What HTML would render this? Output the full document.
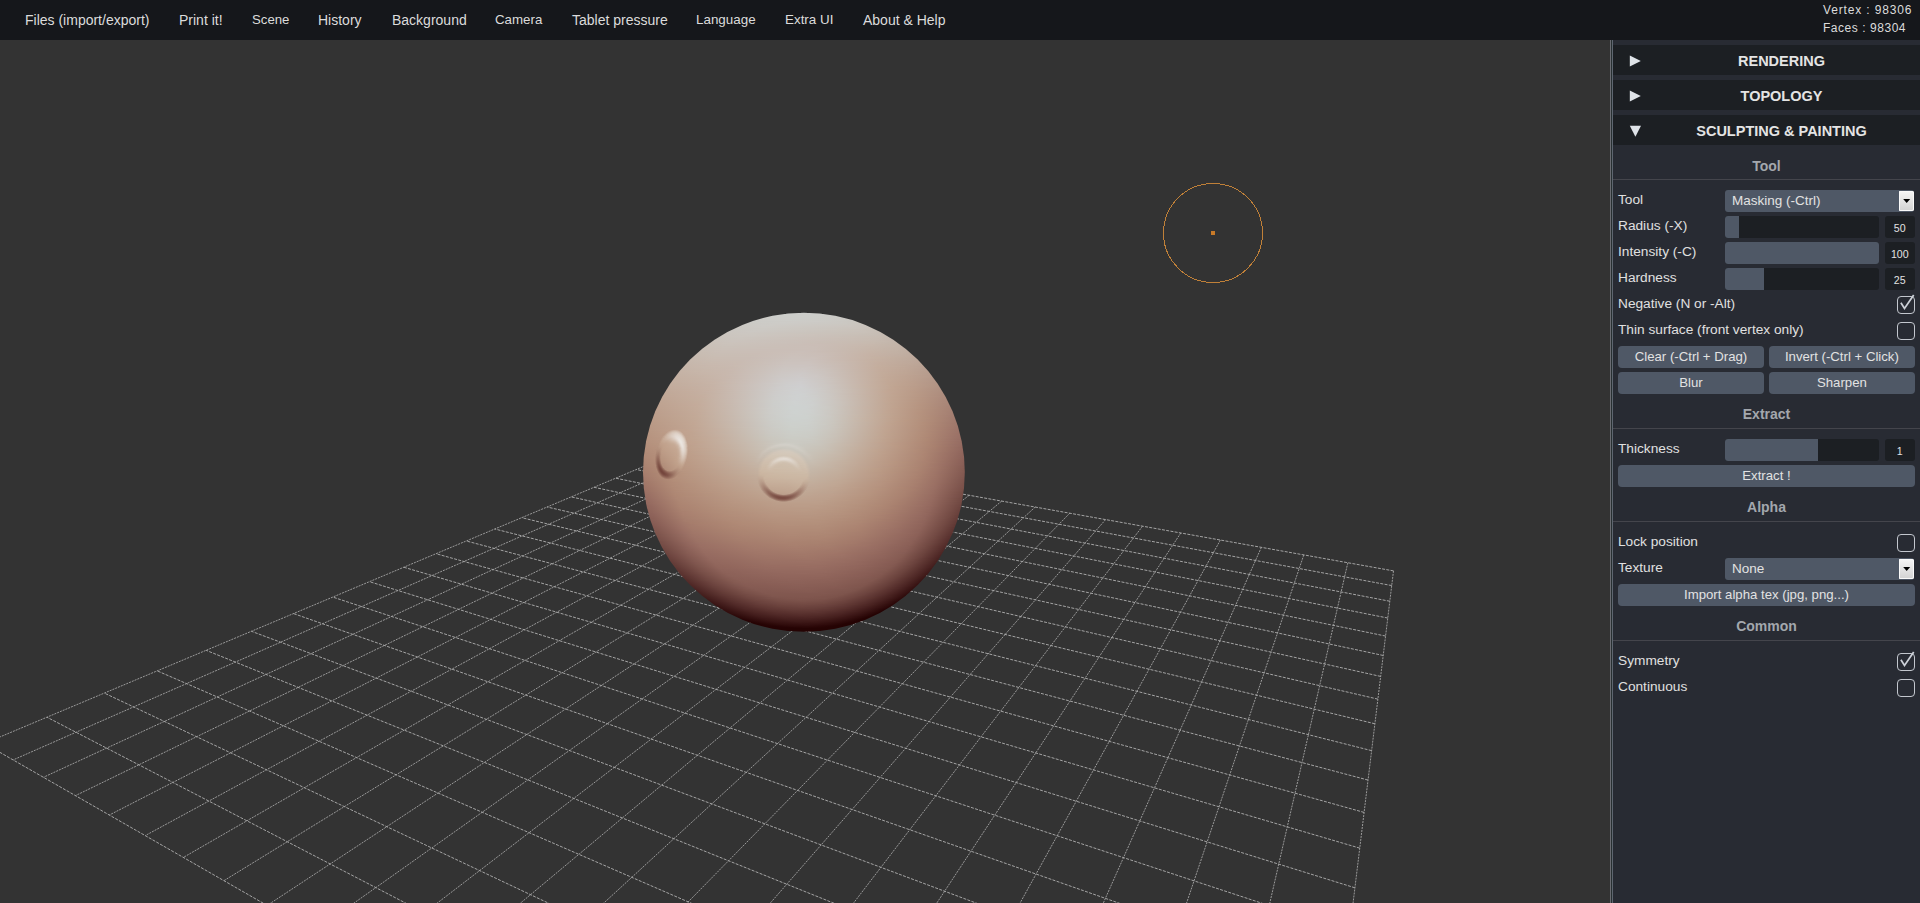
<!DOCTYPE html>
<html><head><meta charset="utf-8">
<style>
html,body{margin:0;padding:0;width:1920px;height:903px;overflow:hidden;background:#333333;font-family:"Liberation Sans",sans-serif;}
#scene{position:absolute;left:0;top:0;}
#topbar{position:absolute;left:0;top:0;width:1920px;height:40px;background:#15171b;color:#dcdcdc;font-size:14px;}
#topbar span{position:absolute;top:12px;white-space:nowrap;line-height:16px;}
#stats{position:absolute;left:1823px;top:1px;font-size:12px;line-height:18px;color:#dcdcdc;}
#stats div{white-space:nowrap;}
.vl{position:absolute;top:40px;width:1px;height:863px;}
#panel{position:absolute;left:1613px;top:40px;width:307px;height:863px;background:#282b33;color:#e0e0e0;}
.hdr{position:absolute;left:0;width:307px;height:30px;background:#1c1f23;}
.arr{position:absolute;}
.tx{position:absolute;white-space:nowrap;line-height:16px;}
.tc{position:absolute;left:0;width:307px;text-align:center;font-weight:bold;line-height:16px;}
.ln{position:absolute;left:0;width:307px;height:1px;background:#44454c;}
.sel{position:absolute;background:#4f5866;border-radius:3px;}
.sel .v{position:absolute;left:7px;top:2.5px;font-size:13.5px;line-height:16px;color:#e2e2e2;white-space:nowrap;}
.sel .ar{position:absolute;right:0;top:1px;width:15.5px;height:20px;background:linear-gradient(#f6f6f6,#d2d2d2);border-radius:1px 2px 2px 1px;box-shadow:inset 0 0 0 1px #fafafa;}
.sel .ar svg{position:absolute;left:0;top:0;}
.sl{position:absolute;background:#1c1f23;border-radius:3px;overflow:hidden;}
.sl .f{position:absolute;left:0;top:0;bottom:0;background:#4f5866;}
.num{position:absolute;background:#1c1f23;border-radius:3px;font-size:10.6px;text-align:center;line-height:24.5px;color:#e2e2e2;}
.cb{position:absolute;box-sizing:border-box;border:1.5px solid #c3c7ce;border-radius:4px;}
.btn{position:absolute;background:#4f5866;border-radius:4px;text-align:center;line-height:22px;font-size:13.2px;color:#e2e2e2;white-space:nowrap;}
</style></head><body>
<svg id="scene" width="1920" height="903" viewBox="0 0 1920 903">
<defs>
<clipPath id="sc"><ellipse cx="803.9" cy="472.3" rx="160.9" ry="159.5"/></clipPath>
<linearGradient id="g312" gradientUnits="userSpaceOnUse" x1="801.5" x2="806.5"><stop offset="0" stop-color="#cdcecb"/><stop offset="1" stop-color="#cdcecb"/></linearGradient>
<linearGradient id="g313" gradientUnits="userSpaceOnUse" x1="786.5" x2="821.5"><stop offset="0" stop-color="#cdcecb"/><stop offset="1" stop-color="#cdcdca"/></linearGradient>
<linearGradient id="g314" gradientUnits="userSpaceOnUse" x1="778.5" x2="830.5"><stop offset="0" stop-color="#cdceca"/><stop offset="0.769" stop-color="#cdcdca"/><stop offset="1" stop-color="#ccccc8"/></linearGradient>
<linearGradient id="g315" gradientUnits="userSpaceOnUse" x1="772.5" x2="836.5"><stop offset="0" stop-color="#cdceca"/><stop offset="0.703" stop-color="#cdcdca"/><stop offset="1" stop-color="#cccbc7"/></linearGradient>
<linearGradient id="g316" gradientUnits="userSpaceOnUse" x1="767.5" x2="841.5"><stop offset="0" stop-color="#cdcdc9"/><stop offset="0.486" stop-color="#cdceca"/><stop offset="0.946" stop-color="#cccac6"/><stop offset="1" stop-color="#cccac5"/></linearGradient>
<linearGradient id="g317" gradientUnits="userSpaceOnUse" x1="763.5" x2="845.5"><stop offset="0" stop-color="#cdcdc9"/><stop offset="0.695" stop-color="#cdcdc9"/><stop offset="1" stop-color="#cbc9c4"/></linearGradient>
<linearGradient id="g318" gradientUnits="userSpaceOnUse" x1="759.5" x2="849.5"><stop offset="0" stop-color="#cdccc8"/><stop offset="0.467" stop-color="#cdcdca"/><stop offset="0.9" stop-color="#cccac5"/><stop offset="1" stop-color="#cbc8c3"/></linearGradient>
<linearGradient id="g319" gradientUnits="userSpaceOnUse" x1="755.5" x2="853.5"><stop offset="0" stop-color="#cdccc8"/><stop offset="0.663" stop-color="#cdccc8"/><stop offset="1" stop-color="#cbc7c2"/></linearGradient>
<linearGradient id="g320" gradientUnits="userSpaceOnUse" x1="752.5" x2="856.5"><stop offset="0" stop-color="#cdcbc7"/><stop offset="0.346" stop-color="#cdcdc9"/><stop offset="0.865" stop-color="#cbc9c4"/><stop offset="1" stop-color="#cac6c1"/></linearGradient>
<linearGradient id="g321" gradientUnits="userSpaceOnUse" x1="749.5" x2="859.5"><stop offset="0" stop-color="#cccbc7"/><stop offset="0.609" stop-color="#cdcbc7"/><stop offset="0.927" stop-color="#cac7c1"/><stop offset="1" stop-color="#cac6bf"/></linearGradient>
<linearGradient id="g322" gradientUnits="userSpaceOnUse" x1="746.5" x2="862.5"><stop offset="0" stop-color="#cccbc6"/><stop offset="0.31" stop-color="#cdccc8"/><stop offset="0.828" stop-color="#cbc8c3"/><stop offset="1" stop-color="#cac5be"/></linearGradient>
<linearGradient id="g323" gradientUnits="userSpaceOnUse" x1="743.5" x2="864.5"><stop offset="0" stop-color="#cccac5"/><stop offset="0.331" stop-color="#cdcbc7"/><stop offset="0.835" stop-color="#cbc8c2"/><stop offset="1" stop-color="#c9c4bd"/></linearGradient>
<linearGradient id="g324" gradientUnits="userSpaceOnUse" x1="741.5" x2="867.5"><stop offset="0" stop-color="#cccac5"/><stop offset="0.246" stop-color="#cdcbc7"/><stop offset="0.841" stop-color="#cbc7c1"/><stop offset="1" stop-color="#c9c3bc"/></linearGradient>
<linearGradient id="g325" gradientUnits="userSpaceOnUse" x1="738.5" x2="869.5"><stop offset="0" stop-color="#ccc9c4"/><stop offset="0.214" stop-color="#cdcbc6"/><stop offset="0.847" stop-color="#cbc6c0"/><stop offset="1" stop-color="#c8c2bb"/></linearGradient>
<linearGradient id="g326" gradientUnits="userSpaceOnUse" x1="736.5" x2="872.5"><stop offset="0" stop-color="#ccc9c3"/><stop offset="0.199" stop-color="#cdcac6"/><stop offset="0.838" stop-color="#cbc5bf"/><stop offset="1" stop-color="#c8c1ba"/></linearGradient>
<linearGradient id="g327" gradientUnits="userSpaceOnUse" x1="734.5" x2="874.5"><stop offset="0" stop-color="#ccc8c3"/><stop offset="0.207" stop-color="#cdcac5"/><stop offset="0.879" stop-color="#cac4bd"/><stop offset="1" stop-color="#c8c0b8"/></linearGradient>
<linearGradient id="g328" gradientUnits="userSpaceOnUse" x1="732.5" x2="876.5"><stop offset="0" stop-color="#ccc8c2"/><stop offset="0.222" stop-color="#ccc9c4"/><stop offset="0.882" stop-color="#cac3bc"/><stop offset="1" stop-color="#c7bfb7"/></linearGradient>
<linearGradient id="g329" gradientUnits="userSpaceOnUse" x1="730.5" x2="878.5"><stop offset="0" stop-color="#cbc7c2"/><stop offset="0.196" stop-color="#ccc9c4"/><stop offset="0.696" stop-color="#cbc5be"/><stop offset="0.932" stop-color="#c8c1b9"/><stop offset="1" stop-color="#c7bfb6"/></linearGradient>
<linearGradient id="g330" gradientUnits="userSpaceOnUse" x1="728.5" x2="880.5"><stop offset="0" stop-color="#cbc7c1"/><stop offset="0.211" stop-color="#ccc8c3"/><stop offset="0.855" stop-color="#cac2ba"/><stop offset="1" stop-color="#c7beb5"/></linearGradient>
<linearGradient id="g331" gradientUnits="userSpaceOnUse" x1="726.5" x2="882.5"><stop offset="0" stop-color="#cbc6c0"/><stop offset="0.167" stop-color="#ccc8c3"/><stop offset="0.885" stop-color="#c9c1b9"/><stop offset="1" stop-color="#c6bdb4"/></linearGradient>
<linearGradient id="g332" gradientUnits="userSpaceOnUse" x1="724.5" x2="884.5"><stop offset="0" stop-color="#cbc6c0"/><stop offset="0.163" stop-color="#ccc7c2"/><stop offset="0.887" stop-color="#c9c0b8"/><stop offset="1" stop-color="#c6bcb3"/></linearGradient>
<linearGradient id="g333" gradientUnits="userSpaceOnUse" x1="722.5" x2="886.5"><stop offset="0" stop-color="#cbc6bf"/><stop offset="0.146" stop-color="#ccc7c1"/><stop offset="0.805" stop-color="#c9c1b8"/><stop offset="0.933" stop-color="#c7beb5"/><stop offset="1" stop-color="#c5bbb2"/></linearGradient>
<linearGradient id="g334" gradientUnits="userSpaceOnUse" x1="720.5" x2="887.5"><stop offset="0" stop-color="#cbc5be"/><stop offset="0.15" stop-color="#ccc7c1"/><stop offset="0.581" stop-color="#cbc2bb"/><stop offset="0.922" stop-color="#c7beb5"/><stop offset="1" stop-color="#c5bab1"/></linearGradient>
<linearGradient id="g335" gradientUnits="userSpaceOnUse" x1="719.5" x2="889.5"><stop offset="0" stop-color="#cbc5be"/><stop offset="0.182" stop-color="#ccc6c0"/><stop offset="0.524" stop-color="#cbc2bb"/><stop offset="0.918" stop-color="#c7bdb4"/><stop offset="1" stop-color="#c5b9b0"/></linearGradient>
<linearGradient id="g336" gradientUnits="userSpaceOnUse" x1="717.5" x2="891.5"><stop offset="0" stop-color="#cbc4bd"/><stop offset="0.138" stop-color="#ccc6c0"/><stop offset="0.563" stop-color="#cac1ba"/><stop offset="0.925" stop-color="#c7bcb2"/><stop offset="1" stop-color="#c4b9af"/></linearGradient>
<linearGradient id="g337" gradientUnits="userSpaceOnUse" x1="715.5" x2="892.5"><stop offset="0" stop-color="#cac4bc"/><stop offset="0.124" stop-color="#cbc5bf"/><stop offset="0.678" stop-color="#cabfb7"/><stop offset="0.915" stop-color="#c7bcb2"/><stop offset="1" stop-color="#c4b8ae"/></linearGradient>
<linearGradient id="g338" gradientUnits="userSpaceOnUse" x1="714.5" x2="894.5"><stop offset="0" stop-color="#cac3bc"/><stop offset="0.144" stop-color="#cbc5be"/><stop offset="0.461" stop-color="#cbc1ba"/><stop offset="0.906" stop-color="#c7bbb1"/><stop offset="1" stop-color="#c4b7ad"/></linearGradient>
<linearGradient id="g339" gradientUnits="userSpaceOnUse" x1="712.5" x2="896.5"><stop offset="0" stop-color="#cac3bb"/><stop offset="0.141" stop-color="#cbc4be"/><stop offset="0.511" stop-color="#cac0b9"/><stop offset="0.897" stop-color="#c7bbb1"/><stop offset="1" stop-color="#c3b6ac"/></linearGradient>
<linearGradient id="g340" gradientUnits="userSpaceOnUse" x1="711.5" x2="897.5"><stop offset="0" stop-color="#cac2ba"/><stop offset="0.108" stop-color="#cbc4bd"/><stop offset="0.591" stop-color="#cabeb7"/><stop offset="0.849" stop-color="#c7bbb1"/><stop offset="0.968" stop-color="#c4b6ac"/><stop offset="1" stop-color="#c3b5ab"/></linearGradient>
<linearGradient id="g341" gradientUnits="userSpaceOnUse" x1="709.5" x2="898.5"><stop offset="0" stop-color="#cac2ba"/><stop offset="0.122" stop-color="#cbc3bd"/><stop offset="0.439" stop-color="#cac0b9"/><stop offset="0.677" stop-color="#c9bdb4"/><stop offset="0.915" stop-color="#c6b9ae"/><stop offset="1" stop-color="#c2b4aa"/></linearGradient>
<linearGradient id="g342" gradientUnits="userSpaceOnUse" x1="708.5" x2="900.5"><stop offset="0" stop-color="#cac1b9"/><stop offset="0.125" stop-color="#cbc3bc"/><stop offset="0.417" stop-color="#cac0b9"/><stop offset="0.625" stop-color="#c9bdb5"/><stop offset="0.839" stop-color="#c7baaf"/><stop offset="0.958" stop-color="#c3b6ab"/><stop offset="1" stop-color="#c2b4a9"/></linearGradient>
<linearGradient id="g343" gradientUnits="userSpaceOnUse" x1="706.5" x2="901.5"><stop offset="0" stop-color="#cac1b8"/><stop offset="0.103" stop-color="#cbc3bb"/><stop offset="0.472" stop-color="#cabfb8"/><stop offset="0.667" stop-color="#c9bcb3"/><stop offset="0.851" stop-color="#c7b9ae"/><stop offset="0.959" stop-color="#c3b5aa"/><stop offset="1" stop-color="#c2b3a8"/></linearGradient>
<linearGradient id="g344" gradientUnits="userSpaceOnUse" x1="705.5" x2="903.5"><stop offset="0" stop-color="#c9c0b8"/><stop offset="0.126" stop-color="#cbc2bb"/><stop offset="0.399" stop-color="#cabfb8"/><stop offset="0.581" stop-color="#cabdb6"/><stop offset="0.828" stop-color="#c7b8ad"/><stop offset="0.949" stop-color="#c3b5a9"/><stop offset="1" stop-color="#c1b2a7"/></linearGradient>
<linearGradient id="g345" gradientUnits="userSpaceOnUse" x1="704.5" x2="904.5"><stop offset="0" stop-color="#c9c0b7"/><stop offset="0.11" stop-color="#cac2ba"/><stop offset="0.39" stop-color="#cabfb8"/><stop offset="0.575" stop-color="#cabdb6"/><stop offset="0.825" stop-color="#c7b8ac"/><stop offset="0.945" stop-color="#c3b4a9"/><stop offset="1" stop-color="#c1b1a6"/></linearGradient>
<linearGradient id="g346" gradientUnits="userSpaceOnUse" x1="702.5" x2="905.5"><stop offset="0" stop-color="#c9bfb6"/><stop offset="0.099" stop-color="#cac1b9"/><stop offset="0.547" stop-color="#cabeb7"/><stop offset="0.803" stop-color="#c7b7ac"/><stop offset="0.946" stop-color="#c3b4a8"/><stop offset="1" stop-color="#c0b0a5"/></linearGradient>
<linearGradient id="g347" gradientUnits="userSpaceOnUse" x1="701.5" x2="907.5"><stop offset="0" stop-color="#c9bfb6"/><stop offset="0.121" stop-color="#cac1b9"/><stop offset="0.33" stop-color="#cabfb7"/><stop offset="0.544" stop-color="#cabeb7"/><stop offset="0.801" stop-color="#c7b7ab"/><stop offset="0.947" stop-color="#c2b3a7"/><stop offset="1" stop-color="#c0afa4"/></linearGradient>
<linearGradient id="g348" gradientUnits="userSpaceOnUse" x1="700.5" x2="908.5"><stop offset="0" stop-color="#c9beb5"/><stop offset="0.106" stop-color="#cac0b8"/><stop offset="0.356" stop-color="#cabfb8"/><stop offset="0.543" stop-color="#cabeb7"/><stop offset="0.808" stop-color="#c6b6aa"/><stop offset="0.947" stop-color="#c2b2a6"/><stop offset="1" stop-color="#c0afa3"/></linearGradient>
<linearGradient id="g349" gradientUnits="userSpaceOnUse" x1="699.5" x2="909.5"><stop offset="0" stop-color="#c9beb4"/><stop offset="0.105" stop-color="#cac0b8"/><stop offset="0.276" stop-color="#cabeb7"/><stop offset="0.548" stop-color="#cabeb7"/><stop offset="0.814" stop-color="#c6b5a9"/><stop offset="0.938" stop-color="#c2b2a6"/><stop offset="1" stop-color="#bfaea2"/></linearGradient>
<linearGradient id="g350" gradientUnits="userSpaceOnUse" x1="698.5" x2="910.5"><stop offset="0" stop-color="#c8bdb4"/><stop offset="0.123" stop-color="#cabfb7"/><stop offset="0.349" stop-color="#cabeb7"/><stop offset="0.524" stop-color="#cabeb8"/><stop offset="0.816" stop-color="#c6b5a8"/><stop offset="0.943" stop-color="#c2b1a4"/><stop offset="1" stop-color="#bfada1"/></linearGradient>
<linearGradient id="g351" gradientUnits="userSpaceOnUse" x1="696.5" x2="911.5"><stop offset="0" stop-color="#c8bdb3"/><stop offset="0.102" stop-color="#cabfb6"/><stop offset="0.302" stop-color="#cabeb6"/><stop offset="0.493" stop-color="#cabfb9"/><stop offset="0.67" stop-color="#c8b9b0"/><stop offset="0.819" stop-color="#c6b4a7"/><stop offset="0.949" stop-color="#c1b0a3"/><stop offset="1" stop-color="#bfaca0"/></linearGradient>
<linearGradient id="g352" gradientUnits="userSpaceOnUse" x1="695.5" x2="913.5"><stop offset="0" stop-color="#c8bcb2"/><stop offset="0.115" stop-color="#cabeb6"/><stop offset="0.307" stop-color="#cabeb6"/><stop offset="0.491" stop-color="#cbbfb9"/><stop offset="0.638" stop-color="#c9bbb2"/><stop offset="0.798" stop-color="#c6b4a7"/><stop offset="0.936" stop-color="#c1b0a3"/><stop offset="1" stop-color="#beab9f"/></linearGradient>
<linearGradient id="g353" gradientUnits="userSpaceOnUse" x1="694.5" x2="914.5"><stop offset="0" stop-color="#c8bcb2"/><stop offset="0.118" stop-color="#c9beb5"/><stop offset="0.273" stop-color="#cabdb5"/><stop offset="0.455" stop-color="#cbc0b9"/><stop offset="0.564" stop-color="#cabeb7"/><stop offset="0.8" stop-color="#c6b3a6"/><stop offset="0.941" stop-color="#c1afa2"/><stop offset="0.995" stop-color="#beab9e"/><stop offset="1" stop-color="#beab9e"/></linearGradient>
<linearGradient id="g354" gradientUnits="userSpaceOnUse" x1="693.5" x2="915.5"><stop offset="0" stop-color="#c8bbb1"/><stop offset="0.095" stop-color="#c9beb4"/><stop offset="0.279" stop-color="#cabdb5"/><stop offset="0.468" stop-color="#cbc0ba"/><stop offset="0.586" stop-color="#cabdb6"/><stop offset="0.788" stop-color="#c6b3a6"/><stop offset="0.946" stop-color="#c0aea1"/><stop offset="0.995" stop-color="#bdaa9d"/><stop offset="1" stop-color="#bdaa9d"/></linearGradient>
<linearGradient id="g355" gradientUnits="userSpaceOnUse" x1="692.5" x2="916.5"><stop offset="0" stop-color="#c8bbb0"/><stop offset="0.107" stop-color="#c9bdb4"/><stop offset="0.25" stop-color="#c9bdb4"/><stop offset="0.446" stop-color="#cbc0ba"/><stop offset="0.558" stop-color="#cabeb8"/><stop offset="0.795" stop-color="#c6b2a5"/><stop offset="0.946" stop-color="#c0ada0"/><stop offset="1" stop-color="#bda99c"/></linearGradient>
<linearGradient id="g356" gradientUnits="userSpaceOnUse" x1="691.5" x2="917.5"><stop offset="0" stop-color="#c7bab0"/><stop offset="0.102" stop-color="#c9bdb3"/><stop offset="0.283" stop-color="#cabdb5"/><stop offset="0.46" stop-color="#cbc1bb"/><stop offset="0.58" stop-color="#cabeb7"/><stop offset="0.796" stop-color="#c5b2a4"/><stop offset="0.938" stop-color="#c0ad9f"/><stop offset="1" stop-color="#bda89b"/></linearGradient>
<linearGradient id="g357" gradientUnits="userSpaceOnUse" x1="690.5" x2="918.5"><stop offset="0" stop-color="#c7baaf"/><stop offset="0.096" stop-color="#c9bcb2"/><stop offset="0.259" stop-color="#c9bcb4"/><stop offset="0.443" stop-color="#cbc1bb"/><stop offset="0.535" stop-color="#cbc0ba"/><stop offset="0.689" stop-color="#c8b7ad"/><stop offset="0.82" stop-color="#c5b1a2"/><stop offset="0.956" stop-color="#bfab9d"/><stop offset="1" stop-color="#bca79a"/></linearGradient>
<linearGradient id="g358" gradientUnits="userSpaceOnUse" x1="689.5" x2="919.5"><stop offset="0" stop-color="#c7b9ae"/><stop offset="0.104" stop-color="#c9bcb2"/><stop offset="0.261" stop-color="#c9bcb4"/><stop offset="0.448" stop-color="#cbc1bc"/><stop offset="0.543" stop-color="#cbc0ba"/><stop offset="0.726" stop-color="#c7b5a9"/><stop offset="0.83" stop-color="#c4b0a1"/><stop offset="0.957" stop-color="#beaa9c"/><stop offset="1" stop-color="#bca799"/></linearGradient>
<linearGradient id="g359" gradientUnits="userSpaceOnUse" x1="688.5" x2="920.5"><stop offset="0" stop-color="#c7b9ae"/><stop offset="0.103" stop-color="#c9bbb1"/><stop offset="0.241" stop-color="#c9bcb3"/><stop offset="0.435" stop-color="#cbc2bc"/><stop offset="0.517" stop-color="#cbc1bc"/><stop offset="0.659" stop-color="#c8b9b0"/><stop offset="0.797" stop-color="#c5b0a2"/><stop offset="0.953" stop-color="#beaa9c"/><stop offset="1" stop-color="#bba698"/></linearGradient>
<linearGradient id="g360" gradientUnits="userSpaceOnUse" x1="687.5" x2="921.5"><stop offset="0" stop-color="#c7b8ad"/><stop offset="0.111" stop-color="#c8bbb1"/><stop offset="0.239" stop-color="#c9bbb3"/><stop offset="0.44" stop-color="#cbc2bd"/><stop offset="0.547" stop-color="#cbc0bb"/><stop offset="0.748" stop-color="#c6b3a6"/><stop offset="0.846" stop-color="#c3ae9f"/><stop offset="0.953" stop-color="#bea99b"/><stop offset="1" stop-color="#bba597"/></linearGradient>
<linearGradient id="g361" gradientUnits="userSpaceOnUse" x1="686.5" x2="922.5"><stop offset="0" stop-color="#c7b8ac"/><stop offset="0.102" stop-color="#c8bab0"/><stop offset="0.229" stop-color="#c9bbb2"/><stop offset="0.424" stop-color="#cbc2bd"/><stop offset="0.521" stop-color="#cbc2bd"/><stop offset="0.653" stop-color="#c9bab1"/><stop offset="0.797" stop-color="#c5b0a1"/><stop offset="0.949" stop-color="#bea89a"/><stop offset="1" stop-color="#bba497"/></linearGradient>
<linearGradient id="g362" gradientUnits="userSpaceOnUse" x1="685.5" x2="923.5"><stop offset="0" stop-color="#c6b7ac"/><stop offset="0.101" stop-color="#c8baaf"/><stop offset="0.235" stop-color="#c9bbb2"/><stop offset="0.429" stop-color="#ccc3be"/><stop offset="0.517" stop-color="#ccc2be"/><stop offset="0.66" stop-color="#c8bab0"/><stop offset="0.811" stop-color="#c4ae9f"/><stop offset="0.945" stop-color="#bea89a"/><stop offset="1" stop-color="#baa396"/></linearGradient>
<linearGradient id="g363" gradientUnits="userSpaceOnUse" x1="684.5" x2="924.5"><stop offset="0" stop-color="#c6b7ab"/><stop offset="0.121" stop-color="#c8b9af"/><stop offset="0.237" stop-color="#c9bbb2"/><stop offset="0.417" stop-color="#ccc3be"/><stop offset="0.521" stop-color="#ccc3be"/><stop offset="0.629" stop-color="#c9bcb4"/><stop offset="0.804" stop-color="#c4ae9f"/><stop offset="0.942" stop-color="#bea899"/><stop offset="0.992" stop-color="#baa395"/><stop offset="1" stop-color="#baa395"/></linearGradient>
<linearGradient id="g364" gradientUnits="userSpaceOnUse" x1="683.5" x2="925.5"><stop offset="0" stop-color="#c6b6aa"/><stop offset="0.099" stop-color="#c8b9ae"/><stop offset="0.223" stop-color="#c9bab1"/><stop offset="0.426" stop-color="#ccc3bf"/><stop offset="0.521" stop-color="#ccc3bf"/><stop offset="0.649" stop-color="#c9bbb2"/><stop offset="0.798" stop-color="#c4ae9f"/><stop offset="0.938" stop-color="#bea798"/><stop offset="1" stop-color="#b9a294"/></linearGradient>
<linearGradient id="g365" gradientUnits="userSpaceOnUse" x1="682.5" x2="926.5"><stop offset="0" stop-color="#c6b6aa"/><stop offset="0.139" stop-color="#c8b8ae"/><stop offset="0.254" stop-color="#c9bcb3"/><stop offset="0.414" stop-color="#ccc4bf"/><stop offset="0.492" stop-color="#ccc4c1"/><stop offset="0.594" stop-color="#cabfb9"/><stop offset="0.803" stop-color="#c4ae9e"/><stop offset="0.955" stop-color="#bca596"/><stop offset="1" stop-color="#b9a193"/></linearGradient>
<linearGradient id="g366" gradientUnits="userSpaceOnUse" x1="681.5" x2="927.5"><stop offset="0" stop-color="#c6b5a9"/><stop offset="0.106" stop-color="#c8b8ad"/><stop offset="0.215" stop-color="#c9bab0"/><stop offset="0.419" stop-color="#ccc4c0"/><stop offset="0.524" stop-color="#ccc4c0"/><stop offset="0.642" stop-color="#c9bbb3"/><stop offset="0.797" stop-color="#c4ae9e"/><stop offset="0.894" stop-color="#c0a999"/><stop offset="0.98" stop-color="#b9a193"/><stop offset="1" stop-color="#b8a092"/></linearGradient>
<linearGradient id="g367" gradientUnits="userSpaceOnUse" x1="680.5" x2="928.5"><stop offset="0" stop-color="#c6b5a8"/><stop offset="0.097" stop-color="#c7b8ac"/><stop offset="0.202" stop-color="#c8b9af"/><stop offset="0.423" stop-color="#ccc5c1"/><stop offset="0.52" stop-color="#ccc5c1"/><stop offset="0.637" stop-color="#c9bcb4"/><stop offset="0.798" stop-color="#c4ad9d"/><stop offset="0.948" stop-color="#bca495"/><stop offset="1" stop-color="#b89f91"/></linearGradient>
<linearGradient id="g368" gradientUnits="userSpaceOnUse" x1="679.5" x2="929.5"><stop offset="0" stop-color="#c5b4a8"/><stop offset="0.104" stop-color="#c7b7ac"/><stop offset="0.208" stop-color="#c8b9af"/><stop offset="0.412" stop-color="#ccc5c1"/><stop offset="0.496" stop-color="#cdc6c3"/><stop offset="0.596" stop-color="#cbc0ba"/><stop offset="0.796" stop-color="#c4ad9d"/><stop offset="0.9" stop-color="#bfa797"/><stop offset="0.976" stop-color="#b9a092"/><stop offset="1" stop-color="#b89f90"/></linearGradient>
<linearGradient id="g369" gradientUnits="userSpaceOnUse" x1="678.5" x2="929.5"><stop offset="0" stop-color="#c5b4a7"/><stop offset="0.112" stop-color="#c7b7ab"/><stop offset="0.219" stop-color="#c9b9b0"/><stop offset="0.418" stop-color="#ccc6c2"/><stop offset="0.498" stop-color="#cdc6c3"/><stop offset="0.57" stop-color="#cbc3be"/><stop offset="0.805" stop-color="#c3ac9c"/><stop offset="0.908" stop-color="#bea696"/><stop offset="0.98" stop-color="#b89f91"/><stop offset="1" stop-color="#b79e90"/></linearGradient>
<linearGradient id="g370" gradientUnits="userSpaceOnUse" x1="678.5" x2="930.5"><stop offset="0" stop-color="#c5b3a6"/><stop offset="0.095" stop-color="#c7b6aa"/><stop offset="0.198" stop-color="#c8b8ae"/><stop offset="0.409" stop-color="#ccc6c2"/><stop offset="0.504" stop-color="#cdc7c4"/><stop offset="0.607" stop-color="#cac0b9"/><stop offset="0.798" stop-color="#c4ac9c"/><stop offset="0.893" stop-color="#bfa696"/><stop offset="0.968" stop-color="#b9a091"/><stop offset="1" stop-color="#b79d8f"/></linearGradient>
<linearGradient id="g371" gradientUnits="userSpaceOnUse" x1="677.5" x2="931.5"><stop offset="0" stop-color="#c5b3a5"/><stop offset="0.079" stop-color="#c7b6a9"/><stop offset="0.205" stop-color="#c8b8ae"/><stop offset="0.413" stop-color="#cdc6c3"/><stop offset="0.492" stop-color="#cdc7c5"/><stop offset="0.575" stop-color="#cbc3be"/><stop offset="0.803" stop-color="#c3ab9b"/><stop offset="0.898" stop-color="#bea595"/><stop offset="0.976" stop-color="#b89e8f"/><stop offset="1" stop-color="#b69c8e"/></linearGradient>
<linearGradient id="g372" gradientUnits="userSpaceOnUse" x1="676.5" x2="932.5"><stop offset="0" stop-color="#c5b2a5"/><stop offset="0.094" stop-color="#c7b5a9"/><stop offset="0.195" stop-color="#c8b8ad"/><stop offset="0.418" stop-color="#cdc7c4"/><stop offset="0.496" stop-color="#cdc8c6"/><stop offset="0.602" stop-color="#cbc1bb"/><stop offset="0.797" stop-color="#c3ac9b"/><stop offset="0.898" stop-color="#bea594"/><stop offset="0.977" stop-color="#b79d8e"/><stop offset="1" stop-color="#b69c8d"/></linearGradient>
<linearGradient id="g373" gradientUnits="userSpaceOnUse" x1="675.5" x2="933.5"><stop offset="0" stop-color="#c4b2a4"/><stop offset="0.093" stop-color="#c7b5a8"/><stop offset="0.209" stop-color="#c8b8ae"/><stop offset="0.411" stop-color="#cdc7c4"/><stop offset="0.492" stop-color="#cdc9c7"/><stop offset="0.581" stop-color="#cbc3be"/><stop offset="0.802" stop-color="#c3ab9a"/><stop offset="0.903" stop-color="#bda493"/><stop offset="0.981" stop-color="#b69c8d"/><stop offset="1" stop-color="#b69b8c"/></linearGradient>
<linearGradient id="g374" gradientUnits="userSpaceOnUse" x1="674.5" x2="934.5"><stop offset="0" stop-color="#c4b1a3"/><stop offset="0.092" stop-color="#c6b4a8"/><stop offset="0.188" stop-color="#c8b7ac"/><stop offset="0.415" stop-color="#cdc8c5"/><stop offset="0.485" stop-color="#cec9c8"/><stop offset="0.562" stop-color="#ccc5c1"/><stop offset="0.708" stop-color="#c7b5a9"/><stop offset="0.815" stop-color="#c2a998"/><stop offset="0.931" stop-color="#bba191"/><stop offset="0.996" stop-color="#b59a8b"/><stop offset="1" stop-color="#b59a8b"/></linearGradient>
<linearGradient id="g375" gradientUnits="userSpaceOnUse" x1="674.5" x2="934.5"><stop offset="0" stop-color="#c4b1a3"/><stop offset="0.131" stop-color="#c7b5a8"/><stop offset="0.227" stop-color="#c8b9b0"/><stop offset="0.408" stop-color="#cdc8c5"/><stop offset="0.477" stop-color="#cecac8"/><stop offset="0.542" stop-color="#cdc7c4"/><stop offset="0.677" stop-color="#c8b9af"/><stop offset="0.796" stop-color="#c3ab9a"/><stop offset="0.892" stop-color="#bea392"/><stop offset="0.977" stop-color="#b69b8c"/><stop offset="1" stop-color="#b5998b"/></linearGradient>
<linearGradient id="g376" gradientUnits="userSpaceOnUse" x1="673.5" x2="935.5"><stop offset="0" stop-color="#c4b0a2"/><stop offset="0.115" stop-color="#c6b4a7"/><stop offset="0.214" stop-color="#c8b8ae"/><stop offset="0.401" stop-color="#cdc8c5"/><stop offset="0.477" stop-color="#cecac9"/><stop offset="0.55" stop-color="#cdc7c4"/><stop offset="0.702" stop-color="#c7b6aa"/><stop offset="0.813" stop-color="#c2a997"/><stop offset="0.958" stop-color="#b89d8d"/><stop offset="1" stop-color="#b4988a"/></linearGradient>
<linearGradient id="g377" gradientUnits="userSpaceOnUse" x1="672.5" x2="936.5"><stop offset="0" stop-color="#c4b0a1"/><stop offset="0.098" stop-color="#c6b3a6"/><stop offset="0.197" stop-color="#c8b7ac"/><stop offset="0.417" stop-color="#cdc9c7"/><stop offset="0.492" stop-color="#cecbca"/><stop offset="0.587" stop-color="#ccc4bf"/><stop offset="0.803" stop-color="#c2a998"/><stop offset="0.905" stop-color="#bca190"/><stop offset="1" stop-color="#b49889"/></linearGradient>
<linearGradient id="g378" gradientUnits="userSpaceOnUse" x1="671.5" x2="937.5"><stop offset="0" stop-color="#c3afa1"/><stop offset="0.12" stop-color="#c6b3a6"/><stop offset="0.218" stop-color="#c8b8ae"/><stop offset="0.41" stop-color="#cdc9c7"/><stop offset="0.485" stop-color="#cecbcb"/><stop offset="0.568" stop-color="#ccc6c2"/><stop offset="0.711" stop-color="#c7b5a8"/><stop offset="0.808" stop-color="#c2a997"/><stop offset="0.91" stop-color="#bba08f"/><stop offset="0.981" stop-color="#b49889"/><stop offset="1" stop-color="#b39788"/></linearGradient>
<linearGradient id="g379" gradientUnits="userSpaceOnUse" x1="671.5" x2="937.5"><stop offset="0" stop-color="#c3afa0"/><stop offset="0.173" stop-color="#c7b5a9"/><stop offset="0.421" stop-color="#cecac9"/><stop offset="0.496" stop-color="#cecccb"/><stop offset="0.602" stop-color="#cbc3bd"/><stop offset="0.805" stop-color="#c2a997"/><stop offset="0.902" stop-color="#bca08f"/><stop offset="0.977" stop-color="#b49889"/><stop offset="1" stop-color="#b39687"/></linearGradient>
<linearGradient id="g380" gradientUnits="userSpaceOnUse" x1="670.5" x2="938.5"><stop offset="0" stop-color="#c3ae9f"/><stop offset="0.097" stop-color="#c6b2a4"/><stop offset="0.194" stop-color="#c7b6ab"/><stop offset="0.422" stop-color="#cecbc9"/><stop offset="0.489" stop-color="#cecccc"/><stop offset="0.567" stop-color="#ccc7c3"/><stop offset="0.705" stop-color="#c7b5a9"/><stop offset="0.81" stop-color="#c2a896"/><stop offset="0.907" stop-color="#bb9f8e"/><stop offset="0.978" stop-color="#b49788"/><stop offset="1" stop-color="#b39587"/></linearGradient>
<linearGradient id="g381" gradientUnits="userSpaceOnUse" x1="669.5" x2="939.5"><stop offset="0" stop-color="#c3ae9f"/><stop offset="0.17" stop-color="#c7b4a8"/><stop offset="0.426" stop-color="#cecbca"/><stop offset="0.489" stop-color="#cfcdcd"/><stop offset="0.593" stop-color="#ccc4bf"/><stop offset="0.793" stop-color="#c2a998"/><stop offset="0.878" stop-color="#bda18f"/><stop offset="0.967" stop-color="#b59888"/><stop offset="1" stop-color="#b29586"/></linearGradient>
<linearGradient id="g382" gradientUnits="userSpaceOnUse" x1="668.5" x2="939.5"><stop offset="0" stop-color="#c3ad9e"/><stop offset="0.166" stop-color="#c7b4a7"/><stop offset="0.303" stop-color="#cbc0ba"/><stop offset="0.432" stop-color="#cecccb"/><stop offset="0.487" stop-color="#cfcdce"/><stop offset="0.572" stop-color="#ccc7c3"/><stop offset="0.712" stop-color="#c7b4a8"/><stop offset="0.812" stop-color="#c1a795"/><stop offset="0.9" stop-color="#bb9f8d"/><stop offset="0.982" stop-color="#b39586"/><stop offset="1" stop-color="#b29485"/></linearGradient>
<linearGradient id="g383" gradientUnits="userSpaceOnUse" x1="668.5" x2="940.5"><stop offset="0" stop-color="#c2ad9d"/><stop offset="0.114" stop-color="#c6b1a3"/><stop offset="0.21" stop-color="#c8b7ac"/><stop offset="0.404" stop-color="#cecbc9"/><stop offset="0.482" stop-color="#cfcece"/><stop offset="0.548" stop-color="#cdc9c7"/><stop offset="0.676" stop-color="#c8b9af"/><stop offset="0.801" stop-color="#c2a896"/><stop offset="0.89" stop-color="#bc9f8d"/><stop offset="0.978" stop-color="#b39586"/><stop offset="1" stop-color="#b19384"/></linearGradient>
<linearGradient id="g384" gradientUnits="userSpaceOnUse" x1="667.5" x2="941.5"><stop offset="0" stop-color="#c2ac9d"/><stop offset="0.164" stop-color="#c6b3a6"/><stop offset="0.325" stop-color="#cbc3be"/><stop offset="0.434" stop-color="#cecdcc"/><stop offset="0.489" stop-color="#cfcecf"/><stop offset="0.584" stop-color="#ccc6c1"/><stop offset="0.708" stop-color="#c7b5a8"/><stop offset="0.81" stop-color="#c1a794"/><stop offset="0.909" stop-color="#ba9d8b"/><stop offset="1" stop-color="#b19283"/></linearGradient>
<linearGradient id="g385" gradientUnits="userSpaceOnUse" x1="666.5" x2="941.5"><stop offset="0" stop-color="#c2ac9c"/><stop offset="0.167" stop-color="#c6b3a6"/><stop offset="0.335" stop-color="#ccc4bf"/><stop offset="0.44" stop-color="#cecdcd"/><stop offset="0.491" stop-color="#cfcecf"/><stop offset="0.589" stop-color="#ccc6c1"/><stop offset="0.727" stop-color="#c6b2a4"/><stop offset="0.818" stop-color="#c1a693"/><stop offset="0.916" stop-color="#b99c8a"/><stop offset="0.996" stop-color="#b09283"/><stop offset="1" stop-color="#b09283"/></linearGradient>
<linearGradient id="g386" gradientUnits="userSpaceOnUse" x1="666.5" x2="942.5"><stop offset="0" stop-color="#c2ab9b"/><stop offset="0.159" stop-color="#c6b2a5"/><stop offset="0.312" stop-color="#cbc2bc"/><stop offset="0.435" stop-color="#cececd"/><stop offset="0.486" stop-color="#cfcfd0"/><stop offset="0.583" stop-color="#ccc6c2"/><stop offset="0.739" stop-color="#c5b0a1"/><stop offset="0.833" stop-color="#bfa390"/><stop offset="0.942" stop-color="#b69887"/><stop offset="0.996" stop-color="#b09182"/><stop offset="1" stop-color="#b09182"/></linearGradient>
<linearGradient id="g387" gradientUnits="userSpaceOnUse" x1="665.5" x2="943.5"><stop offset="0" stop-color="#c2aa9b"/><stop offset="0.108" stop-color="#c5afa1"/><stop offset="0.187" stop-color="#c7b4a8"/><stop offset="0.41" stop-color="#cecccb"/><stop offset="0.489" stop-color="#cfcfd0"/><stop offset="0.579" stop-color="#ccc7c3"/><stop offset="0.719" stop-color="#c6b3a5"/><stop offset="0.824" stop-color="#c0a491"/><stop offset="0.91" stop-color="#b99b89"/><stop offset="0.996" stop-color="#af9081"/><stop offset="1" stop-color="#af9081"/></linearGradient>
<linearGradient id="g388" gradientUnits="userSpaceOnUse" x1="664.5" x2="943.5"><stop offset="0" stop-color="#c1aa9a"/><stop offset="0.161" stop-color="#c6b2a4"/><stop offset="0.29" stop-color="#cabfb8"/><stop offset="0.412" stop-color="#cecccb"/><stop offset="0.484" stop-color="#cfd0d0"/><stop offset="0.559" stop-color="#cdcac7"/><stop offset="0.692" stop-color="#c7b7ac"/><stop offset="0.81" stop-color="#c1a693"/><stop offset="0.889" stop-color="#bb9d8a"/><stop offset="0.978" stop-color="#b19182"/><stop offset="1" stop-color="#af8f80"/></linearGradient>
<linearGradient id="g389" gradientUnits="userSpaceOnUse" x1="664.5" x2="944.5"><stop offset="0" stop-color="#c1a999"/><stop offset="0.1" stop-color="#c4ae9f"/><stop offset="0.193" stop-color="#c7b4a8"/><stop offset="0.393" stop-color="#cdcbc9"/><stop offset="0.471" stop-color="#cfd0d0"/><stop offset="0.521" stop-color="#cececd"/><stop offset="0.636" stop-color="#cac0b8"/><stop offset="0.8" stop-color="#c1a694"/><stop offset="0.893" stop-color="#ba9c89"/><stop offset="0.986" stop-color="#af8f80"/><stop offset="1" stop-color="#ae8e80"/></linearGradient>
<linearGradient id="g390" gradientUnits="userSpaceOnUse" x1="663.5" x2="945.5"><stop offset="0" stop-color="#c1a999"/><stop offset="0.16" stop-color="#c6b1a3"/><stop offset="0.344" stop-color="#ccc6c2"/><stop offset="0.436" stop-color="#cfcfce"/><stop offset="0.496" stop-color="#cfcfd0"/><stop offset="0.571" stop-color="#cdc9c5"/><stop offset="0.688" stop-color="#c7b8ac"/><stop offset="0.801" stop-color="#c1a693"/><stop offset="0.897" stop-color="#b99a88"/><stop offset="0.972" stop-color="#b09181"/><stop offset="1" stop-color="#ae8e7f"/></linearGradient>
<linearGradient id="g391" gradientUnits="userSpaceOnUse" x1="663.5" x2="945.5"><stop offset="0" stop-color="#c1a898"/><stop offset="0.117" stop-color="#c5ae9f"/><stop offset="0.213" stop-color="#c7b6ab"/><stop offset="0.397" stop-color="#ceccca"/><stop offset="0.468" stop-color="#cfd0d0"/><stop offset="0.518" stop-color="#cecece"/><stop offset="0.617" stop-color="#cbc3bc"/><stop offset="0.791" stop-color="#c2a795"/><stop offset="0.879" stop-color="#bb9c89"/><stop offset="0.979" stop-color="#af8f80"/><stop offset="1" stop-color="#ae8d7e"/></linearGradient>
<linearGradient id="g392" gradientUnits="userSpaceOnUse" x1="662.5" x2="946.5"><stop offset="0" stop-color="#c0a897"/><stop offset="0.155" stop-color="#c5b0a2"/><stop offset="0.299" stop-color="#cac1ba"/><stop offset="0.412" stop-color="#cecdcc"/><stop offset="0.475" stop-color="#cfd0d1"/><stop offset="0.532" stop-color="#cecdcc"/><stop offset="0.637" stop-color="#cac0b8"/><stop offset="0.789" stop-color="#c2a795"/><stop offset="0.891" stop-color="#b99a87"/><stop offset="0.975" stop-color="#af8f7f"/><stop offset="0.996" stop-color="#ad8c7e"/><stop offset="1" stop-color="#ad8c7e"/></linearGradient>
<linearGradient id="g393" gradientUnits="userSpaceOnUse" x1="662.5" x2="946.5"><stop offset="0" stop-color="#c0a797"/><stop offset="0.109" stop-color="#c4ad9e"/><stop offset="0.187" stop-color="#c6b3a6"/><stop offset="0.394" stop-color="#ceccca"/><stop offset="0.465" stop-color="#cfd0d0"/><stop offset="0.5" stop-color="#cfd0d0"/><stop offset="0.574" stop-color="#ccc9c5"/><stop offset="0.701" stop-color="#c7b5a9"/><stop offset="0.81" stop-color="#c0a491"/><stop offset="0.901" stop-color="#b89986"/><stop offset="0.982" stop-color="#ae8d7e"/><stop offset="1" stop-color="#ad8b7d"/></linearGradient>
<linearGradient id="g394" gradientUnits="userSpaceOnUse" x1="661.5" x2="947.5"><stop offset="0" stop-color="#c0a796"/><stop offset="0.154" stop-color="#c5b0a1"/><stop offset="0.28" stop-color="#cabeb6"/><stop offset="0.406" stop-color="#cecdcc"/><stop offset="0.49" stop-color="#cfd1d1"/><stop offset="0.58" stop-color="#ccc8c4"/><stop offset="0.706" stop-color="#c6b4a7"/><stop offset="0.808" stop-color="#c0a491"/><stop offset="0.902" stop-color="#b89885"/><stop offset="0.983" stop-color="#ad8c7d"/><stop offset="1" stop-color="#ac8b7c"/></linearGradient>
<linearGradient id="g395" gradientUnits="userSpaceOnUse" x1="660.5" x2="947.5"><stop offset="0" stop-color="#c0a695"/><stop offset="0.15" stop-color="#c5afa0"/><stop offset="0.275" stop-color="#c9bdb5"/><stop offset="0.401" stop-color="#cecdcb"/><stop offset="0.477" stop-color="#cfd1d1"/><stop offset="0.537" stop-color="#cececc"/><stop offset="0.638" stop-color="#cac0b8"/><stop offset="0.791" stop-color="#c1a794"/><stop offset="0.889" stop-color="#b99986"/><stop offset="0.979" stop-color="#ad8c7d"/><stop offset="1" stop-color="#ac8a7c"/></linearGradient>
<linearGradient id="g396" gradientUnits="userSpaceOnUse" x1="660.5" x2="948.5"><stop offset="0" stop-color="#c0a695"/><stop offset="0.142" stop-color="#c5ae9f"/><stop offset="0.247" stop-color="#c8bab0"/><stop offset="0.392" stop-color="#cdccca"/><stop offset="0.455" stop-color="#cfd1d0"/><stop offset="0.507" stop-color="#cfd0d0"/><stop offset="0.59" stop-color="#ccc7c2"/><stop offset="0.726" stop-color="#c5b1a2"/><stop offset="0.826" stop-color="#bea18d"/><stop offset="0.927" stop-color="#b49482"/><stop offset="0.997" stop-color="#ab897b"/><stop offset="1" stop-color="#ab897b"/></linearGradient>
<linearGradient id="g397" gradientUnits="userSpaceOnUse" x1="659.5" x2="949.5"><stop offset="0" stop-color="#bfa594"/><stop offset="0.148" stop-color="#c5ae9f"/><stop offset="0.259" stop-color="#c9bbb2"/><stop offset="0.407" stop-color="#cececc"/><stop offset="0.476" stop-color="#cfd1d1"/><stop offset="0.531" stop-color="#cececd"/><stop offset="0.617" stop-color="#cbc3bc"/><stop offset="0.8" stop-color="#c0a491"/><stop offset="0.886" stop-color="#b89885"/><stop offset="0.976" stop-color="#ad8b7c"/><stop offset="0.997" stop-color="#ab887a"/><stop offset="1" stop-color="#ab887a"/></linearGradient>
<linearGradient id="g398" gradientUnits="userSpaceOnUse" x1="659.5" x2="949.5"><stop offset="0" stop-color="#bfa594"/><stop offset="0.141" stop-color="#c4ae9e"/><stop offset="0.252" stop-color="#c8bab1"/><stop offset="0.397" stop-color="#cecdcb"/><stop offset="0.472" stop-color="#cfd1d1"/><stop offset="0.531" stop-color="#cecfcd"/><stop offset="0.614" stop-color="#cbc4bd"/><stop offset="0.79" stop-color="#c1a693"/><stop offset="0.9" stop-color="#b79683"/><stop offset="0.972" stop-color="#ad8b7c"/><stop offset="1" stop-color="#aa887a"/></linearGradient>
<linearGradient id="g399" gradientUnits="userSpaceOnUse" x1="658.5" x2="950.5"><stop offset="0" stop-color="#bfa493"/><stop offset="0.147" stop-color="#c4ae9e"/><stop offset="0.271" stop-color="#c9bdb4"/><stop offset="0.404" stop-color="#cececc"/><stop offset="0.476" stop-color="#cfd1d1"/><stop offset="0.531" stop-color="#cecfcd"/><stop offset="0.623" stop-color="#cac2bb"/><stop offset="0.788" stop-color="#c1a693"/><stop offset="0.877" stop-color="#b99985"/><stop offset="0.973" stop-color="#ac8a7b"/><stop offset="1" stop-color="#aa8779"/></linearGradient>
<linearGradient id="g400" gradientUnits="userSpaceOnUse" x1="658.5" x2="950.5"><stop offset="0" stop-color="#bfa492"/><stop offset="0.147" stop-color="#c4ae9e"/><stop offset="0.26" stop-color="#c9bbb2"/><stop offset="0.39" stop-color="#cdcdca"/><stop offset="0.466" stop-color="#cfd1d1"/><stop offset="0.521" stop-color="#ced0ce"/><stop offset="0.592" stop-color="#ccc7c2"/><stop offset="0.791" stop-color="#c1a592"/><stop offset="0.901" stop-color="#b69582"/><stop offset="0.976" stop-color="#ac897a"/><stop offset="1" stop-color="#a98678"/></linearGradient>
<linearGradient id="g401" gradientUnits="userSpaceOnUse" x1="657.5" x2="951.5"><stop offset="0" stop-color="#bea392"/><stop offset="0.146" stop-color="#c4ad9d"/><stop offset="0.272" stop-color="#c9bdb4"/><stop offset="0.391" stop-color="#cdcdca"/><stop offset="0.463" stop-color="#cfd2d1"/><stop offset="0.517" stop-color="#ced0cf"/><stop offset="0.602" stop-color="#cbc6c0"/><stop offset="0.789" stop-color="#c1a592"/><stop offset="0.905" stop-color="#b59481"/><stop offset="0.98" stop-color="#aa8779"/><stop offset="1" stop-color="#a98578"/></linearGradient>
<linearGradient id="g402" gradientUnits="userSpaceOnUse" x1="657.5" x2="951.5"><stop offset="0" stop-color="#bea391"/><stop offset="0.146" stop-color="#c4ad9d"/><stop offset="0.262" stop-color="#c9bbb2"/><stop offset="0.398" stop-color="#cdcecb"/><stop offset="0.466" stop-color="#cfd2d1"/><stop offset="0.527" stop-color="#cecfce"/><stop offset="0.612" stop-color="#cbc4be"/><stop offset="0.779" stop-color="#c1a794"/><stop offset="0.874" stop-color="#b99884"/><stop offset="0.969" stop-color="#ac897a"/><stop offset="0.997" stop-color="#a88577"/><stop offset="1" stop-color="#a88577"/></linearGradient>
<linearGradient id="g403" gradientUnits="userSpaceOnUse" x1="656.5" x2="952.5"><stop offset="0" stop-color="#bea290"/><stop offset="0.142" stop-color="#c4ac9c"/><stop offset="0.25" stop-color="#c8b9af"/><stop offset="0.395" stop-color="#cdcdcb"/><stop offset="0.47" stop-color="#cfd2d1"/><stop offset="0.527" stop-color="#cecfce"/><stop offset="0.608" stop-color="#cbc5be"/><stop offset="0.791" stop-color="#c0a491"/><stop offset="0.912" stop-color="#b4927f"/><stop offset="0.973" stop-color="#aa8778"/><stop offset="1" stop-color="#a88476"/></linearGradient>
<linearGradient id="g404" gradientUnits="userSpaceOnUse" x1="656.5" x2="952.5"><stop offset="0" stop-color="#bea290"/><stop offset="0.145" stop-color="#c4ac9c"/><stop offset="0.274" stop-color="#c9bdb4"/><stop offset="0.399" stop-color="#cdcecb"/><stop offset="0.47" stop-color="#cfd2d1"/><stop offset="0.527" stop-color="#ced0ce"/><stop offset="0.618" stop-color="#cac3bc"/><stop offset="0.791" stop-color="#c0a491"/><stop offset="0.889" stop-color="#b79581"/><stop offset="0.973" stop-color="#aa8778"/><stop offset="1" stop-color="#a78376"/></linearGradient>
<linearGradient id="g405" gradientUnits="userSpaceOnUse" x1="655.5" x2="953.5"><stop offset="0" stop-color="#bda18f"/><stop offset="0.141" stop-color="#c4ab9b"/><stop offset="0.242" stop-color="#c7b8ad"/><stop offset="0.396" stop-color="#cdcdcb"/><stop offset="0.47" stop-color="#ced2d1"/><stop offset="0.527" stop-color="#ced0ce"/><stop offset="0.617" stop-color="#cac3bc"/><stop offset="0.779" stop-color="#c1a693"/><stop offset="0.883" stop-color="#b79581"/><stop offset="0.963" stop-color="#ab8879"/><stop offset="0.993" stop-color="#a78275"/><stop offset="1" stop-color="#a78275"/></linearGradient>
<linearGradient id="g406" gradientUnits="userSpaceOnUse" x1="655.5" x2="953.5"><stop offset="0" stop-color="#bda18f"/><stop offset="0.144" stop-color="#c4ac9b"/><stop offset="0.252" stop-color="#c8b9af"/><stop offset="0.393" stop-color="#cdcdca"/><stop offset="0.453" stop-color="#ced2d0"/><stop offset="0.507" stop-color="#ced1d0"/><stop offset="0.577" stop-color="#cccac5"/><stop offset="0.698" stop-color="#c6b4a7"/><stop offset="0.802" stop-color="#bfa28e"/><stop offset="0.909" stop-color="#b3917e"/><stop offset="0.98" stop-color="#a88476"/><stop offset="1" stop-color="#a68274"/></linearGradient>
<linearGradient id="g407" gradientUnits="userSpaceOnUse" x1="654.5" x2="953.5"><stop offset="0" stop-color="#bda08e"/><stop offset="0.14" stop-color="#c3ab9a"/><stop offset="0.261" stop-color="#c8bab0"/><stop offset="0.388" stop-color="#cdccc9"/><stop offset="0.458" stop-color="#ced2d0"/><stop offset="0.508" stop-color="#ced1d0"/><stop offset="0.579" stop-color="#cccac5"/><stop offset="0.699" stop-color="#c6b4a7"/><stop offset="0.793" stop-color="#c0a490"/><stop offset="0.89" stop-color="#b69480"/><stop offset="0.973" stop-color="#a98576"/><stop offset="1" stop-color="#a68174"/></linearGradient>
<linearGradient id="g408" gradientUnits="userSpaceOnUse" x1="654.5" x2="954.5"><stop offset="0" stop-color="#bda08e"/><stop offset="0.133" stop-color="#c3aa99"/><stop offset="0.237" stop-color="#c7b7ab"/><stop offset="0.38" stop-color="#cdccc8"/><stop offset="0.453" stop-color="#ced2d0"/><stop offset="0.503" stop-color="#ced1d0"/><stop offset="0.577" stop-color="#cccac5"/><stop offset="0.703" stop-color="#c6b3a5"/><stop offset="0.813" stop-color="#be9f8b"/><stop offset="0.917" stop-color="#b28f7c"/><stop offset="0.993" stop-color="#a58073"/><stop offset="1" stop-color="#a58073"/></linearGradient>
<linearGradient id="g409" gradientUnits="userSpaceOnUse" x1="653.5" x2="954.5"><stop offset="0" stop-color="#bc9f8d"/><stop offset="0.146" stop-color="#c3ab9a"/><stop offset="0.262" stop-color="#c8bab0"/><stop offset="0.395" stop-color="#cdcdca"/><stop offset="0.462" stop-color="#ced2d0"/><stop offset="0.515" stop-color="#ced1cf"/><stop offset="0.591" stop-color="#cbc8c2"/><stop offset="0.777" stop-color="#c1a693"/><stop offset="0.874" stop-color="#b79581"/><stop offset="0.963" stop-color="#aa8676"/><stop offset="0.993" stop-color="#a58073"/><stop offset="1" stop-color="#a58073"/></linearGradient>
<linearGradient id="g410" gradientUnits="userSpaceOnUse" x1="653.5" x2="955.5"><stop offset="0" stop-color="#bc9f8c"/><stop offset="0.156" stop-color="#c4ac9b"/><stop offset="0.275" stop-color="#c9bcb3"/><stop offset="0.401" stop-color="#cdcecb"/><stop offset="0.47" stop-color="#ced2d0"/><stop offset="0.523" stop-color="#ced0ce"/><stop offset="0.606" stop-color="#cbc5be"/><stop offset="0.781" stop-color="#c0a491"/><stop offset="0.884" stop-color="#b5937f"/><stop offset="0.967" stop-color="#a98475"/><stop offset="0.993" stop-color="#a47f72"/><stop offset="1" stop-color="#a47f72"/></linearGradient>
<linearGradient id="g411" gradientUnits="userSpaceOnUse" x1="653.5" x2="955.5"><stop offset="0" stop-color="#bc9e8c"/><stop offset="0.142" stop-color="#c3aa99"/><stop offset="0.258" stop-color="#c8baaf"/><stop offset="0.394" stop-color="#cdcdca"/><stop offset="0.467" stop-color="#ced2d0"/><stop offset="0.52" stop-color="#ced0ce"/><stop offset="0.593" stop-color="#cbc7c1"/><stop offset="0.781" stop-color="#c0a491"/><stop offset="0.881" stop-color="#b6937f"/><stop offset="0.97" stop-color="#a88374"/><stop offset="0.997" stop-color="#a47e71"/><stop offset="1" stop-color="#a47e71"/></linearGradient>
<linearGradient id="g412" gradientUnits="userSpaceOnUse" x1="652.5" x2="956.5"><stop offset="0" stop-color="#bc9e8b"/><stop offset="0.155" stop-color="#c3ab9a"/><stop offset="0.289" stop-color="#c9beb5"/><stop offset="0.391" stop-color="#cdcdc9"/><stop offset="0.464" stop-color="#ced2d0"/><stop offset="0.52" stop-color="#ced0ce"/><stop offset="0.592" stop-color="#cbc7c1"/><stop offset="0.77" stop-color="#c1a693"/><stop offset="0.882" stop-color="#b5927e"/><stop offset="0.961" stop-color="#a98475"/><stop offset="0.99" stop-color="#a37e71"/><stop offset="1" stop-color="#a37e71"/></linearGradient>
<linearGradient id="g413" gradientUnits="userSpaceOnUse" x1="652.5" x2="956.5"><stop offset="0" stop-color="#bb9d8b"/><stop offset="0.141" stop-color="#c3a998"/><stop offset="0.257" stop-color="#c8b9ae"/><stop offset="0.391" stop-color="#cdcdc9"/><stop offset="0.467" stop-color="#ced2d0"/><stop offset="0.526" stop-color="#cdd0cd"/><stop offset="0.609" stop-color="#cac4bd"/><stop offset="0.773" stop-color="#c0a592"/><stop offset="0.875" stop-color="#b6937f"/><stop offset="0.964" stop-color="#a88374"/><stop offset="0.993" stop-color="#a37d70"/><stop offset="1" stop-color="#a37d70"/></linearGradient>
<linearGradient id="g414" gradientUnits="userSpaceOnUse" x1="651.5" x2="956.5"><stop offset="0" stop-color="#bb9d8a"/><stop offset="0.154" stop-color="#c3aa99"/><stop offset="0.292" stop-color="#c9beb5"/><stop offset="0.407" stop-color="#cdcecb"/><stop offset="0.485" stop-color="#ced2d0"/><stop offset="0.548" stop-color="#cdcdca"/><stop offset="0.649" stop-color="#c8bdb3"/><stop offset="0.761" stop-color="#c1a895"/><stop offset="0.875" stop-color="#b6937f"/><stop offset="0.964" stop-color="#a88374"/><stop offset="0.997" stop-color="#a27c70"/><stop offset="1" stop-color="#a27c70"/></linearGradient>
<linearGradient id="g415" gradientUnits="userSpaceOnUse" x1="651.5" x2="957.5"><stop offset="0" stop-color="#bb9d8a"/><stop offset="0.141" stop-color="#c2a997"/><stop offset="0.252" stop-color="#c7b8ac"/><stop offset="0.382" stop-color="#cccbc7"/><stop offset="0.451" stop-color="#ced1cf"/><stop offset="0.51" stop-color="#ced1ce"/><stop offset="0.575" stop-color="#ccc9c4"/><stop offset="0.673" stop-color="#c7b8ab"/><stop offset="0.784" stop-color="#bfa38f"/><stop offset="0.895" stop-color="#b38f7b"/><stop offset="0.974" stop-color="#a57f71"/><stop offset="1" stop-color="#a27c6f"/></linearGradient>
<linearGradient id="g416" gradientUnits="userSpaceOnUse" x1="651.5" x2="957.5"><stop offset="0" stop-color="#bb9c89"/><stop offset="0.15" stop-color="#c3aa98"/><stop offset="0.268" stop-color="#c8baaf"/><stop offset="0.382" stop-color="#cccbc7"/><stop offset="0.451" stop-color="#ced1cf"/><stop offset="0.51" stop-color="#cdd1ce"/><stop offset="0.585" stop-color="#cbc8c2"/><stop offset="0.775" stop-color="#c0a491"/><stop offset="0.889" stop-color="#b3907c"/><stop offset="0.964" stop-color="#a78173"/><stop offset="0.993" stop-color="#a17b6f"/><stop offset="1" stop-color="#a17b6f"/></linearGradient>
<linearGradient id="g417" gradientUnits="userSpaceOnUse" x1="650.5" x2="958.5"><stop offset="0" stop-color="#ba9c88"/><stop offset="0.146" stop-color="#c2a997"/><stop offset="0.269" stop-color="#c8baaf"/><stop offset="0.38" stop-color="#cccbc6"/><stop offset="0.448" stop-color="#cdd1ce"/><stop offset="0.506" stop-color="#cdd1ce"/><stop offset="0.578" stop-color="#cbc9c3"/><stop offset="0.682" stop-color="#c6b6a8"/><stop offset="0.786" stop-color="#bfa28e"/><stop offset="0.896" stop-color="#b28e7a"/><stop offset="0.974" stop-color="#a47e70"/><stop offset="0.994" stop-color="#a17a6e"/><stop offset="1" stop-color="#a17a6e"/></linearGradient>
<linearGradient id="g418" gradientUnits="userSpaceOnUse" x1="650.5" x2="958.5"><stop offset="0" stop-color="#ba9b88"/><stop offset="0.149" stop-color="#c2a997"/><stop offset="0.279" stop-color="#c8bbb1"/><stop offset="0.393" stop-color="#ccccc8"/><stop offset="0.458" stop-color="#cdd1ce"/><stop offset="0.506" stop-color="#cdd1ce"/><stop offset="0.581" stop-color="#cbc8c2"/><stop offset="0.688" stop-color="#c6b4a6"/><stop offset="0.799" stop-color="#bd9f8b"/><stop offset="0.903" stop-color="#b18d79"/><stop offset="0.981" stop-color="#a27c6f"/><stop offset="1" stop-color="#a07a6e"/></linearGradient>
<linearGradient id="g419" gradientUnits="userSpaceOnUse" x1="650.5" x2="958.5"><stop offset="0" stop-color="#ba9b87"/><stop offset="0.149" stop-color="#c2a997"/><stop offset="0.279" stop-color="#c8bbb1"/><stop offset="0.399" stop-color="#cccdc9"/><stop offset="0.468" stop-color="#cdd1ce"/><stop offset="0.523" stop-color="#cdcfcc"/><stop offset="0.594" stop-color="#cac6bf"/><stop offset="0.763" stop-color="#c1a693"/><stop offset="0.867" stop-color="#b6937e"/><stop offset="0.958" stop-color="#a78172"/><stop offset="0.994" stop-color="#a0796d"/><stop offset="1" stop-color="#a0796d"/></linearGradient>
<linearGradient id="g420" gradientUnits="userSpaceOnUse" x1="649.5" x2="959.5"><stop offset="0" stop-color="#ba9a87"/><stop offset="0.148" stop-color="#c2a896"/><stop offset="0.277" stop-color="#c8bbb0"/><stop offset="0.39" stop-color="#ccccc7"/><stop offset="0.465" stop-color="#cdd1ce"/><stop offset="0.519" stop-color="#cdcfcc"/><stop offset="0.587" stop-color="#cbc7c0"/><stop offset="0.703" stop-color="#c5b1a1"/><stop offset="0.829" stop-color="#ba9984"/><stop offset="0.935" stop-color="#ab8574"/><stop offset="0.994" stop-color="#9f786c"/><stop offset="1" stop-color="#9f786c"/></linearGradient>
<linearGradient id="g421" gradientUnits="userSpaceOnUse" x1="649.5" x2="959.5"><stop offset="0" stop-color="#ba9a86"/><stop offset="0.148" stop-color="#c2a896"/><stop offset="0.271" stop-color="#c7b9ae"/><stop offset="0.381" stop-color="#cccac5"/><stop offset="0.448" stop-color="#cdd0cd"/><stop offset="0.506" stop-color="#cdd0cd"/><stop offset="0.577" stop-color="#cbc8c2"/><stop offset="0.681" stop-color="#c6b5a7"/><stop offset="0.803" stop-color="#bd9e89"/><stop offset="0.91" stop-color="#af8a77"/><stop offset="0.994" stop-color="#9f786c"/><stop offset="1" stop-color="#9f786c"/></linearGradient>
<linearGradient id="g422" gradientUnits="userSpaceOnUse" x1="649.5" x2="959.5"><stop offset="0" stop-color="#b99986"/><stop offset="0.145" stop-color="#c2a795"/><stop offset="0.271" stop-color="#c7b9ae"/><stop offset="0.394" stop-color="#ccccc7"/><stop offset="0.465" stop-color="#cdd1cd"/><stop offset="0.523" stop-color="#cdcfcb"/><stop offset="0.594" stop-color="#cac6be"/><stop offset="0.768" stop-color="#c0a491"/><stop offset="0.884" stop-color="#b38e7a"/><stop offset="0.971" stop-color="#a37c6e"/><stop offset="0.997" stop-color="#9e776b"/><stop offset="1" stop-color="#9e776b"/></linearGradient>
<linearGradient id="g423" gradientUnits="userSpaceOnUse" x1="648.5" x2="960.5"><stop offset="0" stop-color="#b99985"/><stop offset="0.147" stop-color="#c2a795"/><stop offset="0.266" stop-color="#c7b8ac"/><stop offset="0.385" stop-color="#cccac5"/><stop offset="0.452" stop-color="#cdd0cc"/><stop offset="0.51" stop-color="#cdd0cc"/><stop offset="0.583" stop-color="#cbc7c0"/><stop offset="0.772" stop-color="#bfa38f"/><stop offset="0.888" stop-color="#b28d79"/><stop offset="0.974" stop-color="#a17a6d"/><stop offset="0.994" stop-color="#9e766b"/><stop offset="1" stop-color="#9e766b"/></linearGradient>
<linearGradient id="g424" gradientUnits="userSpaceOnUse" x1="648.5" x2="960.5"><stop offset="0" stop-color="#b99885"/><stop offset="0.144" stop-color="#c2a794"/><stop offset="0.266" stop-color="#c7b8ac"/><stop offset="0.381" stop-color="#cbcac4"/><stop offset="0.452" stop-color="#cdd0cc"/><stop offset="0.506" stop-color="#cdcfcc"/><stop offset="0.564" stop-color="#cbcac4"/><stop offset="0.667" stop-color="#c6b7aa"/><stop offset="0.776" stop-color="#bfa28e"/><stop offset="0.894" stop-color="#b18c78"/><stop offset="0.994" stop-color="#9e766a"/><stop offset="1" stop-color="#9e766a"/></linearGradient>
<linearGradient id="g425" gradientUnits="userSpaceOnUse" x1="648.5" x2="960.5"><stop offset="0" stop-color="#b89884"/><stop offset="0.144" stop-color="#c1a694"/><stop offset="0.26" stop-color="#c7b7aa"/><stop offset="0.388" stop-color="#cbcac5"/><stop offset="0.462" stop-color="#cdd0cc"/><stop offset="0.522" stop-color="#ccceca"/><stop offset="0.593" stop-color="#cac5bd"/><stop offset="0.763" stop-color="#c0a491"/><stop offset="0.878" stop-color="#b38e7a"/><stop offset="0.955" stop-color="#a57e6f"/><stop offset="0.997" stop-color="#9d756a"/><stop offset="1" stop-color="#9d756a"/></linearGradient>
<linearGradient id="g426" gradientUnits="userSpaceOnUse" x1="647.5" x2="961.5"><stop offset="0" stop-color="#b89784"/><stop offset="0.143" stop-color="#c1a693"/><stop offset="0.271" stop-color="#c7b8ac"/><stop offset="0.392" stop-color="#cbcac5"/><stop offset="0.455" stop-color="#cdd0cb"/><stop offset="0.51" stop-color="#cccfcb"/><stop offset="0.583" stop-color="#cac6bf"/><stop offset="0.748" stop-color="#c1a694"/><stop offset="0.857" stop-color="#b5927d"/><stop offset="0.943" stop-color="#a78070"/><stop offset="0.99" stop-color="#9d7569"/><stop offset="1" stop-color="#9d7569"/></linearGradient>
<linearGradient id="g427" gradientUnits="userSpaceOnUse" x1="647.5" x2="961.5"><stop offset="0" stop-color="#b89783"/><stop offset="0.159" stop-color="#c2a795"/><stop offset="0.312" stop-color="#c9bfb5"/><stop offset="0.408" stop-color="#ccccc7"/><stop offset="0.471" stop-color="#cdd0cb"/><stop offset="0.525" stop-color="#cccdc9"/><stop offset="0.596" stop-color="#cac4bc"/><stop offset="0.758" stop-color="#c0a491"/><stop offset="0.885" stop-color="#b18c78"/><stop offset="0.968" stop-color="#a1796c"/><stop offset="0.994" stop-color="#9c7469"/><stop offset="1" stop-color="#9c7469"/></linearGradient>
<linearGradient id="g428" gradientUnits="userSpaceOnUse" x1="647.5" x2="961.5"><stop offset="0" stop-color="#b89683"/><stop offset="0.15" stop-color="#c1a694"/><stop offset="0.252" stop-color="#c6b4a7"/><stop offset="0.379" stop-color="#cbc8c2"/><stop offset="0.449" stop-color="#cccfca"/><stop offset="0.51" stop-color="#ccceca"/><stop offset="0.576" stop-color="#cac7c0"/><stop offset="0.748" stop-color="#c1a693"/><stop offset="0.873" stop-color="#b38e7a"/><stop offset="0.955" stop-color="#a47c6e"/><stop offset="0.994" stop-color="#9c7368"/><stop offset="1" stop-color="#9c7368"/></linearGradient>
<linearGradient id="g429" gradientUnits="userSpaceOnUse" x1="646.5" x2="961.5"><stop offset="0" stop-color="#b79682"/><stop offset="0.083" stop-color="#be9f8c"/><stop offset="0.092" stop-color="#c0a28f"/><stop offset="0.124" stop-color="#c0a38f"/><stop offset="0.232" stop-color="#c5b1a2"/><stop offset="0.378" stop-color="#cbc8c1"/><stop offset="0.454" stop-color="#cccfca"/><stop offset="0.517" stop-color="#cccec9"/><stop offset="0.587" stop-color="#cac5bd"/><stop offset="0.765" stop-color="#bfa38f"/><stop offset="0.892" stop-color="#b08a77"/><stop offset="0.981" stop-color="#9e7569"/><stop offset="1" stop-color="#9b7368"/></linearGradient>
<linearGradient id="g430" gradientUnits="userSpaceOnUse" x1="646.5" x2="962.5"><stop offset="0" stop-color="#b79682"/><stop offset="0.073" stop-color="#bd9e8a"/><stop offset="0.085" stop-color="#c8af9e"/><stop offset="0.092" stop-color="#c9b1a0"/><stop offset="0.098" stop-color="#c6ac9b"/><stop offset="0.104" stop-color="#bfa28f"/><stop offset="0.123" stop-color="#c0a28f"/><stop offset="0.228" stop-color="#c5b0a1"/><stop offset="0.389" stop-color="#cbc9c3"/><stop offset="0.465" stop-color="#cccfca"/><stop offset="0.522" stop-color="#cccdc8"/><stop offset="0.592" stop-color="#cac4bb"/><stop offset="0.766" stop-color="#bfa28e"/><stop offset="0.905" stop-color="#ad8774"/><stop offset="0.994" stop-color="#9b7267"/><stop offset="1" stop-color="#9b7267"/></linearGradient>
<linearGradient id="g431" gradientUnits="userSpaceOnUse" x1="646.5" x2="962.5"><stop offset="0" stop-color="#b79581"/><stop offset="0.066" stop-color="#bc9c89"/><stop offset="0.073" stop-color="#c4a896"/><stop offset="0.082" stop-color="#ceb9a9"/><stop offset="0.089" stop-color="#d2beaf"/><stop offset="0.095" stop-color="#d1bdaf"/><stop offset="0.101" stop-color="#cdb6a6"/><stop offset="0.108" stop-color="#c3a795"/><stop offset="0.111" stop-color="#c0a28f"/><stop offset="0.142" stop-color="#c1a491"/><stop offset="0.263" stop-color="#c6b5a8"/><stop offset="0.392" stop-color="#cbc9c3"/><stop offset="0.462" stop-color="#cccec9"/><stop offset="0.525" stop-color="#ccccc7"/><stop offset="0.595" stop-color="#c9c3ba"/><stop offset="0.753" stop-color="#c0a491"/><stop offset="0.883" stop-color="#b08b77"/><stop offset="0.953" stop-color="#a37b6d"/><stop offset="0.994" stop-color="#9a7267"/><stop offset="1" stop-color="#9a7267"/></linearGradient>
<linearGradient id="g432" gradientUnits="userSpaceOnUse" x1="646.5" x2="962.5"><stop offset="0" stop-color="#b79581"/><stop offset="0.063" stop-color="#bc9c88"/><stop offset="0.076" stop-color="#cfb9aa"/><stop offset="0.082" stop-color="#d5c3b5"/><stop offset="0.089" stop-color="#d8c8bb"/><stop offset="0.095" stop-color="#d9c9bc"/><stop offset="0.101" stop-color="#d5c3b6"/><stop offset="0.108" stop-color="#ccb5a5"/><stop offset="0.111" stop-color="#c5aa98"/><stop offset="0.114" stop-color="#c0a28f"/><stop offset="0.142" stop-color="#c0a491"/><stop offset="0.25" stop-color="#c5b3a5"/><stop offset="0.389" stop-color="#cbc8c2"/><stop offset="0.465" stop-color="#cccec9"/><stop offset="0.528" stop-color="#cbccc6"/><stop offset="0.601" stop-color="#c9c2b8"/><stop offset="0.747" stop-color="#c0a592"/><stop offset="0.873" stop-color="#b28d79"/><stop offset="0.956" stop-color="#a27a6c"/><stop offset="0.997" stop-color="#9a7166"/><stop offset="1" stop-color="#9a7166"/></linearGradient>
<linearGradient id="g433" gradientUnits="userSpaceOnUse" x1="645.5" x2="962.5"><stop offset="0" stop-color="#b69480"/><stop offset="0.06" stop-color="#bb9b86"/><stop offset="0.063" stop-color="#bc9d89"/><stop offset="0.076" stop-color="#d1bcac"/><stop offset="0.085" stop-color="#d9c9bd"/><stop offset="0.095" stop-color="#ddd0c5"/><stop offset="0.101" stop-color="#ddcfc5"/><stop offset="0.107" stop-color="#d8c8bc"/><stop offset="0.114" stop-color="#cdb7a8"/><stop offset="0.117" stop-color="#c5ab99"/><stop offset="0.12" stop-color="#c0a28f"/><stop offset="0.148" stop-color="#c0a491"/><stop offset="0.268" stop-color="#c6b5a8"/><stop offset="0.394" stop-color="#cbc9c2"/><stop offset="0.464" stop-color="#cccec8"/><stop offset="0.527" stop-color="#cbccc6"/><stop offset="0.596" stop-color="#c9c2b9"/><stop offset="0.763" stop-color="#bfa28e"/><stop offset="0.893" stop-color="#af8975"/><stop offset="0.994" stop-color="#9a7066"/><stop offset="1" stop-color="#9a7066"/></linearGradient>
<linearGradient id="g434" gradientUnits="userSpaceOnUse" x1="645.5" x2="963.5"><stop offset="0" stop-color="#b69480"/><stop offset="0.057" stop-color="#ba9a86"/><stop offset="0.06" stop-color="#bc9c88"/><stop offset="0.069" stop-color="#ccb5a4"/><stop offset="0.079" stop-color="#d7c5b8"/><stop offset="0.091" stop-color="#dfd2c8"/><stop offset="0.097" stop-color="#e1d5cc"/><stop offset="0.104" stop-color="#e0d4ca"/><stop offset="0.11" stop-color="#dacbbf"/><stop offset="0.113" stop-color="#d5c3b5"/><stop offset="0.119" stop-color="#c4a896"/><stop offset="0.123" stop-color="#c0a28f"/><stop offset="0.142" stop-color="#c0a390"/><stop offset="0.261" stop-color="#c6b4a6"/><stop offset="0.39" stop-color="#cac8c1"/><stop offset="0.465" stop-color="#cccdc8"/><stop offset="0.528" stop-color="#cbcbc5"/><stop offset="0.61" stop-color="#c8bfb5"/><stop offset="0.752" stop-color="#bfa490"/><stop offset="0.868" stop-color="#b28d79"/><stop offset="0.947" stop-color="#a37b6c"/><stop offset="0.994" stop-color="#997065"/><stop offset="1" stop-color="#997065"/></linearGradient>
<linearGradient id="g435" gradientUnits="userSpaceOnUse" x1="645.5" x2="963.5"><stop offset="0" stop-color="#b6937f"/><stop offset="0.053" stop-color="#ba9985"/><stop offset="0.057" stop-color="#bb9b87"/><stop offset="0.069" stop-color="#cfb9a9"/><stop offset="0.082" stop-color="#dacbbf"/><stop offset="0.094" stop-color="#e2d7ce"/><stop offset="0.101" stop-color="#e3d9d1"/><stop offset="0.107" stop-color="#e1d7cd"/><stop offset="0.11" stop-color="#dfd3c9"/><stop offset="0.113" stop-color="#dbccc0"/><stop offset="0.116" stop-color="#d4c1b4"/><stop offset="0.123" stop-color="#c0a390"/><stop offset="0.129" stop-color="#bfa28e"/><stop offset="0.239" stop-color="#c5b0a1"/><stop offset="0.393" stop-color="#cac8c1"/><stop offset="0.469" stop-color="#cccdc7"/><stop offset="0.525" stop-color="#cbcbc5"/><stop offset="0.594" stop-color="#c9c2b8"/><stop offset="0.755" stop-color="#bfa38f"/><stop offset="0.887" stop-color="#af8975"/><stop offset="0.994" stop-color="#996f65"/><stop offset="1" stop-color="#996f65"/></linearGradient>
<linearGradient id="g436" gradientUnits="userSpaceOnUse" x1="645.5" x2="963.5"><stop offset="0" stop-color="#b6937f"/><stop offset="0.053" stop-color="#ba9985"/><stop offset="0.063" stop-color="#cab09e"/><stop offset="0.079" stop-color="#d8c7ba"/><stop offset="0.094" stop-color="#e3d9d1"/><stop offset="0.101" stop-color="#e5dcd5"/><stop offset="0.107" stop-color="#e4dbd3"/><stop offset="0.113" stop-color="#dfd3c9"/><stop offset="0.116" stop-color="#dacabe"/><stop offset="0.119" stop-color="#d1bdaf"/><stop offset="0.123" stop-color="#c7ad9c"/><stop offset="0.126" stop-color="#c0a28f"/><stop offset="0.154" stop-color="#c0a491"/><stop offset="0.274" stop-color="#c6b5a8"/><stop offset="0.387" stop-color="#cac7bf"/><stop offset="0.453" stop-color="#cbccc6"/><stop offset="0.506" stop-color="#cbccc6"/><stop offset="0.585" stop-color="#c9c3ba"/><stop offset="0.755" stop-color="#bfa28f"/><stop offset="0.881" stop-color="#b08a76"/><stop offset="0.978" stop-color="#9b7267"/><stop offset="0.997" stop-color="#986f64"/><stop offset="1" stop-color="#986f64"/></linearGradient>
<linearGradient id="g437" gradientUnits="userSpaceOnUse" x1="644.5" x2="963.5"><stop offset="0" stop-color="#b5927e"/><stop offset="0.053" stop-color="#b99884"/><stop offset="0.06" stop-color="#c2a591"/><stop offset="0.066" stop-color="#cbb2a0"/><stop offset="0.091" stop-color="#ddcfc5"/><stop offset="0.1" stop-color="#e5dcd5"/><stop offset="0.107" stop-color="#e7dfd8"/><stop offset="0.113" stop-color="#e5dcd4"/><stop offset="0.116" stop-color="#e2d7cf"/><stop offset="0.119" stop-color="#ded1c6"/><stop offset="0.122" stop-color="#d7c6b9"/><stop offset="0.129" stop-color="#c1a492"/><stop offset="0.132" stop-color="#bfa28e"/><stop offset="0.226" stop-color="#c4ad9d"/><stop offset="0.386" stop-color="#cac6be"/><stop offset="0.451" stop-color="#cbccc5"/><stop offset="0.514" stop-color="#cbcbc5"/><stop offset="0.583" stop-color="#c9c3ba"/><stop offset="0.743" stop-color="#c0a592"/><stop offset="0.862" stop-color="#b28d79"/><stop offset="0.944" stop-color="#a37b6c"/><stop offset="0.994" stop-color="#986e64"/><stop offset="1" stop-color="#986e64"/></linearGradient>
<linearGradient id="g438" gradientUnits="userSpaceOnUse" x1="644.5" x2="964.5"><stop offset="0" stop-color="#b5927e"/><stop offset="0.05" stop-color="#b99783"/><stop offset="0.053" stop-color="#bb9a86"/><stop offset="0.059" stop-color="#c5a995"/><stop offset="0.072" stop-color="#ceb7a7"/><stop offset="0.084" stop-color="#d4c1b3"/><stop offset="0.103" stop-color="#e7dfd8"/><stop offset="0.109" stop-color="#e8e1db"/><stop offset="0.116" stop-color="#e4dbd3"/><stop offset="0.119" stop-color="#e1d6cc"/><stop offset="0.122" stop-color="#dbcdc1"/><stop offset="0.125" stop-color="#d2bfb0"/><stop offset="0.128" stop-color="#c6ad9b"/><stop offset="0.131" stop-color="#bfa28e"/><stop offset="0.206" stop-color="#c3aa99"/><stop offset="0.388" stop-color="#cac6be"/><stop offset="0.459" stop-color="#cbccc5"/><stop offset="0.525" stop-color="#cbcac3"/><stop offset="0.6" stop-color="#c8bfb5"/><stop offset="0.75" stop-color="#bfa38f"/><stop offset="0.881" stop-color="#af8975"/><stop offset="0.981" stop-color="#997065"/><stop offset="1" stop-color="#976e64"/></linearGradient>
<linearGradient id="g439" gradientUnits="userSpaceOnUse" x1="644.5" x2="964.5"><stop offset="0" stop-color="#b5927e"/><stop offset="0.05" stop-color="#b99783"/><stop offset="0.059" stop-color="#c6aa96"/><stop offset="0.072" stop-color="#ccb3a2"/><stop offset="0.078" stop-color="#cdb6a5"/><stop offset="0.094" stop-color="#dacabe"/><stop offset="0.106" stop-color="#e9e1db"/><stop offset="0.109" stop-color="#eae3dd"/><stop offset="0.116" stop-color="#e6ded7"/><stop offset="0.119" stop-color="#e3d9d1"/><stop offset="0.122" stop-color="#ded2c7"/><stop offset="0.125" stop-color="#d7c5b8"/><stop offset="0.131" stop-color="#c0a28f"/><stop offset="0.156" stop-color="#c0a490"/><stop offset="0.272" stop-color="#c6b4a6"/><stop offset="0.397" stop-color="#cac7bf"/><stop offset="0.475" stop-color="#cbcbc5"/><stop offset="0.541" stop-color="#cac8c0"/><stop offset="0.609" stop-color="#c8bdb2"/><stop offset="0.766" stop-color="#bd9f8b"/><stop offset="0.884" stop-color="#ae8874"/><stop offset="0.984" stop-color="#986e64"/><stop offset="1" stop-color="#976d63"/></linearGradient>
<linearGradient id="g440" gradientUnits="userSpaceOnUse" x1="644.5" x2="964.5"><stop offset="0" stop-color="#b5917d"/><stop offset="0.047" stop-color="#b89682"/><stop offset="0.05" stop-color="#ba9984"/><stop offset="0.056" stop-color="#c3a691"/><stop offset="0.066" stop-color="#c7ac99"/><stop offset="0.072" stop-color="#c8ae9a"/><stop offset="0.091" stop-color="#d3bfb0"/><stop offset="0.097" stop-color="#d9c9bd"/><stop offset="0.106" stop-color="#e7dfd8"/><stop offset="0.109" stop-color="#eae4de"/><stop offset="0.113" stop-color="#eae4de"/><stop offset="0.119" stop-color="#e5dcd4"/><stop offset="0.122" stop-color="#e1d5cc"/><stop offset="0.125" stop-color="#dacbbf"/><stop offset="0.128" stop-color="#d0bbac"/><stop offset="0.131" stop-color="#c3a794"/><stop offset="0.134" stop-color="#bfa18e"/><stop offset="0.241" stop-color="#c4af9f"/><stop offset="0.384" stop-color="#c9c5bc"/><stop offset="0.45" stop-color="#cbcac3"/><stop offset="0.512" stop-color="#cbcac3"/><stop offset="0.591" stop-color="#c8c0b6"/><stop offset="0.747" stop-color="#bfa38f"/><stop offset="0.878" stop-color="#af8975"/><stop offset="0.963" stop-color="#9d7468"/><stop offset="0.994" stop-color="#976d63"/><stop offset="1" stop-color="#976d63"/></linearGradient>
<linearGradient id="g441" gradientUnits="userSpaceOnUse" x1="644.5" x2="964.5"><stop offset="0" stop-color="#b4917c"/><stop offset="0.047" stop-color="#b89682"/><stop offset="0.053" stop-color="#c1a28c"/><stop offset="0.059" stop-color="#c4a793"/><stop offset="0.072" stop-color="#c6aa96"/><stop offset="0.091" stop-color="#cfb8a7"/><stop offset="0.097" stop-color="#d4c1b2"/><stop offset="0.109" stop-color="#e8e1db"/><stop offset="0.113" stop-color="#ebe5df"/><stop offset="0.116" stop-color="#e9e3dd"/><stop offset="0.122" stop-color="#e2d8cf"/><stop offset="0.125" stop-color="#ddcfc4"/><stop offset="0.128" stop-color="#d3c0b2"/><stop offset="0.131" stop-color="#c6ad9b"/><stop offset="0.134" stop-color="#bfa18e"/><stop offset="0.172" stop-color="#c1a592"/><stop offset="0.316" stop-color="#c7baae"/><stop offset="0.409" stop-color="#cac7bf"/><stop offset="0.463" stop-color="#cbcac3"/><stop offset="0.525" stop-color="#cac8c1"/><stop offset="0.597" stop-color="#c8bfb4"/><stop offset="0.756" stop-color="#bea18d"/><stop offset="0.887" stop-color="#ad8673"/><stop offset="0.981" stop-color="#986e64"/><stop offset="1" stop-color="#966c62"/></linearGradient>
<linearGradient id="g442" gradientUnits="userSpaceOnUse" x1="643.5" x2="964.5"><stop offset="0" stop-color="#b4907c"/><stop offset="0.047" stop-color="#b89581"/><stop offset="0.05" stop-color="#b99783"/><stop offset="0.056" stop-color="#c1a28c"/><stop offset="0.065" stop-color="#c3a691"/><stop offset="0.072" stop-color="#c3a691"/><stop offset="0.093" stop-color="#cbb29f"/><stop offset="0.1" stop-color="#d0b9a9"/><stop offset="0.103" stop-color="#d4c0b1"/><stop offset="0.112" stop-color="#e6ddd6"/><stop offset="0.115" stop-color="#eae4de"/><stop offset="0.118" stop-color="#eae4df"/><stop offset="0.125" stop-color="#e4dad2"/><stop offset="0.128" stop-color="#ded2c7"/><stop offset="0.131" stop-color="#d6c4b7"/><stop offset="0.137" stop-color="#bfa18e"/><stop offset="0.165" stop-color="#c0a490"/><stop offset="0.296" stop-color="#c6b6a9"/><stop offset="0.405" stop-color="#cac6be"/><stop offset="0.445" stop-color="#cccbc3"/><stop offset="0.52" stop-color="#cac8c1"/><stop offset="0.583" stop-color="#c8c1b7"/><stop offset="0.735" stop-color="#c0a491"/><stop offset="0.863" stop-color="#b18b77"/><stop offset="0.944" stop-color="#a1786a"/><stop offset="0.994" stop-color="#956b61"/><stop offset="1" stop-color="#956b61"/></linearGradient>
<linearGradient id="g443" gradientUnits="userSpaceOnUse" x1="643.5" x2="965.5"><stop offset="0" stop-color="#b38f7b"/><stop offset="0.047" stop-color="#b79580"/><stop offset="0.053" stop-color="#bf9e89"/><stop offset="0.065" stop-color="#c2a38e"/><stop offset="0.071" stop-color="#c2a48f"/><stop offset="0.093" stop-color="#c8ad99"/><stop offset="0.099" stop-color="#ccb3a1"/><stop offset="0.102" stop-color="#cfb9a8"/><stop offset="0.109" stop-color="#dbccc0"/><stop offset="0.112" stop-color="#e3d8cf"/><stop offset="0.115" stop-color="#e8e1da"/><stop offset="0.118" stop-color="#eae4df"/><stop offset="0.124" stop-color="#e5dbd4"/><stop offset="0.127" stop-color="#e0d4ca"/><stop offset="0.13" stop-color="#d8c8bb"/><stop offset="0.137" stop-color="#bfa28e"/><stop offset="0.158" stop-color="#c0a28f"/><stop offset="0.273" stop-color="#c5b3a4"/><stop offset="0.41" stop-color="#cbc8bf"/><stop offset="0.438" stop-color="#cfcdc6"/><stop offset="0.488" stop-color="#cac9c2"/><stop offset="0.55" stop-color="#c9c5bc"/><stop offset="0.643" stop-color="#c5b5a7"/><stop offset="0.773" stop-color="#bc9c88"/><stop offset="0.888" stop-color="#ac8572"/><stop offset="0.991" stop-color="#956b61"/><stop offset="1" stop-color="#956b61"/></linearGradient>
<linearGradient id="g444" gradientUnits="userSpaceOnUse" x1="643.5" x2="965.5"><stop offset="0" stop-color="#b38f7b"/><stop offset="0.043" stop-color="#b7947f"/><stop offset="0.047" stop-color="#b79580"/><stop offset="0.053" stop-color="#be9e89"/><stop offset="0.065" stop-color="#c1a28c"/><stop offset="0.093" stop-color="#c6aa95"/><stop offset="0.099" stop-color="#c9ae9b"/><stop offset="0.106" stop-color="#d0baaa"/><stop offset="0.115" stop-color="#e6ddd5"/><stop offset="0.118" stop-color="#eae3dd"/><stop offset="0.121" stop-color="#e9e2dc"/><stop offset="0.127" stop-color="#e0d5cb"/><stop offset="0.13" stop-color="#dacabe"/><stop offset="0.134" stop-color="#ceb9a9"/><stop offset="0.137" stop-color="#c1a491"/><stop offset="0.14" stop-color="#bfa08d"/><stop offset="0.252" stop-color="#c4af9f"/><stop offset="0.398" stop-color="#cac5bc"/><stop offset="0.425" stop-color="#d1cec7"/><stop offset="0.45" stop-color="#d1cfc8"/><stop offset="0.481" stop-color="#cac9c1"/><stop offset="0.547" stop-color="#c9c5bc"/><stop offset="0.637" stop-color="#c6b6a8"/><stop offset="0.767" stop-color="#bc9d89"/><stop offset="0.882" stop-color="#ad8673"/><stop offset="0.972" stop-color="#986e64"/><stop offset="0.997" stop-color="#946a60"/><stop offset="1" stop-color="#946a60"/></linearGradient>
<linearGradient id="g445" gradientUnits="userSpaceOnUse" x1="643.5" x2="965.5"><stop offset="0" stop-color="#b38e7a"/><stop offset="0.043" stop-color="#b6937f"/><stop offset="0.047" stop-color="#b79580"/><stop offset="0.053" stop-color="#bd9c87"/><stop offset="0.065" stop-color="#c1a18b"/><stop offset="0.096" stop-color="#c6a995"/><stop offset="0.102" stop-color="#c9af9c"/><stop offset="0.106" stop-color="#cdb5a3"/><stop offset="0.109" stop-color="#d3beaf"/><stop offset="0.115" stop-color="#e3d8cf"/><stop offset="0.118" stop-color="#e8e0da"/><stop offset="0.121" stop-color="#e9e2dc"/><stop offset="0.124" stop-color="#e6ddd6"/><stop offset="0.127" stop-color="#e1d6cc"/><stop offset="0.13" stop-color="#dacbbf"/><stop offset="0.134" stop-color="#d0bbac"/><stop offset="0.137" stop-color="#c3a794"/><stop offset="0.14" stop-color="#bea08c"/><stop offset="0.255" stop-color="#c4af9f"/><stop offset="0.391" stop-color="#cac4bb"/><stop offset="0.413" stop-color="#d1cdc5"/><stop offset="0.463" stop-color="#d1cec7"/><stop offset="0.488" stop-color="#cac8c0"/><stop offset="0.547" stop-color="#c9c4bb"/><stop offset="0.63" stop-color="#c6b7a9"/><stop offset="0.78" stop-color="#bb9b86"/><stop offset="0.891" stop-color="#ab8471"/><stop offset="0.994" stop-color="#936960"/><stop offset="1" stop-color="#936960"/></linearGradient>
<linearGradient id="g446" gradientUnits="userSpaceOnUse" x1="643.5" x2="965.5"><stop offset="0" stop-color="#b28e7a"/><stop offset="0.037" stop-color="#b6927e"/><stop offset="0.043" stop-color="#b5927e"/><stop offset="0.05" stop-color="#ba9984"/><stop offset="0.062" stop-color="#c0a08a"/><stop offset="0.099" stop-color="#c6a995"/><stop offset="0.106" stop-color="#cab19e"/><stop offset="0.109" stop-color="#cfb9a8"/><stop offset="0.115" stop-color="#e0d3c9"/><stop offset="0.118" stop-color="#e6ddd6"/><stop offset="0.121" stop-color="#e8e1db"/><stop offset="0.124" stop-color="#e6ddd6"/><stop offset="0.127" stop-color="#e1d6cd"/><stop offset="0.13" stop-color="#dbccc0"/><stop offset="0.134" stop-color="#d1bdae"/><stop offset="0.137" stop-color="#c4a896"/><stop offset="0.14" stop-color="#bea08c"/><stop offset="0.252" stop-color="#c4ae9e"/><stop offset="0.382" stop-color="#c9c2b8"/><stop offset="0.404" stop-color="#d0cbc3"/><stop offset="0.441" stop-color="#cdcac2"/><stop offset="0.469" stop-color="#d1cec7"/><stop offset="0.491" stop-color="#cac8c0"/><stop offset="0.565" stop-color="#c8c1b7"/><stop offset="0.671" stop-color="#c3af9f"/><stop offset="0.786" stop-color="#ba9985"/><stop offset="0.901" stop-color="#a9816f"/><stop offset="0.994" stop-color="#93685f"/><stop offset="1" stop-color="#93685f"/></linearGradient>
<linearGradient id="g447" gradientUnits="userSpaceOnUse" x1="642.5" x2="965.5"><stop offset="0" stop-color="#b28d79"/><stop offset="0.037" stop-color="#b5917d"/><stop offset="0.043" stop-color="#b6927e"/><stop offset="0.046" stop-color="#b4917d"/><stop offset="0.065" stop-color="#bfa08a"/><stop offset="0.102" stop-color="#c5a893"/><stop offset="0.108" stop-color="#c8ae9a"/><stop offset="0.111" stop-color="#cdb5a3"/><stop offset="0.115" stop-color="#d4c0b1"/><stop offset="0.121" stop-color="#e4dad2"/><stop offset="0.124" stop-color="#e7dfd9"/><stop offset="0.127" stop-color="#e6ddd5"/><stop offset="0.133" stop-color="#dbccc0"/><stop offset="0.136" stop-color="#d2bdaf"/><stop offset="0.139" stop-color="#c4a997"/><stop offset="0.142" stop-color="#bea08c"/><stop offset="0.266" stop-color="#c4b0a0"/><stop offset="0.381" stop-color="#c9c1b7"/><stop offset="0.399" stop-color="#d0cac1"/><stop offset="0.43" stop-color="#cac7be"/><stop offset="0.461" stop-color="#cdcac2"/><stop offset="0.477" stop-color="#d0cdc6"/><stop offset="0.502" stop-color="#cac7be"/><stop offset="0.563" stop-color="#c8c1b7"/><stop offset="0.675" stop-color="#c3ae9d"/><stop offset="0.793" stop-color="#b99883"/><stop offset="0.895" stop-color="#aa8270"/><stop offset="0.991" stop-color="#92685e"/><stop offset="1" stop-color="#92685e"/></linearGradient>
<linearGradient id="g448" gradientUnits="userSpaceOnUse" x1="642.5" x2="965.5"><stop offset="0" stop-color="#b18c78"/><stop offset="0.043" stop-color="#b5927d"/><stop offset="0.046" stop-color="#b3907c"/><stop offset="0.056" stop-color="#b89681"/><stop offset="0.062" stop-color="#bf9e88"/><stop offset="0.102" stop-color="#c4a792"/><stop offset="0.108" stop-color="#c7ab97"/><stop offset="0.111" stop-color="#cbb19f"/><stop offset="0.115" stop-color="#d1bcac"/><stop offset="0.121" stop-color="#e2d6cd"/><stop offset="0.124" stop-color="#e6ddd6"/><stop offset="0.127" stop-color="#e5dcd4"/><stop offset="0.133" stop-color="#dbccc0"/><stop offset="0.136" stop-color="#d2bdaf"/><stop offset="0.139" stop-color="#c5aa98"/><stop offset="0.142" stop-color="#bea08c"/><stop offset="0.18" stop-color="#c0a390"/><stop offset="0.334" stop-color="#c7baad"/><stop offset="0.378" stop-color="#c9c1b6"/><stop offset="0.39" stop-color="#cec8be"/><stop offset="0.402" stop-color="#ccc7bd"/><stop offset="0.421" stop-color="#c9c5bb"/><stop offset="0.446" stop-color="#cbc7be"/><stop offset="0.464" stop-color="#cbc8bf"/><stop offset="0.48" stop-color="#d0cdc5"/><stop offset="0.505" stop-color="#cac6bd"/><stop offset="0.563" stop-color="#c8c1b6"/><stop offset="0.678" stop-color="#c3ad9c"/><stop offset="0.808" stop-color="#b79480"/><stop offset="0.901" stop-color="#a8806f"/><stop offset="0.994" stop-color="#92675e"/><stop offset="1" stop-color="#92675e"/></linearGradient>
<linearGradient id="g449" gradientUnits="userSpaceOnUse" x1="642.5" x2="966.5"><stop offset="0" stop-color="#b18c78"/><stop offset="0.037" stop-color="#b4907c"/><stop offset="0.043" stop-color="#b38f7b"/><stop offset="0.052" stop-color="#b3907c"/><stop offset="0.062" stop-color="#be9e88"/><stop offset="0.105" stop-color="#c4a792"/><stop offset="0.108" stop-color="#c6aa95"/><stop offset="0.111" stop-color="#c9af9c"/><stop offset="0.114" stop-color="#cfb8a8"/><stop offset="0.12" stop-color="#e0d3c9"/><stop offset="0.123" stop-color="#e4dad2"/><stop offset="0.127" stop-color="#e4dad2"/><stop offset="0.133" stop-color="#dacbbf"/><stop offset="0.136" stop-color="#d1bdae"/><stop offset="0.139" stop-color="#c5aa98"/><stop offset="0.142" stop-color="#be9f8b"/><stop offset="0.272" stop-color="#c4b0a0"/><stop offset="0.373" stop-color="#c9c0b5"/><stop offset="0.386" stop-color="#cec7bd"/><stop offset="0.407" stop-color="#c9c3b9"/><stop offset="0.438" stop-color="#cfc8be"/><stop offset="0.466" stop-color="#cac7be"/><stop offset="0.485" stop-color="#cfccc3"/><stop offset="0.506" stop-color="#c9c5bc"/><stop offset="0.571" stop-color="#c8bfb4"/><stop offset="0.728" stop-color="#bfa38f"/><stop offset="0.855" stop-color="#b08a76"/><stop offset="0.923" stop-color="#a2796a"/><stop offset="0.994" stop-color="#91665d"/><stop offset="1" stop-color="#91665d"/></linearGradient>
<linearGradient id="g450" gradientUnits="userSpaceOnUse" x1="642.5" x2="966.5"><stop offset="0" stop-color="#b18b77"/><stop offset="0.04" stop-color="#b4907c"/><stop offset="0.046" stop-color="#b08c79"/><stop offset="0.052" stop-color="#b18d7a"/><stop offset="0.059" stop-color="#bb9a84"/><stop offset="0.065" stop-color="#be9d88"/><stop offset="0.105" stop-color="#c4a691"/><stop offset="0.111" stop-color="#c8ad9a"/><stop offset="0.114" stop-color="#cdb6a4"/><stop offset="0.12" stop-color="#ded0c5"/><stop offset="0.123" stop-color="#e3d8cf"/><stop offset="0.127" stop-color="#e3d8cf"/><stop offset="0.13" stop-color="#dfd2c8"/><stop offset="0.133" stop-color="#d9c9bd"/><stop offset="0.136" stop-color="#d1bcac"/><stop offset="0.139" stop-color="#c4a997"/><stop offset="0.142" stop-color="#be9f8b"/><stop offset="0.225" stop-color="#c2a997"/><stop offset="0.367" stop-color="#c8beb2"/><stop offset="0.38" stop-color="#cdc5bb"/><stop offset="0.392" stop-color="#cac3b8"/><stop offset="0.404" stop-color="#cac3b9"/><stop offset="0.429" stop-color="#d2c8bc"/><stop offset="0.454" stop-color="#d0c9bd"/><stop offset="0.472" stop-color="#cac6bd"/><stop offset="0.491" stop-color="#cfcbc2"/><stop offset="0.509" stop-color="#c9c5bb"/><stop offset="0.577" stop-color="#c7beb2"/><stop offset="0.716" stop-color="#c0a592"/><stop offset="0.84" stop-color="#b28d79"/><stop offset="0.91" stop-color="#a57c6c"/><stop offset="0.991" stop-color="#90665d"/><stop offset="1" stop-color="#90665d"/></linearGradient>
<linearGradient id="g451" gradientUnits="userSpaceOnUse" x1="642.5" x2="966.5"><stop offset="0" stop-color="#b08b77"/><stop offset="0.037" stop-color="#b48f7b"/><stop offset="0.04" stop-color="#b4907b"/><stop offset="0.046" stop-color="#ad8976"/><stop offset="0.052" stop-color="#ae8a77"/><stop offset="0.059" stop-color="#bc9b85"/><stop offset="0.105" stop-color="#c4a691"/><stop offset="0.111" stop-color="#c7ac98"/><stop offset="0.114" stop-color="#ccb4a2"/><stop offset="0.12" stop-color="#dccdc1"/><stop offset="0.123" stop-color="#e1d5cb"/><stop offset="0.127" stop-color="#e1d6cd"/><stop offset="0.13" stop-color="#ded0c6"/><stop offset="0.133" stop-color="#d8c8bb"/><stop offset="0.136" stop-color="#cfbaaa"/><stop offset="0.139" stop-color="#c3a895"/><stop offset="0.142" stop-color="#bd9e8a"/><stop offset="0.272" stop-color="#c4af9f"/><stop offset="0.364" stop-color="#c8bdb1"/><stop offset="0.377" stop-color="#cdc4b9"/><stop offset="0.383" stop-color="#ccc3b9"/><stop offset="0.395" stop-color="#c8c1b6"/><stop offset="0.42" stop-color="#d3c8bb"/><stop offset="0.454" stop-color="#d3c9bc"/><stop offset="0.478" stop-color="#cac5bc"/><stop offset="0.494" stop-color="#cecac1"/><stop offset="0.512" stop-color="#c9c4ba"/><stop offset="0.577" stop-color="#c7bdb1"/><stop offset="0.725" stop-color="#bfa38f"/><stop offset="0.852" stop-color="#b08a76"/><stop offset="0.917" stop-color="#a37a6b"/><stop offset="0.991" stop-color="#90655c"/><stop offset="1" stop-color="#90655c"/></linearGradient>
<linearGradient id="g452" gradientUnits="userSpaceOnUse" x1="642.5" x2="966.5"><stop offset="0" stop-color="#b08a76"/><stop offset="0.04" stop-color="#b48f7b"/><stop offset="0.043" stop-color="#ad8975"/><stop offset="0.049" stop-color="#a98472"/><stop offset="0.052" stop-color="#ac8875"/><stop offset="0.059" stop-color="#bb9a85"/><stop offset="0.105" stop-color="#c3a590"/><stop offset="0.111" stop-color="#c7ab97"/><stop offset="0.114" stop-color="#cbb2a0"/><stop offset="0.12" stop-color="#dacabe"/><stop offset="0.123" stop-color="#dfd2c8"/><stop offset="0.127" stop-color="#e0d3c9"/><stop offset="0.13" stop-color="#dccec3"/><stop offset="0.133" stop-color="#d7c5b8"/><stop offset="0.136" stop-color="#ceb8a8"/><stop offset="0.139" stop-color="#c2a693"/><stop offset="0.142" stop-color="#bd9e8a"/><stop offset="0.29" stop-color="#c4b1a2"/><stop offset="0.364" stop-color="#c8bdb1"/><stop offset="0.373" stop-color="#ccc3b8"/><stop offset="0.389" stop-color="#c8bfb4"/><stop offset="0.407" stop-color="#d2c6b9"/><stop offset="0.444" stop-color="#d4c9bb"/><stop offset="0.463" stop-color="#d3c9bc"/><stop offset="0.481" stop-color="#c9c5bb"/><stop offset="0.5" stop-color="#cdc8bf"/><stop offset="0.512" stop-color="#c9c3b9"/><stop offset="0.583" stop-color="#c7bcaf"/><stop offset="0.744" stop-color="#bd9f8b"/><stop offset="0.87" stop-color="#ad8673"/><stop offset="0.96" stop-color="#976d62"/><stop offset="0.994" stop-color="#8f645b"/><stop offset="1" stop-color="#8f645b"/></linearGradient>
<linearGradient id="g453" gradientUnits="userSpaceOnUse" x1="642.5" x2="966.5"><stop offset="0" stop-color="#af8976"/><stop offset="0.04" stop-color="#b38e7a"/><stop offset="0.043" stop-color="#ab8673"/><stop offset="0.049" stop-color="#a6806e"/><stop offset="0.052" stop-color="#aa8573"/><stop offset="0.059" stop-color="#bb9984"/><stop offset="0.105" stop-color="#c3a58f"/><stop offset="0.111" stop-color="#c6aa96"/><stop offset="0.114" stop-color="#cbb19f"/><stop offset="0.12" stop-color="#d9c8bb"/><stop offset="0.123" stop-color="#ddcfc4"/><stop offset="0.127" stop-color="#ded0c6"/><stop offset="0.133" stop-color="#d5c3b5"/><stop offset="0.136" stop-color="#ccb5a4"/><stop offset="0.139" stop-color="#c1a390"/><stop offset="0.142" stop-color="#bd9e89"/><stop offset="0.284" stop-color="#c4b0a0"/><stop offset="0.358" stop-color="#c7bbae"/><stop offset="0.37" stop-color="#cbc1b6"/><stop offset="0.386" stop-color="#c8bfb3"/><stop offset="0.404" stop-color="#d2c6b8"/><stop offset="0.429" stop-color="#d4c8b9"/><stop offset="0.469" stop-color="#d3c8bb"/><stop offset="0.488" stop-color="#c9c4ba"/><stop offset="0.5" stop-color="#cdc7be"/><stop offset="0.522" stop-color="#c8c2b7"/><stop offset="0.586" stop-color="#c7bbae"/><stop offset="0.744" stop-color="#bd9f8b"/><stop offset="0.867" stop-color="#ad8673"/><stop offset="0.932" stop-color="#9e7467"/><stop offset="0.991" stop-color="#8e645b"/><stop offset="1" stop-color="#8e645b"/></linearGradient>
<linearGradient id="g454" gradientUnits="userSpaceOnUse" x1="642.5" x2="966.5"><stop offset="0" stop-color="#af8975"/><stop offset="0.037" stop-color="#b38e7a"/><stop offset="0.04" stop-color="#b08b78"/><stop offset="0.043" stop-color="#a88370"/><stop offset="0.049" stop-color="#a27c6b"/><stop offset="0.052" stop-color="#a88370"/><stop offset="0.056" stop-color="#b3907c"/><stop offset="0.059" stop-color="#ba9883"/><stop offset="0.105" stop-color="#c3a48f"/><stop offset="0.111" stop-color="#c6a995"/><stop offset="0.114" stop-color="#cab09e"/><stop offset="0.12" stop-color="#d7c5b8"/><stop offset="0.123" stop-color="#dccdc1"/><stop offset="0.127" stop-color="#dccdc2"/><stop offset="0.133" stop-color="#d3c0b1"/><stop offset="0.136" stop-color="#cab2a1"/><stop offset="0.139" stop-color="#bfa18d"/><stop offset="0.142" stop-color="#bd9d89"/><stop offset="0.302" stop-color="#c5b2a3"/><stop offset="0.358" stop-color="#c7bbae"/><stop offset="0.367" stop-color="#cbc0b4"/><stop offset="0.383" stop-color="#c8beb2"/><stop offset="0.401" stop-color="#d3c6b7"/><stop offset="0.457" stop-color="#d4c8b9"/><stop offset="0.475" stop-color="#d2c8ba"/><stop offset="0.491" stop-color="#c9c3b9"/><stop offset="0.503" stop-color="#ccc6bd"/><stop offset="0.525" stop-color="#c8c1b6"/><stop offset="0.605" stop-color="#c6b7a9"/><stop offset="0.75" stop-color="#bc9d89"/><stop offset="0.873" stop-color="#ac8472"/><stop offset="0.96" stop-color="#966c61"/><stop offset="0.994" stop-color="#8e635a"/><stop offset="1" stop-color="#8e635a"/></linearGradient>
<linearGradient id="g455" gradientUnits="userSpaceOnUse" x1="641.5" x2="966.5"><stop offset="0" stop-color="#af8875"/><stop offset="0.04" stop-color="#b28d79"/><stop offset="0.043" stop-color="#af8976"/><stop offset="0.049" stop-color="#a07969"/><stop offset="0.052" stop-color="#9f7868"/><stop offset="0.055" stop-color="#a6806e"/><stop offset="0.058" stop-color="#b28f7b"/><stop offset="0.062" stop-color="#b99782"/><stop offset="0.111" stop-color="#c3a590"/><stop offset="0.114" stop-color="#c5a994"/><stop offset="0.12" stop-color="#d0baa9"/><stop offset="0.126" stop-color="#dacabe"/><stop offset="0.129" stop-color="#dacabe"/><stop offset="0.132" stop-color="#d7c5b7"/><stop offset="0.135" stop-color="#d1bcad"/><stop offset="0.142" stop-color="#bd9e8a"/><stop offset="0.16" stop-color="#bd9e8a"/><stop offset="0.308" stop-color="#c5b2a3"/><stop offset="0.357" stop-color="#c7baad"/><stop offset="0.369" stop-color="#cabfb3"/><stop offset="0.378" stop-color="#c7bcb0"/><stop offset="0.397" stop-color="#d2c5b5"/><stop offset="0.465" stop-color="#d3c7b8"/><stop offset="0.48" stop-color="#d3c7b9"/><stop offset="0.495" stop-color="#c9c2b8"/><stop offset="0.511" stop-color="#cbc5ba"/><stop offset="0.529" stop-color="#c8c0b5"/><stop offset="0.612" stop-color="#c5b6a7"/><stop offset="0.738" stop-color="#bd9f8b"/><stop offset="0.871" stop-color="#ac8572"/><stop offset="0.945" stop-color="#9a7064"/><stop offset="0.991" stop-color="#8d635a"/><stop offset="1" stop-color="#8d635a"/></linearGradient>
<linearGradient id="g456" gradientUnits="userSpaceOnUse" x1="641.5" x2="967.5"><stop offset="0" stop-color="#ae8774"/><stop offset="0.04" stop-color="#b28d79"/><stop offset="0.043" stop-color="#ad8774"/><stop offset="0.046" stop-color="#a37c6b"/><stop offset="0.049" stop-color="#9c7565"/><stop offset="0.052" stop-color="#9c7464"/><stop offset="0.055" stop-color="#a37d6c"/><stop offset="0.058" stop-color="#b28f7b"/><stop offset="0.061" stop-color="#b89681"/><stop offset="0.107" stop-color="#c2a38d"/><stop offset="0.113" stop-color="#c5a994"/><stop offset="0.117" stop-color="#c9af9c"/><stop offset="0.123" stop-color="#d4c1b2"/><stop offset="0.126" stop-color="#d8c7ba"/><stop offset="0.129" stop-color="#d8c6b9"/><stop offset="0.132" stop-color="#d4c1b2"/><stop offset="0.135" stop-color="#cfb8a8"/><stop offset="0.141" stop-color="#bc9d89"/><stop offset="0.169" stop-color="#be9f8b"/><stop offset="0.344" stop-color="#c6b7a9"/><stop offset="0.356" stop-color="#c7baad"/><stop offset="0.365" stop-color="#c9beb1"/><stop offset="0.377" stop-color="#c8bcb0"/><stop offset="0.393" stop-color="#d2c4b4"/><stop offset="0.417" stop-color="#d2c5b5"/><stop offset="0.436" stop-color="#d7ccbf"/><stop offset="0.448" stop-color="#d5c9bb"/><stop offset="0.46" stop-color="#d2c6b6"/><stop offset="0.482" stop-color="#d3c7b9"/><stop offset="0.497" stop-color="#c8c2b7"/><stop offset="0.512" stop-color="#cbc3b9"/><stop offset="0.525" stop-color="#c8c0b4"/><stop offset="0.589" stop-color="#c6b8ab"/><stop offset="0.736" stop-color="#bd9f8b"/><stop offset="0.862" stop-color="#ad8673"/><stop offset="0.926" stop-color="#9e7467"/><stop offset="0.991" stop-color="#8c6259"/><stop offset="1" stop-color="#8c6259"/></linearGradient>
<linearGradient id="g457" gradientUnits="userSpaceOnUse" x1="641.5" x2="967.5"><stop offset="0" stop-color="#ae8774"/><stop offset="0.04" stop-color="#b28d78"/><stop offset="0.043" stop-color="#ab8572"/><stop offset="0.046" stop-color="#a07968"/><stop offset="0.049" stop-color="#997161"/><stop offset="0.052" stop-color="#997061"/><stop offset="0.055" stop-color="#a17a69"/><stop offset="0.058" stop-color="#b18e7a"/><stop offset="0.061" stop-color="#b79580"/><stop offset="0.107" stop-color="#c2a38d"/><stop offset="0.113" stop-color="#c5a894"/><stop offset="0.123" stop-color="#d3beaf"/><stop offset="0.126" stop-color="#d6c4b6"/><stop offset="0.129" stop-color="#d5c2b4"/><stop offset="0.132" stop-color="#d2bdae"/><stop offset="0.135" stop-color="#ccb4a3"/><stop offset="0.138" stop-color="#c3a693"/><stop offset="0.141" stop-color="#bc9c88"/><stop offset="0.242" stop-color="#c1a896"/><stop offset="0.35" stop-color="#c6b8aa"/><stop offset="0.362" stop-color="#c9bcb0"/><stop offset="0.374" stop-color="#c7bbae"/><stop offset="0.39" stop-color="#d2c3b3"/><stop offset="0.411" stop-color="#d2c4b4"/><stop offset="0.426" stop-color="#dcd2c6"/><stop offset="0.436" stop-color="#ded5ca"/><stop offset="0.448" stop-color="#dbd1c5"/><stop offset="0.463" stop-color="#d2c5b5"/><stop offset="0.485" stop-color="#d3c6b8"/><stop offset="0.5" stop-color="#c8c1b6"/><stop offset="0.515" stop-color="#cac2b7"/><stop offset="0.531" stop-color="#c7bfb3"/><stop offset="0.613" stop-color="#c5b4a5"/><stop offset="0.742" stop-color="#bc9d89"/><stop offset="0.865" stop-color="#ac8572"/><stop offset="0.92" stop-color="#9f7568"/><stop offset="0.991" stop-color="#8c6159"/><stop offset="1" stop-color="#8c6159"/></linearGradient>
<linearGradient id="g458" gradientUnits="userSpaceOnUse" x1="641.5" x2="967.5"><stop offset="0" stop-color="#ad8673"/><stop offset="0.04" stop-color="#b28c78"/><stop offset="0.043" stop-color="#aa8370"/><stop offset="0.046" stop-color="#9e7666"/><stop offset="0.049" stop-color="#966d5e"/><stop offset="0.052" stop-color="#956c5d"/><stop offset="0.055" stop-color="#9e7766"/><stop offset="0.058" stop-color="#af8c78"/><stop offset="0.061" stop-color="#b6947f"/><stop offset="0.107" stop-color="#c1a28c"/><stop offset="0.113" stop-color="#c5a893"/><stop offset="0.123" stop-color="#d2bcad"/><stop offset="0.126" stop-color="#d4c0b1"/><stop offset="0.129" stop-color="#d3beaf"/><stop offset="0.132" stop-color="#cfb9a9"/><stop offset="0.135" stop-color="#c9af9e"/><stop offset="0.138" stop-color="#c0a28f"/><stop offset="0.141" stop-color="#bc9c87"/><stop offset="0.273" stop-color="#c3ac9b"/><stop offset="0.35" stop-color="#c6b7a9"/><stop offset="0.362" stop-color="#c8bbae"/><stop offset="0.371" stop-color="#c7baac"/><stop offset="0.383" stop-color="#d0c2b1"/><stop offset="0.405" stop-color="#d1c3b2"/><stop offset="0.423" stop-color="#e0d7cd"/><stop offset="0.436" stop-color="#e3dbd2"/><stop offset="0.445" stop-color="#e2dad0"/><stop offset="0.454" stop-color="#ddd3c8"/><stop offset="0.466" stop-color="#d2c5b6"/><stop offset="0.472" stop-color="#d2c4b5"/><stop offset="0.488" stop-color="#d2c6b7"/><stop offset="0.503" stop-color="#c8c0b5"/><stop offset="0.515" stop-color="#cac2b6"/><stop offset="0.531" stop-color="#c7beb2"/><stop offset="0.613" stop-color="#c4b4a4"/><stop offset="0.73" stop-color="#bd9f8b"/><stop offset="0.859" stop-color="#ad8673"/><stop offset="0.923" stop-color="#9e7467"/><stop offset="0.991" stop-color="#8b6158"/><stop offset="1" stop-color="#8b6158"/></linearGradient>
<linearGradient id="g459" gradientUnits="userSpaceOnUse" x1="641.5" x2="967.5"><stop offset="0" stop-color="#ad8672"/><stop offset="0.028" stop-color="#b08976"/><stop offset="0.04" stop-color="#b18c77"/><stop offset="0.043" stop-color="#a9826f"/><stop offset="0.046" stop-color="#9c7463"/><stop offset="0.049" stop-color="#92695b"/><stop offset="0.052" stop-color="#92685a"/><stop offset="0.055" stop-color="#9b7363"/><stop offset="0.058" stop-color="#ad8875"/><stop offset="0.061" stop-color="#b6937e"/><stop offset="0.098" stop-color="#bf9f89"/><stop offset="0.11" stop-color="#c2a48e"/><stop offset="0.117" stop-color="#c8ae9a"/><stop offset="0.123" stop-color="#d0baaa"/><stop offset="0.126" stop-color="#d1bcac"/><stop offset="0.129" stop-color="#d0baaa"/><stop offset="0.132" stop-color="#cdb5a3"/><stop offset="0.138" stop-color="#bd9e8a"/><stop offset="0.144" stop-color="#bc9b87"/><stop offset="0.282" stop-color="#c3ad9c"/><stop offset="0.35" stop-color="#c6b7a9"/><stop offset="0.359" stop-color="#c8baac"/><stop offset="0.368" stop-color="#c6b9ab"/><stop offset="0.38" stop-color="#d0c1b0"/><stop offset="0.399" stop-color="#d0c1b0"/><stop offset="0.405" stop-color="#d4c6b7"/><stop offset="0.417" stop-color="#dfd6cc"/><stop offset="0.423" stop-color="#e2d9d0"/><stop offset="0.451" stop-color="#e1d9d0"/><stop offset="0.457" stop-color="#ded5cb"/><stop offset="0.469" stop-color="#d3c6b7"/><stop offset="0.472" stop-color="#d1c4b3"/><stop offset="0.491" stop-color="#d2c5b6"/><stop offset="0.503" stop-color="#c8c0b4"/><stop offset="0.518" stop-color="#c9c0b5"/><stop offset="0.531" stop-color="#c7bdb1"/><stop offset="0.607" stop-color="#c5b4a5"/><stop offset="0.748" stop-color="#bb9b87"/><stop offset="0.862" stop-color="#ac8572"/><stop offset="0.926" stop-color="#9d7366"/><stop offset="0.991" stop-color="#8b6057"/><stop offset="1" stop-color="#8b6057"/></linearGradient>
<linearGradient id="g460" gradientUnits="userSpaceOnUse" x1="641.5" x2="967.5"><stop offset="0" stop-color="#ac8572"/><stop offset="0.04" stop-color="#b18b77"/><stop offset="0.043" stop-color="#a8816f"/><stop offset="0.046" stop-color="#9a7162"/><stop offset="0.049" stop-color="#906658"/><stop offset="0.052" stop-color="#8e6456"/><stop offset="0.055" stop-color="#976e5f"/><stop offset="0.058" stop-color="#a98471"/><stop offset="0.061" stop-color="#b5927d"/><stop offset="0.092" stop-color="#bd9c86"/><stop offset="0.107" stop-color="#c1a18b"/><stop offset="0.113" stop-color="#c4a792"/><stop offset="0.123" stop-color="#ceb7a6"/><stop offset="0.126" stop-color="#cfb8a7"/><stop offset="0.129" stop-color="#cdb6a4"/><stop offset="0.132" stop-color="#cab09e"/><stop offset="0.138" stop-color="#bb9b86"/><stop offset="0.282" stop-color="#c3ad9b"/><stop offset="0.347" stop-color="#c5b6a7"/><stop offset="0.359" stop-color="#c7b9ab"/><stop offset="0.368" stop-color="#c7b9ab"/><stop offset="0.38" stop-color="#d0c0b0"/><stop offset="0.396" stop-color="#d0c0af"/><stop offset="0.402" stop-color="#d4c6b7"/><stop offset="0.411" stop-color="#ddd3c8"/><stop offset="0.417" stop-color="#dfd6cb"/><stop offset="0.436" stop-color="#dbd0c4"/><stop offset="0.457" stop-color="#dfd6cc"/><stop offset="0.463" stop-color="#dcd2c7"/><stop offset="0.475" stop-color="#d1c3b3"/><stop offset="0.494" stop-color="#d1c4b5"/><stop offset="0.506" stop-color="#c7beb2"/><stop offset="0.521" stop-color="#c8bfb3"/><stop offset="0.574" stop-color="#c6b8aa"/><stop offset="0.727" stop-color="#bd9f8b"/><stop offset="0.862" stop-color="#ac8472"/><stop offset="0.917" stop-color="#9f7567"/><stop offset="0.991" stop-color="#8a5f57"/><stop offset="1" stop-color="#8a5f57"/></linearGradient>
<linearGradient id="g461" gradientUnits="userSpaceOnUse" x1="641.5" x2="967.5"><stop offset="0" stop-color="#ac8471"/><stop offset="0.04" stop-color="#b18b77"/><stop offset="0.043" stop-color="#a8816f"/><stop offset="0.046" stop-color="#997060"/><stop offset="0.049" stop-color="#8d6355"/><stop offset="0.052" stop-color="#8a6053"/><stop offset="0.055" stop-color="#92695b"/><stop offset="0.061" stop-color="#b4917c"/><stop offset="0.095" stop-color="#bd9c87"/><stop offset="0.11" stop-color="#c2a38d"/><stop offset="0.123" stop-color="#ccb3a2"/><stop offset="0.126" stop-color="#ccb4a2"/><stop offset="0.129" stop-color="#cbb19f"/><stop offset="0.132" stop-color="#c6ab98"/><stop offset="0.135" stop-color="#bfa18d"/><stop offset="0.138" stop-color="#bb9a86"/><stop offset="0.255" stop-color="#c1a896"/><stop offset="0.347" stop-color="#c5b5a7"/><stop offset="0.356" stop-color="#c7b8aa"/><stop offset="0.365" stop-color="#c6b7a9"/><stop offset="0.377" stop-color="#d0bfae"/><stop offset="0.393" stop-color="#d0bfae"/><stop offset="0.399" stop-color="#d4c6b6"/><stop offset="0.405" stop-color="#dacfc2"/><stop offset="0.411" stop-color="#ddd2c7"/><stop offset="0.417" stop-color="#dbd0c3"/><stop offset="0.429" stop-color="#d5c8b9"/><stop offset="0.442" stop-color="#d5c8b9"/><stop offset="0.46" stop-color="#ddd3c8"/><stop offset="0.466" stop-color="#dbd1c5"/><stop offset="0.479" stop-color="#d1c2b2"/><stop offset="0.494" stop-color="#d2c4b4"/><stop offset="0.509" stop-color="#c7beb1"/><stop offset="0.521" stop-color="#c8beb2"/><stop offset="0.632" stop-color="#c3af9e"/><stop offset="0.773" stop-color="#b89681"/><stop offset="0.877" stop-color="#a9806f"/><stop offset="0.979" stop-color="#8d6259"/><stop offset="0.997" stop-color="#895f56"/><stop offset="1" stop-color="#895f56"/></linearGradient>
<linearGradient id="g462" gradientUnits="userSpaceOnUse" x1="641.5" x2="967.5"><stop offset="0" stop-color="#ab8471"/><stop offset="0.04" stop-color="#b08a76"/><stop offset="0.043" stop-color="#a9826f"/><stop offset="0.046" stop-color="#986f60"/><stop offset="0.049" stop-color="#8b6153"/><stop offset="0.052" stop-color="#875b4f"/><stop offset="0.055" stop-color="#8e6356"/><stop offset="0.058" stop-color="#9e7767"/><stop offset="0.061" stop-color="#b3907b"/><stop offset="0.092" stop-color="#bb9a85"/><stop offset="0.11" stop-color="#c1a28c"/><stop offset="0.123" stop-color="#cab09d"/><stop offset="0.129" stop-color="#c8ad9a"/><stop offset="0.135" stop-color="#bc9c88"/><stop offset="0.141" stop-color="#bb9a85"/><stop offset="0.34" stop-color="#c5b3a4"/><stop offset="0.356" stop-color="#c6b7a8"/><stop offset="0.362" stop-color="#c5b6a7"/><stop offset="0.374" stop-color="#cfbead"/><stop offset="0.39" stop-color="#cfbead"/><stop offset="0.396" stop-color="#d3c4b4"/><stop offset="0.402" stop-color="#d9ccbf"/><stop offset="0.408" stop-color="#dacfc2"/><stop offset="0.423" stop-color="#d2c4b3"/><stop offset="0.436" stop-color="#d0c1b0"/><stop offset="0.448" stop-color="#d2c4b4"/><stop offset="0.463" stop-color="#dacfc3"/><stop offset="0.469" stop-color="#dacfc2"/><stop offset="0.482" stop-color="#d0c1b1"/><stop offset="0.497" stop-color="#d1c3b3"/><stop offset="0.509" stop-color="#c7bdb0"/><stop offset="0.525" stop-color="#c8bdb0"/><stop offset="0.561" stop-color="#c6b8aa"/><stop offset="0.669" stop-color="#c1a896"/><stop offset="0.804" stop-color="#b4907b"/><stop offset="0.893" stop-color="#a57c6c"/><stop offset="0.991" stop-color="#895e56"/><stop offset="1" stop-color="#895e56"/></linearGradient>
<linearGradient id="g463" gradientUnits="userSpaceOnUse" x1="641.5" x2="967.5"><stop offset="0" stop-color="#ab8371"/><stop offset="0.031" stop-color="#af8874"/><stop offset="0.04" stop-color="#b08a76"/><stop offset="0.043" stop-color="#aa8370"/><stop offset="0.046" stop-color="#986f60"/><stop offset="0.049" stop-color="#8a5f52"/><stop offset="0.052" stop-color="#84584c"/><stop offset="0.055" stop-color="#895e51"/><stop offset="0.058" stop-color="#986f60"/><stop offset="0.061" stop-color="#b08c79"/><stop offset="0.067" stop-color="#b3907c"/><stop offset="0.11" stop-color="#c0a18b"/><stop offset="0.123" stop-color="#c7ac98"/><stop offset="0.129" stop-color="#c5a995"/><stop offset="0.135" stop-color="#ba9985"/><stop offset="0.236" stop-color="#c0a592"/><stop offset="0.344" stop-color="#c5b4a4"/><stop offset="0.356" stop-color="#c5b5a7"/><stop offset="0.362" stop-color="#c5b6a7"/><stop offset="0.374" stop-color="#cfbeac"/><stop offset="0.39" stop-color="#cfbfad"/><stop offset="0.402" stop-color="#d8ccbe"/><stop offset="0.408" stop-color="#d7c9bb"/><stop offset="0.42" stop-color="#d0c0af"/><stop offset="0.442" stop-color="#cfbfad"/><stop offset="0.454" stop-color="#d1c2b1"/><stop offset="0.466" stop-color="#d8ccbf"/><stop offset="0.472" stop-color="#d8ccbf"/><stop offset="0.482" stop-color="#d1c2b2"/><stop offset="0.485" stop-color="#d0c1af"/><stop offset="0.5" stop-color="#d0c2b2"/><stop offset="0.512" stop-color="#c7bcaf"/><stop offset="0.525" stop-color="#c7bcaf"/><stop offset="0.626" stop-color="#c3af9e"/><stop offset="0.761" stop-color="#b99883"/><stop offset="0.871" stop-color="#a9816f"/><stop offset="0.926" stop-color="#9b7165"/><stop offset="0.991" stop-color="#885e55"/><stop offset="1" stop-color="#885e55"/></linearGradient>
<linearGradient id="g464" gradientUnits="userSpaceOnUse" x1="641.5" x2="967.5"><stop offset="0" stop-color="#aa8270"/><stop offset="0.04" stop-color="#b08975"/><stop offset="0.043" stop-color="#ad8673"/><stop offset="0.046" stop-color="#997061"/><stop offset="0.049" stop-color="#8a5f52"/><stop offset="0.052" stop-color="#815549"/><stop offset="0.055" stop-color="#84584c"/><stop offset="0.058" stop-color="#906759"/><stop offset="0.061" stop-color="#a6816f"/><stop offset="0.064" stop-color="#b28e7a"/><stop offset="0.11" stop-color="#c0a08a"/><stop offset="0.123" stop-color="#c5a893"/><stop offset="0.126" stop-color="#c5a893"/><stop offset="0.132" stop-color="#bc9c88"/><stop offset="0.135" stop-color="#ba9984"/><stop offset="0.31" stop-color="#c3ae9d"/><stop offset="0.347" stop-color="#c5b4a5"/><stop offset="0.359" stop-color="#c5b4a5"/><stop offset="0.371" stop-color="#cebdab"/><stop offset="0.387" stop-color="#cebdab"/><stop offset="0.399" stop-color="#d6c9ba"/><stop offset="0.405" stop-color="#d5c6b7"/><stop offset="0.414" stop-color="#d0bfae"/><stop offset="0.429" stop-color="#cebeab"/><stop offset="0.454" stop-color="#cfbfae"/><stop offset="0.463" stop-color="#d2c4b4"/><stop offset="0.469" stop-color="#d6c9bb"/><stop offset="0.475" stop-color="#d6cabb"/><stop offset="0.485" stop-color="#d0c1b0"/><stop offset="0.5" stop-color="#d1c2b1"/><stop offset="0.512" stop-color="#c7bbae"/><stop offset="0.528" stop-color="#c7bbae"/><stop offset="0.638" stop-color="#c2ac9b"/><stop offset="0.767" stop-color="#b89682"/><stop offset="0.865" stop-color="#aa8270"/><stop offset="0.926" stop-color="#9b7064"/><stop offset="0.994" stop-color="#875d55"/><stop offset="1" stop-color="#875d55"/></linearGradient>
<linearGradient id="g465" gradientUnits="userSpaceOnUse" x1="641.5" x2="967.5"><stop offset="0" stop-color="#aa8270"/><stop offset="0.037" stop-color="#af8874"/><stop offset="0.043" stop-color="#b08975"/><stop offset="0.049" stop-color="#8b6052"/><stop offset="0.052" stop-color="#805348"/><stop offset="0.055" stop-color="#7f5347"/><stop offset="0.058" stop-color="#895e51"/><stop offset="0.064" stop-color="#b18d79"/><stop offset="0.11" stop-color="#bf9f89"/><stop offset="0.123" stop-color="#c3a48f"/><stop offset="0.126" stop-color="#c2a48f"/><stop offset="0.132" stop-color="#ba9984"/><stop offset="0.163" stop-color="#bb9b87"/><stop offset="0.322" stop-color="#c3af9f"/><stop offset="0.359" stop-color="#c5b4a5"/><stop offset="0.371" stop-color="#cebcaa"/><stop offset="0.383" stop-color="#cebca9"/><stop offset="0.396" stop-color="#d4c6b6"/><stop offset="0.399" stop-color="#d5c6b7"/><stop offset="0.411" stop-color="#cfbeac"/><stop offset="0.423" stop-color="#cebdaa"/><stop offset="0.46" stop-color="#cfbfad"/><stop offset="0.475" stop-color="#d5c8b9"/><stop offset="0.488" stop-color="#cfbfae"/><stop offset="0.503" stop-color="#cfc1b0"/><stop offset="0.515" stop-color="#c6baad"/><stop offset="0.54" stop-color="#c6b9ab"/><stop offset="0.65" stop-color="#c1aa98"/><stop offset="0.764" stop-color="#b89682"/><stop offset="0.868" stop-color="#a9816f"/><stop offset="0.923" stop-color="#9b7165"/><stop offset="0.991" stop-color="#875c54"/><stop offset="1" stop-color="#875c54"/></linearGradient>
<linearGradient id="g466" gradientUnits="userSpaceOnUse" x1="641.5" x2="967.5"><stop offset="0" stop-color="#a9816f"/><stop offset="0.043" stop-color="#af8975"/><stop offset="0.049" stop-color="#8d6254"/><stop offset="0.052" stop-color="#7f5247"/><stop offset="0.055" stop-color="#7c4e44"/><stop offset="0.058" stop-color="#82564a"/><stop offset="0.061" stop-color="#91685a"/><stop offset="0.064" stop-color="#a88270"/><stop offset="0.067" stop-color="#b18d79"/><stop offset="0.107" stop-color="#be9d87"/><stop offset="0.113" stop-color="#bd9d87"/><stop offset="0.12" stop-color="#c0a18c"/><stop offset="0.123" stop-color="#c1a28c"/><stop offset="0.132" stop-color="#b99783"/><stop offset="0.285" stop-color="#c2aa98"/><stop offset="0.359" stop-color="#c5b4a4"/><stop offset="0.371" stop-color="#cebca9"/><stop offset="0.383" stop-color="#cebca9"/><stop offset="0.396" stop-color="#d3c4b3"/><stop offset="0.408" stop-color="#cebdab"/><stop offset="0.42" stop-color="#cdbcaa"/><stop offset="0.463" stop-color="#cebeac"/><stop offset="0.475" stop-color="#d3c5b6"/><stop offset="0.482" stop-color="#d2c4b3"/><stop offset="0.488" stop-color="#cfbfae"/><stop offset="0.503" stop-color="#d0c0af"/><stop offset="0.515" stop-color="#c6baac"/><stop offset="0.577" stop-color="#c4b4a5"/><stop offset="0.699" stop-color="#bea18e"/><stop offset="0.84" stop-color="#ae8774"/><stop offset="0.902" stop-color="#a17769"/><stop offset="0.991" stop-color="#865c53"/><stop offset="1" stop-color="#865c53"/></linearGradient>
<linearGradient id="g467" gradientUnits="userSpaceOnUse" x1="641.5" x2="967.5"><stop offset="0" stop-color="#a9806f"/><stop offset="0.043" stop-color="#af8874"/><stop offset="0.046" stop-color="#a37b6a"/><stop offset="0.049" stop-color="#906658"/><stop offset="0.052" stop-color="#815449"/><stop offset="0.055" stop-color="#794b41"/><stop offset="0.058" stop-color="#7d4f45"/><stop offset="0.061" stop-color="#885c50"/><stop offset="0.064" stop-color="#9a7262"/><stop offset="0.067" stop-color="#b08c79"/><stop offset="0.104" stop-color="#bc9b86"/><stop offset="0.113" stop-color="#bb9a85"/><stop offset="0.12" stop-color="#bf9f89"/><stop offset="0.123" stop-color="#bf9f89"/><stop offset="0.129" stop-color="#b99782"/><stop offset="0.322" stop-color="#c3ae9d"/><stop offset="0.359" stop-color="#c5b4a4"/><stop offset="0.371" stop-color="#cebba8"/><stop offset="0.38" stop-color="#cdbaa7"/><stop offset="0.393" stop-color="#d2c1b0"/><stop offset="0.399" stop-color="#d0bfae"/><stop offset="0.408" stop-color="#cdbca9"/><stop offset="0.466" stop-color="#cebeab"/><stop offset="0.479" stop-color="#d2c3b3"/><stop offset="0.491" stop-color="#cebeac"/><stop offset="0.503" stop-color="#d0c0ae"/><stop offset="0.515" stop-color="#c6b9ab"/><stop offset="0.577" stop-color="#c4b3a4"/><stop offset="0.687" stop-color="#bea390"/><stop offset="0.801" stop-color="#b38f7a"/><stop offset="0.89" stop-color="#a47b6b"/><stop offset="0.979" stop-color="#895f56"/><stop offset="0.997" stop-color="#865b53"/><stop offset="1" stop-color="#865b53"/></linearGradient>
<linearGradient id="g468" gradientUnits="userSpaceOnUse" x1="641.5" x2="967.5"><stop offset="0" stop-color="#a8806e"/><stop offset="0.031" stop-color="#ad8572"/><stop offset="0.043" stop-color="#ae8874"/><stop offset="0.046" stop-color="#a9826f"/><stop offset="0.049" stop-color="#956b5c"/><stop offset="0.052" stop-color="#84584c"/><stop offset="0.055" stop-color="#794b41"/><stop offset="0.058" stop-color="#784a40"/><stop offset="0.061" stop-color="#7f5247"/><stop offset="0.064" stop-color="#8d6355"/><stop offset="0.071" stop-color="#b08d79"/><stop offset="0.101" stop-color="#bb9a84"/><stop offset="0.11" stop-color="#b79581"/><stop offset="0.12" stop-color="#bd9d87"/><stop offset="0.129" stop-color="#b89681"/><stop offset="0.285" stop-color="#c1a997"/><stop offset="0.356" stop-color="#c4b2a1"/><stop offset="0.368" stop-color="#cdbaa7"/><stop offset="0.383" stop-color="#cebba8"/><stop offset="0.39" stop-color="#d0bead"/><stop offset="0.402" stop-color="#cebca9"/><stop offset="0.466" stop-color="#cebdaa"/><stop offset="0.482" stop-color="#d1c1b0"/><stop offset="0.494" stop-color="#cebdab"/><stop offset="0.506" stop-color="#cebead"/><stop offset="0.518" stop-color="#c5b8aa"/><stop offset="0.601" stop-color="#c3b09f"/><stop offset="0.727" stop-color="#bb9c87"/><stop offset="0.847" stop-color="#ac8572"/><stop offset="0.911" stop-color="#9e7466"/><stop offset="0.991" stop-color="#855b52"/><stop offset="1" stop-color="#855b52"/></linearGradient>
<linearGradient id="g469" gradientUnits="userSpaceOnUse" x1="641.5" x2="967.5"><stop offset="0" stop-color="#a77f6e"/><stop offset="0.046" stop-color="#af8874"/><stop offset="0.052" stop-color="#895d50"/><stop offset="0.055" stop-color="#7b4e43"/><stop offset="0.058" stop-color="#75473d"/><stop offset="0.061" stop-color="#794b41"/><stop offset="0.064" stop-color="#82564a"/><stop offset="0.067" stop-color="#906658"/><stop offset="0.074" stop-color="#b18d79"/><stop offset="0.098" stop-color="#b99782"/><stop offset="0.104" stop-color="#b3917d"/><stop offset="0.11" stop-color="#b4927e"/><stop offset="0.12" stop-color="#bb9984"/><stop offset="0.126" stop-color="#b89581"/><stop offset="0.298" stop-color="#c2aa98"/><stop offset="0.356" stop-color="#c4b1a1"/><stop offset="0.368" stop-color="#cdb9a6"/><stop offset="0.38" stop-color="#cdb9a6"/><stop offset="0.393" stop-color="#cfbdab"/><stop offset="0.405" stop-color="#cdbaa7"/><stop offset="0.472" stop-color="#cebdaa"/><stop offset="0.482" stop-color="#d0bfae"/><stop offset="0.494" stop-color="#cebcaa"/><stop offset="0.506" stop-color="#cfbeac"/><stop offset="0.518" stop-color="#c5b7a9"/><stop offset="0.61" stop-color="#c2ae9d"/><stop offset="0.724" stop-color="#bb9c87"/><stop offset="0.847" stop-color="#ac8472"/><stop offset="0.905" stop-color="#9f7567"/><stop offset="0.982" stop-color="#875d54"/><stop offset="1" stop-color="#845a52"/></linearGradient>
<linearGradient id="g470" gradientUnits="userSpaceOnUse" x1="641.5" x2="967.5"><stop offset="0" stop-color="#a77e6d"/><stop offset="0.046" stop-color="#ae8774"/><stop offset="0.049" stop-color="#a27a69"/><stop offset="0.052" stop-color="#8f6557"/><stop offset="0.055" stop-color="#805348"/><stop offset="0.058" stop-color="#76483e"/><stop offset="0.061" stop-color="#75463d"/><stop offset="0.064" stop-color="#7a4c42"/><stop offset="0.071" stop-color="#906658"/><stop offset="0.077" stop-color="#aa8572"/><stop offset="0.08" stop-color="#b28e7a"/><stop offset="0.092" stop-color="#b6947f"/><stop offset="0.101" stop-color="#ae8a77"/><stop offset="0.107" stop-color="#af8c78"/><stop offset="0.117" stop-color="#b89681"/><stop offset="0.144" stop-color="#b99782"/><stop offset="0.322" stop-color="#c2ac9b"/><stop offset="0.356" stop-color="#c4b1a0"/><stop offset="0.365" stop-color="#ccb8a4"/><stop offset="0.383" stop-color="#cdbaa6"/><stop offset="0.393" stop-color="#cebba8"/><stop offset="0.411" stop-color="#cdbaa6"/><stop offset="0.475" stop-color="#cebcaa"/><stop offset="0.485" stop-color="#cfbeab"/><stop offset="0.497" stop-color="#cebcaa"/><stop offset="0.509" stop-color="#cdbcab"/><stop offset="0.518" stop-color="#c5b7a8"/><stop offset="0.598" stop-color="#c3af9e"/><stop offset="0.733" stop-color="#ba9a85"/><stop offset="0.844" stop-color="#ac8572"/><stop offset="0.908" stop-color="#9e7467"/><stop offset="0.991" stop-color="#845a51"/><stop offset="1" stop-color="#845a51"/></linearGradient>
<linearGradient id="g471" gradientUnits="userSpaceOnUse" x1="641.5" x2="967.5"><stop offset="0" stop-color="#a67e6d"/><stop offset="0.025" stop-color="#aa8270"/><stop offset="0.046" stop-color="#ae8773"/><stop offset="0.049" stop-color="#ac8571"/><stop offset="0.052" stop-color="#986e5f"/><stop offset="0.055" stop-color="#875b4f"/><stop offset="0.058" stop-color="#7a4c42"/><stop offset="0.061" stop-color="#74453c"/><stop offset="0.064" stop-color="#75463d"/><stop offset="0.071" stop-color="#83574c"/><stop offset="0.08" stop-color="#9f7867"/><stop offset="0.086" stop-color="#a88270"/><stop offset="0.101" stop-color="#a78270"/><stop offset="0.107" stop-color="#ac8875"/><stop offset="0.113" stop-color="#b4927e"/><stop offset="0.138" stop-color="#b89681"/><stop offset="0.322" stop-color="#c2ac9a"/><stop offset="0.356" stop-color="#c4b09f"/><stop offset="0.365" stop-color="#ccb7a3"/><stop offset="0.393" stop-color="#cdbaa6"/><stop offset="0.479" stop-color="#cebca9"/><stop offset="0.5" stop-color="#cebca9"/><stop offset="0.509" stop-color="#cdbbaa"/><stop offset="0.518" stop-color="#c5b6a7"/><stop offset="0.607" stop-color="#c2ad9c"/><stop offset="0.73" stop-color="#ba9a85"/><stop offset="0.853" stop-color="#aa8270"/><stop offset="0.905" stop-color="#9e7467"/><stop offset="0.994" stop-color="#835951"/><stop offset="1" stop-color="#835951"/></linearGradient>
<linearGradient id="g472" gradientUnits="userSpaceOnUse" x1="641.5" x2="967.5"><stop offset="0" stop-color="#a67d6c"/><stop offset="0.031" stop-color="#ab8370"/><stop offset="0.049" stop-color="#ae8773"/><stop offset="0.052" stop-color="#a17968"/><stop offset="0.055" stop-color="#906557"/><stop offset="0.058" stop-color="#815549"/><stop offset="0.061" stop-color="#784940"/><stop offset="0.064" stop-color="#74453c"/><stop offset="0.067" stop-color="#75473d"/><stop offset="0.074" stop-color="#82554a"/><stop offset="0.083" stop-color="#956c5d"/><stop offset="0.095" stop-color="#9e7767"/><stop offset="0.104" stop-color="#a7816f"/><stop offset="0.11" stop-color="#b08d79"/><stop offset="0.123" stop-color="#b7947f"/><stop offset="0.307" stop-color="#c1aa98"/><stop offset="0.356" stop-color="#c4b09e"/><stop offset="0.368" stop-color="#ccb7a2"/><stop offset="0.405" stop-color="#ccb9a5"/><stop offset="0.5" stop-color="#cdbba8"/><stop offset="0.506" stop-color="#cebca9"/><stop offset="0.521" stop-color="#c4b5a6"/><stop offset="0.613" stop-color="#c2ac9a"/><stop offset="0.767" stop-color="#b6937e"/><stop offset="0.868" stop-color="#a77e6d"/><stop offset="0.917" stop-color="#9a7064"/><stop offset="0.994" stop-color="#825850"/><stop offset="1" stop-color="#825850"/></linearGradient>
<linearGradient id="g473" gradientUnits="userSpaceOnUse" x1="641.5" x2="967.5"><stop offset="0" stop-color="#a57c6c"/><stop offset="0.052" stop-color="#ad8673"/><stop offset="0.055" stop-color="#9b7161"/><stop offset="0.058" stop-color="#8b6053"/><stop offset="0.061" stop-color="#7f5247"/><stop offset="0.064" stop-color="#784940"/><stop offset="0.067" stop-color="#75463d"/><stop offset="0.071" stop-color="#76483e"/><stop offset="0.086" stop-color="#8e6456"/><stop offset="0.101" stop-color="#a17a69"/><stop offset="0.107" stop-color="#ac8775"/><stop offset="0.117" stop-color="#b5927d"/><stop offset="0.19" stop-color="#bb9b87"/><stop offset="0.356" stop-color="#c3af9e"/><stop offset="0.365" stop-color="#cbb5a1"/><stop offset="0.429" stop-color="#ccb9a5"/><stop offset="0.5" stop-color="#cdbba7"/><stop offset="0.512" stop-color="#cab8a7"/><stop offset="0.518" stop-color="#c4b4a5"/><stop offset="0.601" stop-color="#c2ad9b"/><stop offset="0.736" stop-color="#b99883"/><stop offset="0.85" stop-color="#aa8270"/><stop offset="0.899" stop-color="#9f7568"/><stop offset="0.991" stop-color="#825850"/><stop offset="1" stop-color="#825850"/></linearGradient>
<linearGradient id="g474" gradientUnits="userSpaceOnUse" x1="641.5" x2="967.5"><stop offset="0" stop-color="#a57b6b"/><stop offset="0.043" stop-color="#ac8472"/><stop offset="0.052" stop-color="#ae8773"/><stop offset="0.055" stop-color="#a77f6d"/><stop offset="0.061" stop-color="#8a5e51"/><stop offset="0.064" stop-color="#805348"/><stop offset="0.067" stop-color="#7a4c42"/><stop offset="0.071" stop-color="#784940"/><stop offset="0.077" stop-color="#7c4e44"/><stop offset="0.095" stop-color="#966d5e"/><stop offset="0.104" stop-color="#a88370"/><stop offset="0.113" stop-color="#b4907c"/><stop offset="0.129" stop-color="#b7947f"/><stop offset="0.316" stop-color="#c1aa97"/><stop offset="0.356" stop-color="#c3ae9c"/><stop offset="0.365" stop-color="#cab49f"/><stop offset="0.396" stop-color="#ccb7a3"/><stop offset="0.509" stop-color="#ccb9a6"/><stop offset="0.518" stop-color="#c4b4a4"/><stop offset="0.598" stop-color="#c2ac9b"/><stop offset="0.721" stop-color="#ba9a86"/><stop offset="0.844" stop-color="#ab8371"/><stop offset="0.908" stop-color="#9c7265"/><stop offset="0.994" stop-color="#81574f"/><stop offset="1" stop-color="#81574f"/></linearGradient>
<linearGradient id="g475" gradientUnits="userSpaceOnUse" x1="641.5" x2="967.5"><stop offset="0" stop-color="#a47b6b"/><stop offset="0.031" stop-color="#a9816f"/><stop offset="0.055" stop-color="#ae8773"/><stop offset="0.058" stop-color="#a47c6a"/><stop offset="0.061" stop-color="#966c5d"/><stop offset="0.064" stop-color="#8b6053"/><stop offset="0.067" stop-color="#84574b"/><stop offset="0.074" stop-color="#7d5045"/><stop offset="0.08" stop-color="#805348"/><stop offset="0.092" stop-color="#92695b"/><stop offset="0.104" stop-color="#aa8572"/><stop offset="0.11" stop-color="#b4907b"/><stop offset="0.141" stop-color="#b79580"/><stop offset="0.298" stop-color="#c0a794"/><stop offset="0.356" stop-color="#c2ad9b"/><stop offset="0.365" stop-color="#c8b29d"/><stop offset="0.383" stop-color="#cbb6a1"/><stop offset="0.485" stop-color="#ccb9a5"/><stop offset="0.509" stop-color="#ccb9a5"/><stop offset="0.518" stop-color="#c4b3a3"/><stop offset="0.607" stop-color="#c1ab99"/><stop offset="0.718" stop-color="#ba9a86"/><stop offset="0.834" stop-color="#ac8572"/><stop offset="0.902" stop-color="#9e7466"/><stop offset="0.982" stop-color="#845a51"/><stop offset="0.994" stop-color="#80574f"/><stop offset="1" stop-color="#80574f"/></linearGradient>
<linearGradient id="g476" gradientUnits="userSpaceOnUse" x1="641.5" x2="967.5"><stop offset="0" stop-color="#a37a6b"/><stop offset="0.058" stop-color="#ae8773"/><stop offset="0.064" stop-color="#996f60"/><stop offset="0.067" stop-color="#906657"/><stop offset="0.074" stop-color="#875b4f"/><stop offset="0.08" stop-color="#875b4f"/><stop offset="0.089" stop-color="#92695a"/><stop offset="0.107" stop-color="#b4907b"/><stop offset="0.255" stop-color="#bea18e"/><stop offset="0.356" stop-color="#c2ac9a"/><stop offset="0.371" stop-color="#c7b09c"/><stop offset="0.38" stop-color="#cab5a0"/><stop offset="0.488" stop-color="#ccb8a4"/><stop offset="0.509" stop-color="#cbb8a4"/><stop offset="0.518" stop-color="#c4b2a2"/><stop offset="0.601" stop-color="#c1ab99"/><stop offset="0.727" stop-color="#b99884"/><stop offset="0.837" stop-color="#ab8371"/><stop offset="0.902" stop-color="#9d7366"/><stop offset="0.994" stop-color="#80564e"/><stop offset="1" stop-color="#80564e"/></linearGradient>
<linearGradient id="g477" gradientUnits="userSpaceOnUse" x1="641.5" x2="967.5"><stop offset="0" stop-color="#a3796a"/><stop offset="0.025" stop-color="#a77e6d"/><stop offset="0.061" stop-color="#ae8773"/><stop offset="0.064" stop-color="#a8816e"/><stop offset="0.071" stop-color="#986e5f"/><stop offset="0.077" stop-color="#926759"/><stop offset="0.083" stop-color="#936a5b"/><stop offset="0.089" stop-color="#9b7262"/><stop offset="0.104" stop-color="#b4907b"/><stop offset="0.285" stop-color="#bfa491"/><stop offset="0.353" stop-color="#c2ac9a"/><stop offset="0.359" stop-color="#c2aa98"/><stop offset="0.371" stop-color="#c5ad99"/><stop offset="0.377" stop-color="#cab49f"/><stop offset="0.469" stop-color="#cbb7a3"/><stop offset="0.506" stop-color="#ccb7a3"/><stop offset="0.518" stop-color="#c3b1a1"/><stop offset="0.604" stop-color="#c1aa98"/><stop offset="0.733" stop-color="#b89782"/><stop offset="0.844" stop-color="#aa8270"/><stop offset="0.905" stop-color="#9c7265"/><stop offset="0.991" stop-color="#7f564e"/><stop offset="1" stop-color="#7f564e"/></linearGradient>
<linearGradient id="g478" gradientUnits="userSpaceOnUse" x1="641.5" x2="967.5"><stop offset="0" stop-color="#a2796a"/><stop offset="0.018" stop-color="#a57c6c"/><stop offset="0.067" stop-color="#ae8874"/><stop offset="0.074" stop-color="#a27a69"/><stop offset="0.08" stop-color="#9f7665"/><stop offset="0.086" stop-color="#a27a69"/><stop offset="0.098" stop-color="#b38e7a"/><stop offset="0.267" stop-color="#bea28e"/><stop offset="0.353" stop-color="#c1ab99"/><stop offset="0.359" stop-color="#c0a896"/><stop offset="0.371" stop-color="#c3aa96"/><stop offset="0.377" stop-color="#c9b29e"/><stop offset="0.454" stop-color="#cab6a2"/><stop offset="0.506" stop-color="#cbb6a2"/><stop offset="0.518" stop-color="#c3b1a0"/><stop offset="0.604" stop-color="#c1a997"/><stop offset="0.745" stop-color="#b69480"/><stop offset="0.84" stop-color="#aa8270"/><stop offset="0.902" stop-color="#9c7265"/><stop offset="0.982" stop-color="#825850"/><stop offset="0.994" stop-color="#7f554d"/><stop offset="1" stop-color="#7f554d"/></linearGradient>
<linearGradient id="g479" gradientUnits="userSpaceOnUse" x1="641.5" x2="967.5"><stop offset="0" stop-color="#a27869"/><stop offset="0.025" stop-color="#a67d6c"/><stop offset="0.077" stop-color="#af8975"/><stop offset="0.083" stop-color="#ae8774"/><stop offset="0.089" stop-color="#b18c77"/><stop offset="0.138" stop-color="#b6937e"/><stop offset="0.322" stop-color="#c0a795"/><stop offset="0.353" stop-color="#c1aa98"/><stop offset="0.365" stop-color="#bfa592"/><stop offset="0.371" stop-color="#c0a693"/><stop offset="0.377" stop-color="#c7b09b"/><stop offset="0.39" stop-color="#c9b29e"/><stop offset="0.451" stop-color="#c9b4a0"/><stop offset="0.494" stop-color="#cbb6a2"/><stop offset="0.512" stop-color="#c6b2a0"/><stop offset="0.518" stop-color="#c3b09f"/><stop offset="0.592" stop-color="#c1aa98"/><stop offset="0.727" stop-color="#b89782"/><stop offset="0.831" stop-color="#ab8371"/><stop offset="0.902" stop-color="#9c7265"/><stop offset="0.991" stop-color="#7e544d"/><stop offset="1" stop-color="#7e544d"/></linearGradient>
<linearGradient id="g480" gradientUnits="userSpaceOnUse" x1="641.5" x2="967.5"><stop offset="0" stop-color="#a17769"/><stop offset="0.101" stop-color="#b38e79"/><stop offset="0.282" stop-color="#bea28f"/><stop offset="0.356" stop-color="#c0a997"/><stop offset="0.362" stop-color="#bda391"/><stop offset="0.368" stop-color="#bca18e"/><stop offset="0.374" stop-color="#bfa692"/><stop offset="0.38" stop-color="#c8b19c"/><stop offset="0.445" stop-color="#c8b29e"/><stop offset="0.494" stop-color="#cab5a1"/><stop offset="0.503" stop-color="#c7b19d"/><stop offset="0.509" stop-color="#c6b19e"/><stop offset="0.525" stop-color="#c2af9e"/><stop offset="0.623" stop-color="#bfa693"/><stop offset="0.764" stop-color="#b4907c"/><stop offset="0.856" stop-color="#a67d6d"/><stop offset="0.911" stop-color="#996e63"/><stop offset="0.991" stop-color="#7d544c"/><stop offset="1" stop-color="#7d544c"/></linearGradient>
<linearGradient id="g481" gradientUnits="userSpaceOnUse" x1="641.5" x2="967.5"><stop offset="0" stop-color="#a07768"/><stop offset="0.018" stop-color="#a37a6a"/><stop offset="0.098" stop-color="#b28d78"/><stop offset="0.245" stop-color="#bc9e8a"/><stop offset="0.356" stop-color="#c1a997"/><stop offset="0.362" stop-color="#bba18f"/><stop offset="0.368" stop-color="#b99e8b"/><stop offset="0.374" stop-color="#bca18e"/><stop offset="0.38" stop-color="#c7b09b"/><stop offset="0.448" stop-color="#c8b19d"/><stop offset="0.491" stop-color="#cab4a0"/><stop offset="0.503" stop-color="#c5af9b"/><stop offset="0.528" stop-color="#c2ae9d"/><stop offset="0.626" stop-color="#bfa592"/><stop offset="0.77" stop-color="#b38e7a"/><stop offset="0.859" stop-color="#a57c6c"/><stop offset="0.908" stop-color="#996f63"/><stop offset="0.991" stop-color="#7d534c"/><stop offset="1" stop-color="#7d534c"/></linearGradient>
<linearGradient id="g482" gradientUnits="userSpaceOnUse" x1="641.5" x2="967.5"><stop offset="0" stop-color="#a07668"/><stop offset="0.018" stop-color="#a2796a"/><stop offset="0.08" stop-color="#af8875"/><stop offset="0.135" stop-color="#b5917c"/><stop offset="0.319" stop-color="#bfa592"/><stop offset="0.356" stop-color="#c0a996"/><stop offset="0.365" stop-color="#b89c8a"/><stop offset="0.371" stop-color="#b69987"/><stop offset="0.374" stop-color="#b89b89"/><stop offset="0.377" stop-color="#bca18e"/><stop offset="0.38" stop-color="#c4ab97"/><stop offset="0.387" stop-color="#c6af9a"/><stop offset="0.451" stop-color="#c7b09c"/><stop offset="0.491" stop-color="#c9b39f"/><stop offset="0.497" stop-color="#c4ac98"/><stop offset="0.509" stop-color="#c2ac99"/><stop offset="0.521" stop-color="#c2ae9c"/><stop offset="0.604" stop-color="#c0a794"/><stop offset="0.758" stop-color="#b4907c"/><stop offset="0.847" stop-color="#a77f6e"/><stop offset="0.908" stop-color="#996e63"/><stop offset="0.991" stop-color="#7c534b"/><stop offset="1" stop-color="#7c534b"/></linearGradient>
<linearGradient id="g483" gradientUnits="userSpaceOnUse" x1="641.5" x2="967.5"><stop offset="0" stop-color="#9f7567"/><stop offset="0.025" stop-color="#a37a6a"/><stop offset="0.095" stop-color="#b18b77"/><stop offset="0.255" stop-color="#bc9e8a"/><stop offset="0.356" stop-color="#c0a896"/><stop offset="0.359" stop-color="#bda592"/><stop offset="0.365" stop-color="#b69a88"/><stop offset="0.371" stop-color="#b29583"/><stop offset="0.374" stop-color="#b39684"/><stop offset="0.377" stop-color="#b79b88"/><stop offset="0.383" stop-color="#c6ad99"/><stop offset="0.445" stop-color="#c6ae9a"/><stop offset="0.488" stop-color="#c8b29e"/><stop offset="0.497" stop-color="#c1a895"/><stop offset="0.509" stop-color="#c0aa97"/><stop offset="0.515" stop-color="#c2ad9c"/><stop offset="0.607" stop-color="#bfa693"/><stop offset="0.736" stop-color="#b6937f"/><stop offset="0.837" stop-color="#a8806f"/><stop offset="0.899" stop-color="#9b7164"/><stop offset="0.979" stop-color="#7f564e"/><stop offset="0.991" stop-color="#7b524a"/><stop offset="1" stop-color="#7b524a"/></linearGradient>
<linearGradient id="g484" gradientUnits="userSpaceOnUse" x1="641.5" x2="967.5"><stop offset="0" stop-color="#9f7467"/><stop offset="0.031" stop-color="#a47b6b"/><stop offset="0.092" stop-color="#b08a76"/><stop offset="0.215" stop-color="#ba9985"/><stop offset="0.356" stop-color="#c0a795"/><stop offset="0.359" stop-color="#bfa794"/><stop offset="0.365" stop-color="#b59886"/><stop offset="0.371" stop-color="#af917f"/><stop offset="0.374" stop-color="#af907e"/><stop offset="0.377" stop-color="#b29482"/><stop offset="0.38" stop-color="#b89c89"/><stop offset="0.383" stop-color="#c2a894"/><stop offset="0.387" stop-color="#c5ac98"/><stop offset="0.445" stop-color="#c5ad99"/><stop offset="0.488" stop-color="#c8b19c"/><stop offset="0.494" stop-color="#bfa692"/><stop offset="0.5" stop-color="#bda390"/><stop offset="0.515" stop-color="#c2ac9b"/><stop offset="0.592" stop-color="#c0a794"/><stop offset="0.733" stop-color="#b6937f"/><stop offset="0.831" stop-color="#a9816f"/><stop offset="0.899" stop-color="#9b7064"/><stop offset="0.979" stop-color="#7f554d"/><stop offset="0.991" stop-color="#7b514a"/><stop offset="1" stop-color="#7b514a"/></linearGradient>
<linearGradient id="g485" gradientUnits="userSpaceOnUse" x1="641.5" x2="967.5"><stop offset="0" stop-color="#9e7466"/><stop offset="0.018" stop-color="#a17768"/><stop offset="0.101" stop-color="#b18b77"/><stop offset="0.248" stop-color="#bb9c88"/><stop offset="0.359" stop-color="#c0a794"/><stop offset="0.368" stop-color="#b09280"/><stop offset="0.374" stop-color="#ab8b7a"/><stop offset="0.377" stop-color="#ac8c7b"/><stop offset="0.38" stop-color="#b19381"/><stop offset="0.387" stop-color="#c4ab96"/><stop offset="0.448" stop-color="#c4ac98"/><stop offset="0.485" stop-color="#c7b09b"/><stop offset="0.494" stop-color="#bba08d"/><stop offset="0.5" stop-color="#bba08d"/><stop offset="0.509" stop-color="#bea795"/><stop offset="0.512" stop-color="#c1ab9a"/><stop offset="0.586" stop-color="#c0a794"/><stop offset="0.73" stop-color="#b6937f"/><stop offset="0.834" stop-color="#a8806f"/><stop offset="0.899" stop-color="#9a7064"/><stop offset="0.985" stop-color="#7c524b"/><stop offset="0.997" stop-color="#7a5149"/><stop offset="1" stop-color="#7a5149"/></linearGradient>
<linearGradient id="g486" gradientUnits="userSpaceOnUse" x1="641.5" x2="967.5"><stop offset="0" stop-color="#9d7366"/><stop offset="0.018" stop-color="#a07668"/><stop offset="0.095" stop-color="#b08a76"/><stop offset="0.252" stop-color="#bb9c88"/><stop offset="0.359" stop-color="#bfa694"/><stop offset="0.362" stop-color="#bda491"/><stop offset="0.368" stop-color="#b09180"/><stop offset="0.374" stop-color="#a88777"/><stop offset="0.377" stop-color="#a78676"/><stop offset="0.38" stop-color="#aa8a79"/><stop offset="0.383" stop-color="#b19281"/><stop offset="0.387" stop-color="#bca08d"/><stop offset="0.39" stop-color="#c3aa95"/><stop offset="0.451" stop-color="#c4ab97"/><stop offset="0.482" stop-color="#c6ae9a"/><stop offset="0.485" stop-color="#c5ad99"/><stop offset="0.488" stop-color="#bda390"/><stop offset="0.491" stop-color="#b89d8a"/><stop offset="0.497" stop-color="#b79a88"/><stop offset="0.506" stop-color="#bca391"/><stop offset="0.512" stop-color="#c1ab99"/><stop offset="0.598" stop-color="#bfa592"/><stop offset="0.745" stop-color="#b4907c"/><stop offset="0.844" stop-color="#a67d6d"/><stop offset="0.902" stop-color="#996e63"/><stop offset="0.991" stop-color="#795049"/><stop offset="1" stop-color="#795049"/></linearGradient>
<linearGradient id="g487" gradientUnits="userSpaceOnUse" x1="641.5" x2="967.5"><stop offset="0" stop-color="#9d7265"/><stop offset="0.018" stop-color="#9f7567"/><stop offset="0.086" stop-color="#ae8774"/><stop offset="0.135" stop-color="#b38f7a"/><stop offset="0.301" stop-color="#bda08d"/><stop offset="0.362" stop-color="#bfa693"/><stop offset="0.371" stop-color="#ab8b7a"/><stop offset="0.377" stop-color="#a38171"/><stop offset="0.38" stop-color="#a48272"/><stop offset="0.383" stop-color="#a88777"/><stop offset="0.387" stop-color="#b19280"/><stop offset="0.39" stop-color="#bda28f"/><stop offset="0.393" stop-color="#c2a894"/><stop offset="0.454" stop-color="#c3aa96"/><stop offset="0.482" stop-color="#c5ad99"/><stop offset="0.488" stop-color="#b69a88"/><stop offset="0.494" stop-color="#b29583"/><stop offset="0.503" stop-color="#b89e8c"/><stop offset="0.509" stop-color="#c0a997"/><stop offset="0.54" stop-color="#c0a997"/><stop offset="0.65" stop-color="#bc9e8a"/><stop offset="0.794" stop-color="#ae8774"/><stop offset="0.893" stop-color="#9b7165"/><stop offset="0.979" stop-color="#7d534c"/><stop offset="0.991" stop-color="#795048"/><stop offset="1" stop-color="#795048"/></linearGradient>
<linearGradient id="g488" gradientUnits="userSpaceOnUse" x1="641.5" x2="966.5"><stop offset="0" stop-color="#9c7265"/><stop offset="0.025" stop-color="#a07668"/><stop offset="0.102" stop-color="#b08a76"/><stop offset="0.265" stop-color="#bb9c88"/><stop offset="0.363" stop-color="#bfa592"/><stop offset="0.366" stop-color="#bda390"/><stop offset="0.372" stop-color="#ac8c7b"/><stop offset="0.378" stop-color="#a17e6f"/><stop offset="0.382" stop-color="#9f7c6c"/><stop offset="0.385" stop-color="#a17e6e"/><stop offset="0.388" stop-color="#a68575"/><stop offset="0.391" stop-color="#b0917f"/><stop offset="0.394" stop-color="#bea38f"/><stop offset="0.397" stop-color="#c1a793"/><stop offset="0.458" stop-color="#c3a995"/><stop offset="0.48" stop-color="#c4ac97"/><stop offset="0.486" stop-color="#b49785"/><stop offset="0.489" stop-color="#b09180"/><stop offset="0.492" stop-color="#ae8f7e"/><stop offset="0.498" stop-color="#b29483"/><stop offset="0.511" stop-color="#c1aa98"/><stop offset="0.603" stop-color="#bea390"/><stop offset="0.732" stop-color="#b5927d"/><stop offset="0.825" stop-color="#a9816f"/><stop offset="0.902" stop-color="#996e63"/><stop offset="0.985" stop-color="#7b514a"/><stop offset="0.997" stop-color="#784f48"/><stop offset="1" stop-color="#784f48"/></linearGradient>
<linearGradient id="g489" gradientUnits="userSpaceOnUse" x1="641.5" x2="966.5"><stop offset="0" stop-color="#9b7165"/><stop offset="0.018" stop-color="#9e7466"/><stop offset="0.108" stop-color="#b18b77"/><stop offset="0.317" stop-color="#bda18d"/><stop offset="0.366" stop-color="#bfa592"/><stop offset="0.372" stop-color="#af907f"/><stop offset="0.378" stop-color="#a07d6e"/><stop offset="0.385" stop-color="#9b7667"/><stop offset="0.388" stop-color="#9d796a"/><stop offset="0.391" stop-color="#a48272"/><stop offset="0.394" stop-color="#ae8f7d"/><stop offset="0.397" stop-color="#bca18d"/><stop offset="0.4" stop-color="#c0a692"/><stop offset="0.458" stop-color="#c2a894"/><stop offset="0.477" stop-color="#c3aa96"/><stop offset="0.483" stop-color="#b19382"/><stop offset="0.489" stop-color="#aa8a79"/><stop offset="0.495" stop-color="#ad8e7d"/><stop offset="0.505" stop-color="#baa08f"/><stop offset="0.508" stop-color="#c0a997"/><stop offset="0.597" stop-color="#bea390"/><stop offset="0.729" stop-color="#b5927d"/><stop offset="0.834" stop-color="#a77f6e"/><stop offset="0.898" stop-color="#996f63"/><stop offset="0.975" stop-color="#7e544c"/><stop offset="0.994" stop-color="#774e47"/><stop offset="1" stop-color="#774e47"/></linearGradient>
<linearGradient id="g490" gradientUnits="userSpaceOnUse" x1="642.5" x2="966.5"><stop offset="0" stop-color="#9b7064"/><stop offset="0.019" stop-color="#9e7466"/><stop offset="0.096" stop-color="#af8874"/><stop offset="0.201" stop-color="#b79580"/><stop offset="0.361" stop-color="#bea491"/><stop offset="0.367" stop-color="#bfa491"/><stop offset="0.373" stop-color="#aa8a7a"/><stop offset="0.38" stop-color="#9c7769"/><stop offset="0.383" stop-color="#987264"/><stop offset="0.386" stop-color="#967163"/><stop offset="0.389" stop-color="#997466"/><stop offset="0.392" stop-color="#a07d6d"/><stop offset="0.395" stop-color="#aa8a79"/><stop offset="0.398" stop-color="#b89b88"/><stop offset="0.401" stop-color="#c0a590"/><stop offset="0.46" stop-color="#c1a793"/><stop offset="0.472" stop-color="#c1a793"/><stop offset="0.475" stop-color="#b69986"/><stop offset="0.478" stop-color="#ad8e7d"/><stop offset="0.481" stop-color="#a88777"/><stop offset="0.485" stop-color="#a58474"/><stop offset="0.491" stop-color="#a98878"/><stop offset="0.497" stop-color="#b19483"/><stop offset="0.503" stop-color="#bda593"/><stop offset="0.509" stop-color="#c0a896"/><stop offset="0.593" stop-color="#bea38f"/><stop offset="0.735" stop-color="#b4907c"/><stop offset="0.833" stop-color="#a77e6d"/><stop offset="0.901" stop-color="#986d62"/><stop offset="0.994" stop-color="#774e47"/><stop offset="1" stop-color="#774e47"/></linearGradient>
<linearGradient id="g491" gradientUnits="userSpaceOnUse" x1="642.5" x2="966.5"><stop offset="0" stop-color="#9a6f64"/><stop offset="0.025" stop-color="#9f7567"/><stop offset="0.105" stop-color="#b08a76"/><stop offset="0.302" stop-color="#bc9e8a"/><stop offset="0.367" stop-color="#bea490"/><stop offset="0.37" stop-color="#bca18e"/><stop offset="0.377" stop-color="#a68575"/><stop offset="0.383" stop-color="#977264"/><stop offset="0.386" stop-color="#936d5f"/><stop offset="0.389" stop-color="#926b5e"/><stop offset="0.392" stop-color="#956f61"/><stop offset="0.395" stop-color="#9b7768"/><stop offset="0.398" stop-color="#a58372"/><stop offset="0.404" stop-color="#bfa38f"/><stop offset="0.466" stop-color="#c1a792"/><stop offset="0.469" stop-color="#bb9f8b"/><stop offset="0.472" stop-color="#b09180"/><stop offset="0.478" stop-color="#a38171"/><stop offset="0.481" stop-color="#a17e6e"/><stop offset="0.488" stop-color="#a48272"/><stop offset="0.494" stop-color="#ad8f7e"/><stop offset="0.5" stop-color="#bba18f"/><stop offset="0.503" stop-color="#c0a895"/><stop offset="0.593" stop-color="#bda28f"/><stop offset="0.71" stop-color="#b6937f"/><stop offset="0.812" stop-color="#aa8270"/><stop offset="0.895" stop-color="#996f63"/><stop offset="0.969" stop-color="#7f554d"/><stop offset="0.994" stop-color="#764d46"/><stop offset="1" stop-color="#764d46"/></linearGradient>
<linearGradient id="g492" gradientUnits="userSpaceOnUse" x1="642.5" x2="966.5"><stop offset="0" stop-color="#996f63"/><stop offset="0.019" stop-color="#9c7265"/><stop offset="0.096" stop-color="#ae8774"/><stop offset="0.201" stop-color="#b7947f"/><stop offset="0.37" stop-color="#bea390"/><stop offset="0.373" stop-color="#b99d8b"/><stop offset="0.38" stop-color="#a38171"/><stop offset="0.386" stop-color="#946d5f"/><stop offset="0.389" stop-color="#8f675a"/><stop offset="0.395" stop-color="#8f685b"/><stop offset="0.401" stop-color="#9d796a"/><stop offset="0.41" stop-color="#bea28e"/><stop offset="0.46" stop-color="#c0a591"/><stop offset="0.463" stop-color="#bca08c"/><stop offset="0.469" stop-color="#a88777"/><stop offset="0.475" stop-color="#9d796a"/><stop offset="0.478" stop-color="#9b7768"/><stop offset="0.481" stop-color="#9c786a"/><stop offset="0.488" stop-color="#a48373"/><stop offset="0.494" stop-color="#b19482"/><stop offset="0.5" stop-color="#bfa794"/><stop offset="0.586" stop-color="#bda28f"/><stop offset="0.707" stop-color="#b6937f"/><stop offset="0.809" stop-color="#aa8270"/><stop offset="0.898" stop-color="#986d62"/><stop offset="0.978" stop-color="#7a5149"/><stop offset="0.991" stop-color="#754d46"/><stop offset="1" stop-color="#754d46"/></linearGradient>
<linearGradient id="g493" gradientUnits="userSpaceOnUse" x1="642.5" x2="966.5"><stop offset="0" stop-color="#996e63"/><stop offset="0.025" stop-color="#9d7366"/><stop offset="0.102" stop-color="#af8874"/><stop offset="0.293" stop-color="#bb9c88"/><stop offset="0.373" stop-color="#bea38f"/><stop offset="0.377" stop-color="#b79b88"/><stop offset="0.383" stop-color="#a17e6e"/><stop offset="0.389" stop-color="#90695c"/><stop offset="0.392" stop-color="#8c6356"/><stop offset="0.395" stop-color="#896054"/><stop offset="0.398" stop-color="#8a6155"/><stop offset="0.404" stop-color="#946d60"/><stop offset="0.41" stop-color="#a58373"/><stop offset="0.417" stop-color="#bb9e8a"/><stop offset="0.423" stop-color="#bda18d"/><stop offset="0.454" stop-color="#bea38f"/><stop offset="0.466" stop-color="#9f7b6c"/><stop offset="0.472" stop-color="#977163"/><stop offset="0.475" stop-color="#967062"/><stop offset="0.481" stop-color="#9c7769"/><stop offset="0.488" stop-color="#a78776"/><stop offset="0.497" stop-color="#bfa693"/><stop offset="0.577" stop-color="#bda28f"/><stop offset="0.701" stop-color="#b6947f"/><stop offset="0.806" stop-color="#aa8270"/><stop offset="0.892" stop-color="#996f63"/><stop offset="0.963" stop-color="#80564e"/><stop offset="0.991" stop-color="#754c45"/><stop offset="1" stop-color="#754c45"/></linearGradient>
<linearGradient id="g494" gradientUnits="userSpaceOnUse" x1="642.5" x2="966.5"><stop offset="0" stop-color="#986d62"/><stop offset="0.019" stop-color="#9b7064"/><stop offset="0.099" stop-color="#ae8773"/><stop offset="0.262" stop-color="#b99984"/><stop offset="0.377" stop-color="#bea28f"/><stop offset="0.38" stop-color="#b79a87"/><stop offset="0.386" stop-color="#9f7c6d"/><stop offset="0.392" stop-color="#8f675a"/><stop offset="0.395" stop-color="#896053"/><stop offset="0.398" stop-color="#865b50"/><stop offset="0.401" stop-color="#855a4f"/><stop offset="0.407" stop-color="#8a6155"/><stop offset="0.42" stop-color="#a58272"/><stop offset="0.426" stop-color="#b19280"/><stop offset="0.432" stop-color="#b99c89"/><stop offset="0.438" stop-color="#ba9d8a"/><stop offset="0.444" stop-color="#b49684"/><stop offset="0.46" stop-color="#997466"/><stop offset="0.466" stop-color="#926b5d"/><stop offset="0.472" stop-color="#916a5d"/><stop offset="0.478" stop-color="#987365"/><stop offset="0.485" stop-color="#a58474"/><stop offset="0.494" stop-color="#bfa693"/><stop offset="0.59" stop-color="#bda08d"/><stop offset="0.688" stop-color="#b79581"/><stop offset="0.809" stop-color="#a9816f"/><stop offset="0.898" stop-color="#976c61"/><stop offset="0.985" stop-color="#764d46"/><stop offset="1" stop-color="#744b45"/></linearGradient>
<linearGradient id="g495" gradientUnits="userSpaceOnUse" x1="642.5" x2="966.5"><stop offset="0" stop-color="#976d62"/><stop offset="0.019" stop-color="#9a7064"/><stop offset="0.102" stop-color="#ae8773"/><stop offset="0.269" stop-color="#b99984"/><stop offset="0.38" stop-color="#bda28e"/><stop offset="0.383" stop-color="#b89b88"/><stop offset="0.389" stop-color="#a07d6d"/><stop offset="0.395" stop-color="#8e6659"/><stop offset="0.401" stop-color="#83594d"/><stop offset="0.407" stop-color="#80554a"/><stop offset="0.414" stop-color="#855a4f"/><stop offset="0.426" stop-color="#956e61"/><stop offset="0.435" stop-color="#9b7768"/><stop offset="0.444" stop-color="#987365"/><stop offset="0.46" stop-color="#8b6256"/><stop offset="0.466" stop-color="#8b6256"/><stop offset="0.472" stop-color="#916a5d"/><stop offset="0.478" stop-color="#9d796a"/><stop offset="0.491" stop-color="#bea592"/><stop offset="0.583" stop-color="#bda08d"/><stop offset="0.701" stop-color="#b5937e"/><stop offset="0.809" stop-color="#a9816f"/><stop offset="0.895" stop-color="#976c61"/><stop offset="0.969" stop-color="#7c524b"/><stop offset="0.991" stop-color="#744b44"/><stop offset="1" stop-color="#744b44"/></linearGradient>
<linearGradient id="g496" gradientUnits="userSpaceOnUse" x1="642.5" x2="965.5"><stop offset="0" stop-color="#976c61"/><stop offset="0.019" stop-color="#996f63"/><stop offset="0.099" stop-color="#ad8572"/><stop offset="0.136" stop-color="#b18b77"/><stop offset="0.325" stop-color="#bb9d89"/><stop offset="0.384" stop-color="#bda18e"/><stop offset="0.387" stop-color="#bb9f8c"/><stop offset="0.393" stop-color="#a38070"/><stop offset="0.399" stop-color="#90685b"/><stop offset="0.406" stop-color="#83584d"/><stop offset="0.412" stop-color="#7d5147"/><stop offset="0.418" stop-color="#7d5046"/><stop offset="0.433" stop-color="#855a4f"/><stop offset="0.446" stop-color="#855b4f"/><stop offset="0.458" stop-color="#84594e"/><stop offset="0.464" stop-color="#875e52"/><stop offset="0.471" stop-color="#90695c"/><stop offset="0.477" stop-color="#9d7a6b"/><stop offset="0.483" stop-color="#ae907f"/><stop offset="0.486" stop-color="#b89d8a"/><stop offset="0.489" stop-color="#bea491"/><stop offset="0.576" stop-color="#bda08d"/><stop offset="0.69" stop-color="#b6947f"/><stop offset="0.808" stop-color="#a9816f"/><stop offset="0.901" stop-color="#966b60"/><stop offset="0.994" stop-color="#734a44"/><stop offset="1" stop-color="#734a44"/></linearGradient>
<linearGradient id="g497" gradientUnits="userSpaceOnUse" x1="643.5" x2="965.5"><stop offset="0" stop-color="#966b61"/><stop offset="0.025" stop-color="#9b7164"/><stop offset="0.106" stop-color="#ae8774"/><stop offset="0.283" stop-color="#b99985"/><stop offset="0.388" stop-color="#bda18d"/><stop offset="0.394" stop-color="#a78676"/><stop offset="0.401" stop-color="#946e60"/><stop offset="0.407" stop-color="#865c51"/><stop offset="0.413" stop-color="#7e5247"/><stop offset="0.422" stop-color="#794c42"/><stop offset="0.447" stop-color="#7d5147"/><stop offset="0.457" stop-color="#84594e"/><stop offset="0.463" stop-color="#8c6457"/><stop offset="0.469" stop-color="#987365"/><stop offset="0.478" stop-color="#b29482"/><stop offset="0.481" stop-color="#bca28f"/><stop offset="0.494" stop-color="#bea390"/><stop offset="0.575" stop-color="#bca08c"/><stop offset="0.711" stop-color="#b4907c"/><stop offset="0.807" stop-color="#a8806f"/><stop offset="0.894" stop-color="#976c61"/><stop offset="0.969" stop-color="#7b524b"/><stop offset="0.994" stop-color="#724943"/><stop offset="1" stop-color="#724943"/></linearGradient>
<linearGradient id="g498" gradientUnits="userSpaceOnUse" x1="643.5" x2="965.5"><stop offset="0" stop-color="#966b60"/><stop offset="0.019" stop-color="#996e63"/><stop offset="0.102" stop-color="#ad8673"/><stop offset="0.267" stop-color="#b89783"/><stop offset="0.391" stop-color="#bda08d"/><stop offset="0.394" stop-color="#bb9f8c"/><stop offset="0.401" stop-color="#a58372"/><stop offset="0.407" stop-color="#946d60"/><stop offset="0.413" stop-color="#885e52"/><stop offset="0.419" stop-color="#805449"/><stop offset="0.429" stop-color="#7b4e44"/><stop offset="0.441" stop-color="#7d5046"/><stop offset="0.45" stop-color="#83594d"/><stop offset="0.46" stop-color="#91695c"/><stop offset="0.469" stop-color="#a68474"/><stop offset="0.475" stop-color="#b89c89"/><stop offset="0.478" stop-color="#bea38f"/><stop offset="0.568" stop-color="#bc9f8c"/><stop offset="0.68" stop-color="#b6947f"/><stop offset="0.795" stop-color="#aa8270"/><stop offset="0.898" stop-color="#966b60"/><stop offset="0.984" stop-color="#744b44"/><stop offset="0.997" stop-color="#724942"/><stop offset="1" stop-color="#724942"/></linearGradient>
<linearGradient id="g499" gradientUnits="userSpaceOnUse" x1="643.5" x2="965.5"><stop offset="0" stop-color="#956a60"/><stop offset="0.019" stop-color="#986d62"/><stop offset="0.106" stop-color="#ad8673"/><stop offset="0.255" stop-color="#b79681"/><stop offset="0.398" stop-color="#bca08c"/><stop offset="0.401" stop-color="#bb9e8b"/><stop offset="0.407" stop-color="#a78575"/><stop offset="0.413" stop-color="#987364"/><stop offset="0.419" stop-color="#8e6659"/><stop offset="0.425" stop-color="#885e52"/><stop offset="0.435" stop-color="#855b4f"/><stop offset="0.441" stop-color="#875d51"/><stop offset="0.45" stop-color="#90685b"/><stop offset="0.457" stop-color="#997566"/><stop offset="0.463" stop-color="#a78575"/><stop offset="0.469" stop-color="#b89b88"/><stop offset="0.472" stop-color="#bda28f"/><stop offset="0.571" stop-color="#bc9f8b"/><stop offset="0.714" stop-color="#b38f7a"/><stop offset="0.811" stop-color="#a77e6d"/><stop offset="0.898" stop-color="#956a60"/><stop offset="0.969" stop-color="#7a5149"/><stop offset="0.991" stop-color="#714842"/><stop offset="1" stop-color="#714842"/></linearGradient>
<linearGradient id="g500" gradientUnits="userSpaceOnUse" x1="643.5" x2="965.5"><stop offset="0" stop-color="#94695f"/><stop offset="0.025" stop-color="#996e63"/><stop offset="0.109" stop-color="#ad8673"/><stop offset="0.28" stop-color="#b89783"/><stop offset="0.407" stop-color="#bca08c"/><stop offset="0.419" stop-color="#a27f6f"/><stop offset="0.429" stop-color="#987364"/><stop offset="0.438" stop-color="#977163"/><stop offset="0.447" stop-color="#9e7a6b"/><stop offset="0.457" stop-color="#ad8d7c"/><stop offset="0.463" stop-color="#bca08d"/><stop offset="0.528" stop-color="#bca08d"/><stop offset="0.63" stop-color="#b99984"/><stop offset="0.767" stop-color="#ad8673"/><stop offset="0.876" stop-color="#9a7064"/><stop offset="0.901" stop-color="#93685e"/><stop offset="0.978" stop-color="#754c45"/><stop offset="0.994" stop-color="#704741"/><stop offset="1" stop-color="#704741"/></linearGradient>
<linearGradient id="g501" gradientUnits="userSpaceOnUse" x1="643.5" x2="965.5"><stop offset="0" stop-color="#94695e"/><stop offset="0.025" stop-color="#986d62"/><stop offset="0.112" stop-color="#ad8673"/><stop offset="0.289" stop-color="#b89783"/><stop offset="0.413" stop-color="#bc9f8b"/><stop offset="0.419" stop-color="#bc9f8c"/><stop offset="0.425" stop-color="#b39482"/><stop offset="0.432" stop-color="#ae8f7d"/><stop offset="0.438" stop-color="#ae8f7d"/><stop offset="0.444" stop-color="#b29481"/><stop offset="0.45" stop-color="#ba9e8a"/><stop offset="0.457" stop-color="#bca08d"/><stop offset="0.55" stop-color="#bc9f8b"/><stop offset="0.68" stop-color="#b5927e"/><stop offset="0.786" stop-color="#aa8270"/><stop offset="0.891" stop-color="#966b60"/><stop offset="0.963" stop-color="#7b524a"/><stop offset="0.991" stop-color="#704741"/><stop offset="1" stop-color="#704741"/></linearGradient>
<linearGradient id="g502" gradientUnits="userSpaceOnUse" x1="643.5" x2="964.5"><stop offset="0" stop-color="#93685e"/><stop offset="0.019" stop-color="#966b60"/><stop offset="0.112" stop-color="#ad8572"/><stop offset="0.283" stop-color="#b89682"/><stop offset="0.43" stop-color="#bc9f8b"/><stop offset="0.536" stop-color="#bc9f8b"/><stop offset="0.66" stop-color="#b69480"/><stop offset="0.769" stop-color="#ac8572"/><stop offset="0.879" stop-color="#996e63"/><stop offset="0.903" stop-color="#92675d"/><stop offset="0.978" stop-color="#744c45"/><stop offset="0.994" stop-color="#6f4640"/><stop offset="1" stop-color="#6f4640"/></linearGradient>
<linearGradient id="g503" gradientUnits="userSpaceOnUse" x1="644.5" x2="964.5"><stop offset="0" stop-color="#92675d"/><stop offset="0.037" stop-color="#9b7064"/><stop offset="0.109" stop-color="#ac8572"/><stop offset="0.281" stop-color="#b79681"/><stop offset="0.422" stop-color="#bb9e8a"/><stop offset="0.541" stop-color="#bb9e8a"/><stop offset="0.666" stop-color="#b5937f"/><stop offset="0.781" stop-color="#aa8270"/><stop offset="0.891" stop-color="#966b60"/><stop offset="0.969" stop-color="#784f48"/><stop offset="0.994" stop-color="#6e4640"/><stop offset="1" stop-color="#6e4640"/></linearGradient>
<linearGradient id="g504" gradientUnits="userSpaceOnUse" x1="644.5" x2="964.5"><stop offset="0" stop-color="#92675d"/><stop offset="0.019" stop-color="#956a60"/><stop offset="0.109" stop-color="#ac8471"/><stop offset="0.272" stop-color="#b69480"/><stop offset="0.412" stop-color="#bb9d89"/><stop offset="0.547" stop-color="#bb9d89"/><stop offset="0.678" stop-color="#b4917c"/><stop offset="0.784" stop-color="#a9816f"/><stop offset="0.891" stop-color="#956a60"/><stop offset="0.969" stop-color="#774e47"/><stop offset="0.991" stop-color="#6e453f"/><stop offset="1" stop-color="#6e453f"/></linearGradient>
<linearGradient id="g505" gradientUnits="userSpaceOnUse" x1="644.5" x2="964.5"><stop offset="0" stop-color="#91665c"/><stop offset="0.019" stop-color="#94695f"/><stop offset="0.109" stop-color="#ab8371"/><stop offset="0.253" stop-color="#b5927e"/><stop offset="0.406" stop-color="#ba9c88"/><stop offset="0.506" stop-color="#bb9d89"/><stop offset="0.603" stop-color="#b89884"/><stop offset="0.734" stop-color="#af8975"/><stop offset="0.866" stop-color="#9a7064"/><stop offset="0.894" stop-color="#94695e"/><stop offset="0.978" stop-color="#724943"/><stop offset="0.991" stop-color="#6d443f"/><stop offset="1" stop-color="#6d443f"/></linearGradient>
<linearGradient id="g506" gradientUnits="userSpaceOnUse" x1="644.5" x2="964.5"><stop offset="0" stop-color="#90655c"/><stop offset="0.019" stop-color="#93685e"/><stop offset="0.109" stop-color="#ab8370"/><stop offset="0.266" stop-color="#b5937e"/><stop offset="0.406" stop-color="#ba9b87"/><stop offset="0.509" stop-color="#ba9d89"/><stop offset="0.622" stop-color="#b79681"/><stop offset="0.747" stop-color="#ad8673"/><stop offset="0.866" stop-color="#9a6f63"/><stop offset="0.9" stop-color="#91665c"/><stop offset="0.972" stop-color="#744b44"/><stop offset="0.991" stop-color="#6c443e"/><stop offset="1" stop-color="#6c443e"/></linearGradient>
<linearGradient id="g507" gradientUnits="userSpaceOnUse" x1="644.5" x2="963.5"><stop offset="0" stop-color="#90655b"/><stop offset="0.025" stop-color="#94695f"/><stop offset="0.113" stop-color="#ab8370"/><stop offset="0.295" stop-color="#b69480"/><stop offset="0.426" stop-color="#ba9b87"/><stop offset="0.542" stop-color="#ba9b87"/><stop offset="0.665" stop-color="#b4917d"/><stop offset="0.777" stop-color="#a9816f"/><stop offset="0.89" stop-color="#94695f"/><stop offset="0.959" stop-color="#7a5149"/><stop offset="0.991" stop-color="#6c433e"/><stop offset="1" stop-color="#6c433e"/></linearGradient>
<linearGradient id="g508" gradientUnits="userSpaceOnUse" x1="645.5" x2="963.5"><stop offset="0" stop-color="#8f645b"/><stop offset="0.025" stop-color="#94695f"/><stop offset="0.11" stop-color="#aa8270"/><stop offset="0.255" stop-color="#b4917c"/><stop offset="0.412" stop-color="#b99a86"/><stop offset="0.547" stop-color="#b99a86"/><stop offset="0.667" stop-color="#b3907c"/><stop offset="0.767" stop-color="#aa8270"/><stop offset="0.89" stop-color="#94695f"/><stop offset="0.969" stop-color="#754c45"/><stop offset="0.991" stop-color="#6b423d"/><stop offset="1" stop-color="#6b423d"/></linearGradient>
<linearGradient id="g509" gradientUnits="userSpaceOnUse" x1="645.5" x2="963.5"><stop offset="0" stop-color="#8e635a"/><stop offset="0.038" stop-color="#976c61"/><stop offset="0.113" stop-color="#aa8270"/><stop offset="0.264" stop-color="#b4917c"/><stop offset="0.409" stop-color="#b99985"/><stop offset="0.5" stop-color="#b99b86"/><stop offset="0.582" stop-color="#b89783"/><stop offset="0.695" stop-color="#b18c78"/><stop offset="0.796" stop-color="#a57c6c"/><stop offset="0.89" stop-color="#93685e"/><stop offset="0.962" stop-color="#774e47"/><stop offset="0.991" stop-color="#6a423c"/><stop offset="1" stop-color="#6a423c"/></linearGradient>
<linearGradient id="g510" gradientUnits="userSpaceOnUse" x1="645.5" x2="963.5"><stop offset="0" stop-color="#8e635a"/><stop offset="0.019" stop-color="#91665c"/><stop offset="0.116" stop-color="#aa8270"/><stop offset="0.274" stop-color="#b4917c"/><stop offset="0.406" stop-color="#b89984"/><stop offset="0.506" stop-color="#b99a86"/><stop offset="0.626" stop-color="#b5937e"/><stop offset="0.742" stop-color="#ac8572"/><stop offset="0.871" stop-color="#976c61"/><stop offset="0.896" stop-color="#90655c"/><stop offset="0.962" stop-color="#764d46"/><stop offset="0.987" stop-color="#6a413c"/><stop offset="1" stop-color="#6a413c"/></linearGradient>
<linearGradient id="g511" gradientUnits="userSpaceOnUse" x1="645.5" x2="962.5"><stop offset="0" stop-color="#8d6259"/><stop offset="0.019" stop-color="#90655b"/><stop offset="0.107" stop-color="#a87f6e"/><stop offset="0.202" stop-color="#b08a76"/><stop offset="0.366" stop-color="#b79682"/><stop offset="0.492" stop-color="#b99985"/><stop offset="0.584" stop-color="#b79681"/><stop offset="0.716" stop-color="#ae8875"/><stop offset="0.811" stop-color="#a2786a"/><stop offset="0.896" stop-color="#91665c"/><stop offset="0.972" stop-color="#724943"/><stop offset="0.991" stop-color="#69403b"/><stop offset="1" stop-color="#69403b"/></linearGradient>
<linearGradient id="g512" gradientUnits="userSpaceOnUse" x1="646.5" x2="962.5"><stop offset="0" stop-color="#8c6158"/><stop offset="0.025" stop-color="#92675d"/><stop offset="0.114" stop-color="#a9806f"/><stop offset="0.228" stop-color="#b18c78"/><stop offset="0.383" stop-color="#b79682"/><stop offset="0.509" stop-color="#b89884"/><stop offset="0.614" stop-color="#b5937e"/><stop offset="0.741" stop-color="#ab8471"/><stop offset="0.87" stop-color="#976c61"/><stop offset="0.921" stop-color="#875c54"/><stop offset="0.981" stop-color="#6c443e"/><stop offset="0.994" stop-color="#68403b"/><stop offset="1" stop-color="#68403b"/></linearGradient>
<linearGradient id="g513" gradientUnits="userSpaceOnUse" x1="646.5" x2="962.5"><stop offset="0" stop-color="#8b6158"/><stop offset="0.019" stop-color="#8f645b"/><stop offset="0.117" stop-color="#a9806f"/><stop offset="0.259" stop-color="#b28e7a"/><stop offset="0.418" stop-color="#b79783"/><stop offset="0.532" stop-color="#b79783"/><stop offset="0.649" stop-color="#b38f7b"/><stop offset="0.763" stop-color="#a8806e"/><stop offset="0.886" stop-color="#93685e"/><stop offset="0.965" stop-color="#734a43"/><stop offset="0.991" stop-color="#683f3a"/><stop offset="1" stop-color="#683f3a"/></linearGradient>
<linearGradient id="g514" gradientUnits="userSpaceOnUse" x1="646.5" x2="962.5"><stop offset="0" stop-color="#8b6057"/><stop offset="0.019" stop-color="#8e635a"/><stop offset="0.114" stop-color="#a87f6e"/><stop offset="0.244" stop-color="#b18c78"/><stop offset="0.392" stop-color="#b79581"/><stop offset="0.506" stop-color="#b79783"/><stop offset="0.62" stop-color="#b4917d"/><stop offset="0.737" stop-color="#ab8371"/><stop offset="0.867" stop-color="#966b61"/><stop offset="0.896" stop-color="#8f645a"/><stop offset="0.965" stop-color="#724943"/><stop offset="0.991" stop-color="#673e3a"/><stop offset="1" stop-color="#673e3a"/></linearGradient>
<linearGradient id="g515" gradientUnits="userSpaceOnUse" x1="647.5" x2="961.5"><stop offset="0" stop-color="#8a5f57"/><stop offset="0.019" stop-color="#8e635a"/><stop offset="0.115" stop-color="#a87f6e"/><stop offset="0.261" stop-color="#b28d79"/><stop offset="0.414" stop-color="#b79581"/><stop offset="0.548" stop-color="#b69581"/><stop offset="0.675" stop-color="#b08b77"/><stop offset="0.787" stop-color="#a47a6b"/><stop offset="0.889" stop-color="#91665d"/><stop offset="0.962" stop-color="#744b44"/><stop offset="0.99" stop-color="#663e39"/><stop offset="1" stop-color="#663e39"/></linearGradient>
<linearGradient id="g516" gradientUnits="userSpaceOnUse" x1="647.5" x2="961.5"><stop offset="0" stop-color="#895f56"/><stop offset="0.019" stop-color="#8d6259"/><stop offset="0.115" stop-color="#a77e6d"/><stop offset="0.245" stop-color="#b18b77"/><stop offset="0.398" stop-color="#b69480"/><stop offset="0.519" stop-color="#b69581"/><stop offset="0.631" stop-color="#b28f7a"/><stop offset="0.739" stop-color="#aa8270"/><stop offset="0.869" stop-color="#956a60"/><stop offset="0.895" stop-color="#8e635a"/><stop offset="0.962" stop-color="#734a43"/><stop offset="0.99" stop-color="#663d39"/><stop offset="1" stop-color="#663d39"/></linearGradient>
<linearGradient id="g517" gradientUnits="userSpaceOnUse" x1="647.5" x2="961.5"><stop offset="0" stop-color="#895e55"/><stop offset="0.019" stop-color="#8c6158"/><stop offset="0.115" stop-color="#a67e6d"/><stop offset="0.229" stop-color="#af8976"/><stop offset="0.389" stop-color="#b5937f"/><stop offset="0.513" stop-color="#b69580"/><stop offset="0.621" stop-color="#b38f7b"/><stop offset="0.742" stop-color="#a9816f"/><stop offset="0.882" stop-color="#92675d"/><stop offset="0.955" stop-color="#754c45"/><stop offset="0.99" stop-color="#653c38"/><stop offset="1" stop-color="#653c38"/></linearGradient>
<linearGradient id="g518" gradientUnits="userSpaceOnUse" x1="647.5" x2="960.5"><stop offset="0" stop-color="#885d55"/><stop offset="0.019" stop-color="#8b6057"/><stop offset="0.096" stop-color="#a17769"/><stop offset="0.128" stop-color="#a77f6e"/><stop offset="0.256" stop-color="#b08b77"/><stop offset="0.415" stop-color="#b5937f"/><stop offset="0.546" stop-color="#b5937f"/><stop offset="0.681" stop-color="#ae8975"/><stop offset="0.77" stop-color="#a57c6c"/><stop offset="0.885" stop-color="#91665d"/><stop offset="0.949" stop-color="#784f48"/><stop offset="0.99" stop-color="#643c37"/><stop offset="1" stop-color="#643c37"/></linearGradient>
<linearGradient id="g519" gradientUnits="userSpaceOnUse" x1="648.5" x2="960.5"><stop offset="0" stop-color="#875d54"/><stop offset="0.026" stop-color="#8d6259"/><stop offset="0.119" stop-color="#a67d6d"/><stop offset="0.263" stop-color="#b08b77"/><stop offset="0.433" stop-color="#b5937f"/><stop offset="0.558" stop-color="#b4927d"/><stop offset="0.686" stop-color="#ae8774"/><stop offset="0.804" stop-color="#9f7567"/><stop offset="0.885" stop-color="#91665c"/><stop offset="0.965" stop-color="#704741"/><stop offset="0.99" stop-color="#643b37"/><stop offset="1" stop-color="#643b37"/></linearGradient>
<linearGradient id="g520" gradientUnits="userSpaceOnUse" x1="648.5" x2="960.5"><stop offset="0" stop-color="#865c54"/><stop offset="0.026" stop-color="#8c6158"/><stop offset="0.115" stop-color="#a57c6c"/><stop offset="0.25" stop-color="#af8976"/><stop offset="0.394" stop-color="#b4917d"/><stop offset="0.506" stop-color="#b5937e"/><stop offset="0.625" stop-color="#b18d79"/><stop offset="0.737" stop-color="#a8806e"/><stop offset="0.865" stop-color="#94695f"/><stop offset="0.891" stop-color="#8d6359"/><stop offset="0.949" stop-color="#764d46"/><stop offset="0.99" stop-color="#633a36"/><stop offset="1" stop-color="#633a36"/></linearGradient>
<linearGradient id="g521" gradientUnits="userSpaceOnUse" x1="648.5" x2="959.5"><stop offset="0" stop-color="#865b53"/><stop offset="0.019" stop-color="#895e56"/><stop offset="0.119" stop-color="#a57c6c"/><stop offset="0.273" stop-color="#b08a76"/><stop offset="0.421" stop-color="#b4917d"/><stop offset="0.547" stop-color="#b4917d"/><stop offset="0.682" stop-color="#ad8773"/><stop offset="0.794" stop-color="#a07668"/><stop offset="0.887" stop-color="#8f645b"/><stop offset="0.958" stop-color="#724943"/><stop offset="0.99" stop-color="#623a36"/><stop offset="1" stop-color="#623a36"/></linearGradient>
<linearGradient id="g522" gradientUnits="userSpaceOnUse" x1="649.5" x2="959.5"><stop offset="0" stop-color="#855b52"/><stop offset="0.026" stop-color="#8b6057"/><stop offset="0.103" stop-color="#a17769"/><stop offset="0.132" stop-color="#a67d6c"/><stop offset="0.281" stop-color="#b08a76"/><stop offset="0.416" stop-color="#b4917c"/><stop offset="0.555" stop-color="#b3907c"/><stop offset="0.681" stop-color="#ad8673"/><stop offset="0.81" stop-color="#9d7266"/><stop offset="0.887" stop-color="#8e635a"/><stop offset="0.952" stop-color="#744b44"/><stop offset="0.99" stop-color="#613935"/><stop offset="1" stop-color="#613935"/></linearGradient>
<linearGradient id="g523" gradientUnits="userSpaceOnUse" x1="649.5" x2="959.5"><stop offset="0" stop-color="#845a52"/><stop offset="0.019" stop-color="#885d55"/><stop offset="0.106" stop-color="#a17769"/><stop offset="0.135" stop-color="#a67d6c"/><stop offset="0.29" stop-color="#b08a76"/><stop offset="0.435" stop-color="#b3907c"/><stop offset="0.539" stop-color="#b3907b"/><stop offset="0.655" stop-color="#ae8875"/><stop offset="0.765" stop-color="#a3796a"/><stop offset="0.877" stop-color="#91665c"/><stop offset="0.952" stop-color="#734a43"/><stop offset="0.99" stop-color="#613935"/><stop offset="1" stop-color="#613935"/></linearGradient>
<linearGradient id="g524" gradientUnits="userSpaceOnUse" x1="649.5" x2="958.5"><stop offset="0" stop-color="#835951"/><stop offset="0.019" stop-color="#875c54"/><stop offset="0.11" stop-color="#a17769"/><stop offset="0.155" stop-color="#a77e6d"/><stop offset="0.301" stop-color="#b08a76"/><stop offset="0.437" stop-color="#b3907b"/><stop offset="0.547" stop-color="#b28f7b"/><stop offset="0.67" stop-color="#ad8673"/><stop offset="0.79" stop-color="#9f7567"/><stop offset="0.887" stop-color="#8e635a"/><stop offset="0.955" stop-color="#724943"/><stop offset="0.99" stop-color="#603834"/><stop offset="1" stop-color="#603834"/></linearGradient>
<linearGradient id="g525" gradientUnits="userSpaceOnUse" x1="650.5" x2="958.5"><stop offset="0" stop-color="#835951"/><stop offset="0.019" stop-color="#875c54"/><stop offset="0.11" stop-color="#a17769"/><stop offset="0.149" stop-color="#a67d6d"/><stop offset="0.295" stop-color="#af8976"/><stop offset="0.451" stop-color="#b38f7b"/><stop offset="0.575" stop-color="#b18d79"/><stop offset="0.685" stop-color="#ab8371"/><stop offset="0.792" stop-color="#9e7467"/><stop offset="0.883" stop-color="#8e635a"/><stop offset="0.948" stop-color="#744b44"/><stop offset="0.99" stop-color="#5f3734"/><stop offset="1" stop-color="#5f3734"/></linearGradient>
<linearGradient id="g526" gradientUnits="userSpaceOnUse" x1="650.5" x2="958.5"><stop offset="0" stop-color="#825850"/><stop offset="0.013" stop-color="#845951"/><stop offset="0.097" stop-color="#9d7266"/><stop offset="0.127" stop-color="#a37a6a"/><stop offset="0.266" stop-color="#ad8773"/><stop offset="0.403" stop-color="#b28d79"/><stop offset="0.562" stop-color="#b18d79"/><stop offset="0.679" stop-color="#ab8371"/><stop offset="0.795" stop-color="#9d7366"/><stop offset="0.88" stop-color="#8e635a"/><stop offset="0.938" stop-color="#774e47"/><stop offset="0.99" stop-color="#5f3733"/><stop offset="1" stop-color="#5f3733"/></linearGradient>
<linearGradient id="g527" gradientUnits="userSpaceOnUse" x1="650.5" x2="957.5"><stop offset="0" stop-color="#81574f"/><stop offset="0.016" stop-color="#835951"/><stop offset="0.101" stop-color="#9d7266"/><stop offset="0.127" stop-color="#a3796a"/><stop offset="0.27" stop-color="#ad8673"/><stop offset="0.42" stop-color="#b18d79"/><stop offset="0.547" stop-color="#b18d79"/><stop offset="0.671" stop-color="#ab8471"/><stop offset="0.792" stop-color="#9d7366"/><stop offset="0.879" stop-color="#8f645a"/><stop offset="0.948" stop-color="#734a43"/><stop offset="0.99" stop-color="#5e3632"/><stop offset="1" stop-color="#5e3632"/></linearGradient>
<linearGradient id="g528" gradientUnits="userSpaceOnUse" x1="651.5" x2="957.5"><stop offset="0" stop-color="#80574f"/><stop offset="0.016" stop-color="#835951"/><stop offset="0.101" stop-color="#9d7266"/><stop offset="0.131" stop-color="#a3796a"/><stop offset="0.278" stop-color="#ad8673"/><stop offset="0.415" stop-color="#b18c78"/><stop offset="0.552" stop-color="#b08c78"/><stop offset="0.667" stop-color="#ab8371"/><stop offset="0.768" stop-color="#a07668"/><stop offset="0.879" stop-color="#8e635a"/><stop offset="0.948" stop-color="#724943"/><stop offset="0.99" stop-color="#5d3532"/><stop offset="1" stop-color="#5d3532"/></linearGradient>
<linearGradient id="g529" gradientUnits="userSpaceOnUse" x1="651.5" x2="957.5"><stop offset="0" stop-color="#80564e"/><stop offset="0.02" stop-color="#835951"/><stop offset="0.105" stop-color="#9d7266"/><stop offset="0.134" stop-color="#a2796a"/><stop offset="0.275" stop-color="#ac8572"/><stop offset="0.405" stop-color="#b08b78"/><stop offset="0.559" stop-color="#b08b77"/><stop offset="0.683" stop-color="#a9816f"/><stop offset="0.804" stop-color="#9a6f64"/><stop offset="0.879" stop-color="#8d6259"/><stop offset="0.948" stop-color="#714842"/><stop offset="0.987" stop-color="#5d3531"/><stop offset="1" stop-color="#5d3531"/></linearGradient>
<linearGradient id="g530" gradientUnits="userSpaceOnUse" x1="652.5" x2="956.5"><stop offset="0" stop-color="#7f554d"/><stop offset="0.026" stop-color="#855b53"/><stop offset="0.105" stop-color="#9d7265"/><stop offset="0.132" stop-color="#a27869"/><stop offset="0.283" stop-color="#ac8572"/><stop offset="0.428" stop-color="#b08b77"/><stop offset="0.543" stop-color="#b08b77"/><stop offset="0.678" stop-color="#a9816f"/><stop offset="0.809" stop-color="#996e63"/><stop offset="0.882" stop-color="#8c6158"/><stop offset="0.951" stop-color="#6f4741"/><stop offset="0.99" stop-color="#5c3431"/><stop offset="1" stop-color="#5c3431"/></linearGradient>
<linearGradient id="g531" gradientUnits="userSpaceOnUse" x1="652.5" x2="956.5"><stop offset="0" stop-color="#7e554d"/><stop offset="0.02" stop-color="#825850"/><stop offset="0.105" stop-color="#9c7165"/><stop offset="0.135" stop-color="#a17869"/><stop offset="0.276" stop-color="#ab8471"/><stop offset="0.421" stop-color="#b08a77"/><stop offset="0.549" stop-color="#af8a76"/><stop offset="0.671" stop-color="#a9816f"/><stop offset="0.806" stop-color="#996e63"/><stop offset="0.878" stop-color="#8c6158"/><stop offset="0.941" stop-color="#734a43"/><stop offset="0.99" stop-color="#5b3330"/><stop offset="1" stop-color="#5b3330"/></linearGradient>
<linearGradient id="g532" gradientUnits="userSpaceOnUse" x1="652.5" x2="955.5"><stop offset="0" stop-color="#7d544c"/><stop offset="0.013" stop-color="#7f554d"/><stop offset="0.099" stop-color="#996e63"/><stop offset="0.135" stop-color="#a17769"/><stop offset="0.29" stop-color="#ab8472"/><stop offset="0.449" stop-color="#af8a76"/><stop offset="0.574" stop-color="#ae8875"/><stop offset="0.693" stop-color="#a67e6d"/><stop offset="0.812" stop-color="#986d62"/><stop offset="0.878" stop-color="#8c6259"/><stop offset="0.947" stop-color="#704741"/><stop offset="0.99" stop-color="#5b3330"/><stop offset="1" stop-color="#5b3330"/></linearGradient>
<linearGradient id="g533" gradientUnits="userSpaceOnUse" x1="653.5" x2="955.5"><stop offset="0" stop-color="#7d534b"/><stop offset="0.013" stop-color="#7f554d"/><stop offset="0.099" stop-color="#996e63"/><stop offset="0.129" stop-color="#a07668"/><stop offset="0.295" stop-color="#ab8471"/><stop offset="0.454" stop-color="#af8976"/><stop offset="0.583" stop-color="#ad8774"/><stop offset="0.702" stop-color="#a57c6c"/><stop offset="0.848" stop-color="#92675d"/><stop offset="0.877" stop-color="#8c6158"/><stop offset="0.95" stop-color="#6d453f"/><stop offset="0.99" stop-color="#5a322f"/><stop offset="1" stop-color="#5a322f"/></linearGradient>
<linearGradient id="g534" gradientUnits="userSpaceOnUse" x1="653.5" x2="955.5"><stop offset="0" stop-color="#7c524b"/><stop offset="0.017" stop-color="#7e554d"/><stop offset="0.113" stop-color="#9b7165"/><stop offset="0.139" stop-color="#a07668"/><stop offset="0.291" stop-color="#aa8371"/><stop offset="0.44" stop-color="#ae8875"/><stop offset="0.546" stop-color="#ae8874"/><stop offset="0.682" stop-color="#a67e6d"/><stop offset="0.801" stop-color="#986d62"/><stop offset="0.874" stop-color="#8c6158"/><stop offset="0.94" stop-color="#714842"/><stop offset="0.987" stop-color="#59322f"/><stop offset="1" stop-color="#59312e"/></linearGradient>
<linearGradient id="g535" gradientUnits="userSpaceOnUse" x1="654.5" x2="954.5"><stop offset="0" stop-color="#7b524a"/><stop offset="0.02" stop-color="#7f564e"/><stop offset="0.113" stop-color="#9b7165"/><stop offset="0.133" stop-color="#9f7567"/><stop offset="0.293" stop-color="#aa8270"/><stop offset="0.453" stop-color="#ae8875"/><stop offset="0.573" stop-color="#ac8673"/><stop offset="0.693" stop-color="#a57c6c"/><stop offset="0.847" stop-color="#91665c"/><stop offset="0.877" stop-color="#8b6057"/><stop offset="0.943" stop-color="#6f4741"/><stop offset="0.99" stop-color="#59312e"/><stop offset="1" stop-color="#59312e"/></linearGradient>
<linearGradient id="g536" gradientUnits="userSpaceOnUse" x1="654.5" x2="954.5"><stop offset="0" stop-color="#7a514a"/><stop offset="0.013" stop-color="#7c534b"/><stop offset="0.103" stop-color="#986d62"/><stop offset="0.13" stop-color="#9e7467"/><stop offset="0.29" stop-color="#a98170"/><stop offset="0.44" stop-color="#ad8774"/><stop offset="0.577" stop-color="#ac8572"/><stop offset="0.703" stop-color="#a37a6a"/><stop offset="0.823" stop-color="#94695f"/><stop offset="0.873" stop-color="#8b6057"/><stop offset="0.933" stop-color="#734a43"/><stop offset="0.987" stop-color="#58302e"/><stop offset="1" stop-color="#58302d"/></linearGradient>
<linearGradient id="g537" gradientUnits="userSpaceOnUse" x1="655.5" x2="953.5"><stop offset="0" stop-color="#795049"/><stop offset="0.013" stop-color="#7c524b"/><stop offset="0.114" stop-color="#9a7064"/><stop offset="0.134" stop-color="#9e7467"/><stop offset="0.302" stop-color="#a98170"/><stop offset="0.443" stop-color="#ad8673"/><stop offset="0.564" stop-color="#ac8572"/><stop offset="0.688" stop-color="#a47b6b"/><stop offset="0.829" stop-color="#93685e"/><stop offset="0.872" stop-color="#8b6058"/><stop offset="0.936" stop-color="#714942"/><stop offset="0.99" stop-color="#57302d"/><stop offset="1" stop-color="#57302d"/></linearGradient>
<linearGradient id="g538" gradientUnits="userSpaceOnUse" x1="655.5" x2="953.5"><stop offset="0" stop-color="#794f48"/><stop offset="0.013" stop-color="#7a514a"/><stop offset="0.101" stop-color="#966b60"/><stop offset="0.134" stop-color="#9d7366"/><stop offset="0.272" stop-color="#a77f6e"/><stop offset="0.433" stop-color="#ac8573"/><stop offset="0.544" stop-color="#ac8572"/><stop offset="0.671" stop-color="#a57c6c"/><stop offset="0.809" stop-color="#956a60"/><stop offset="0.872" stop-color="#8a6057"/><stop offset="0.94" stop-color="#6f4640"/><stop offset="0.987" stop-color="#572f2d"/><stop offset="1" stop-color="#572f2c"/></linearGradient>
<linearGradient id="g539" gradientUnits="userSpaceOnUse" x1="655.5" x2="952.5"><stop offset="0" stop-color="#784f48"/><stop offset="0.02" stop-color="#7b524b"/><stop offset="0.101" stop-color="#956a5f"/><stop offset="0.138" stop-color="#9d7366"/><stop offset="0.29" stop-color="#a77f6e"/><stop offset="0.431" stop-color="#ab8472"/><stop offset="0.552" stop-color="#ab8471"/><stop offset="0.677" stop-color="#a47b6b"/><stop offset="0.815" stop-color="#94695f"/><stop offset="0.872" stop-color="#8a6057"/><stop offset="0.939" stop-color="#6f4640"/><stop offset="0.99" stop-color="#562e2c"/><stop offset="1" stop-color="#562e2c"/></linearGradient>
<linearGradient id="g540" gradientUnits="userSpaceOnUse" x1="656.5" x2="952.5"><stop offset="0" stop-color="#774e47"/><stop offset="0.02" stop-color="#7b524a"/><stop offset="0.095" stop-color="#93685e"/><stop offset="0.135" stop-color="#9c7265"/><stop offset="0.277" stop-color="#a67e6d"/><stop offset="0.453" stop-color="#ab8472"/><stop offset="0.578" stop-color="#a98270"/><stop offset="0.703" stop-color="#a17769"/><stop offset="0.851" stop-color="#8e635a"/><stop offset="0.878" stop-color="#875c54"/><stop offset="0.932" stop-color="#714842"/><stop offset="0.986" stop-color="#562e2c"/><stop offset="1" stop-color="#552e2b"/></linearGradient>
<linearGradient id="g541" gradientUnits="userSpaceOnUse" x1="656.5" x2="951.5"><stop offset="0" stop-color="#764d46"/><stop offset="0.014" stop-color="#774e47"/><stop offset="0.092" stop-color="#91665c"/><stop offset="0.139" stop-color="#9c7265"/><stop offset="0.295" stop-color="#a67e6d"/><stop offset="0.444" stop-color="#aa8371"/><stop offset="0.58" stop-color="#a9816f"/><stop offset="0.708" stop-color="#a07668"/><stop offset="0.858" stop-color="#8d6259"/><stop offset="0.902" stop-color="#7e544d"/><stop offset="0.959" stop-color="#643c37"/><stop offset="0.99" stop-color="#552d2a"/><stop offset="1" stop-color="#552d2a"/></linearGradient>
<linearGradient id="g542" gradientUnits="userSpaceOnUse" x1="657.5" x2="951.5"><stop offset="0" stop-color="#754c46"/><stop offset="0.014" stop-color="#774e47"/><stop offset="0.095" stop-color="#91665d"/><stop offset="0.136" stop-color="#9b7165"/><stop offset="0.282" stop-color="#a57c6c"/><stop offset="0.429" stop-color="#aa8270"/><stop offset="0.565" stop-color="#a8816f"/><stop offset="0.667" stop-color="#a3796a"/><stop offset="0.793" stop-color="#956a60"/><stop offset="0.867" stop-color="#8a5f56"/><stop offset="0.932" stop-color="#704741"/><stop offset="0.99" stop-color="#542c2a"/><stop offset="1" stop-color="#542c2a"/></linearGradient>
<linearGradient id="g543" gradientUnits="userSpaceOnUse" x1="657.5" x2="950.5"><stop offset="0" stop-color="#744c45"/><stop offset="0.02" stop-color="#784f48"/><stop offset="0.113" stop-color="#956a60"/><stop offset="0.143" stop-color="#9b7165"/><stop offset="0.297" stop-color="#a57c6c"/><stop offset="0.433" stop-color="#a98170"/><stop offset="0.546" stop-color="#a8816f"/><stop offset="0.659" stop-color="#a37a6a"/><stop offset="0.802" stop-color="#94695f"/><stop offset="0.867" stop-color="#8a5f56"/><stop offset="0.935" stop-color="#6e4640"/><stop offset="0.99" stop-color="#532c29"/><stop offset="1" stop-color="#532c29"/></linearGradient>
<linearGradient id="g544" gradientUnits="userSpaceOnUse" x1="658.5" x2="950.5"><stop offset="0" stop-color="#744b44"/><stop offset="0.014" stop-color="#764d46"/><stop offset="0.11" stop-color="#94695f"/><stop offset="0.144" stop-color="#9b7064"/><stop offset="0.308" stop-color="#a57c6c"/><stop offset="0.473" stop-color="#a9816f"/><stop offset="0.592" stop-color="#a67e6d"/><stop offset="0.719" stop-color="#9d7266"/><stop offset="0.86" stop-color="#8b6057"/><stop offset="0.925" stop-color="#714942"/><stop offset="0.99" stop-color="#522b29"/><stop offset="1" stop-color="#522b29"/></linearGradient>
<linearGradient id="g545" gradientUnits="userSpaceOnUse" x1="658.5" x2="949.5"><stop offset="0" stop-color="#734a43"/><stop offset="0.017" stop-color="#754c46"/><stop offset="0.1" stop-color="#90655b"/><stop offset="0.141" stop-color="#9a6f64"/><stop offset="0.306" stop-color="#a47b6c"/><stop offset="0.464" stop-color="#a8806f"/><stop offset="0.577" stop-color="#a67e6d"/><stop offset="0.704" stop-color="#9e7466"/><stop offset="0.828" stop-color="#8f645b"/><stop offset="0.866" stop-color="#895e55"/><stop offset="0.931" stop-color="#6f4640"/><stop offset="0.99" stop-color="#522a28"/><stop offset="1" stop-color="#522a28"/></linearGradient>
<linearGradient id="g546" gradientUnits="userSpaceOnUse" x1="659.5" x2="949.5"><stop offset="0" stop-color="#724943"/><stop offset="0.021" stop-color="#764d46"/><stop offset="0.107" stop-color="#92665d"/><stop offset="0.141" stop-color="#9a6f63"/><stop offset="0.317" stop-color="#a47b6b"/><stop offset="0.469" stop-color="#a77f6e"/><stop offset="0.579" stop-color="#a57d6d"/><stop offset="0.707" stop-color="#9d7266"/><stop offset="0.855" stop-color="#8a6057"/><stop offset="0.914" stop-color="#754c45"/><stop offset="0.986" stop-color="#522a28"/><stop offset="1" stop-color="#512a28"/></linearGradient>
<linearGradient id="g547" gradientUnits="userSpaceOnUse" x1="660.5" x2="948.5"><stop offset="0" stop-color="#714842"/><stop offset="0.014" stop-color="#744b44"/><stop offset="0.108" stop-color="#91665d"/><stop offset="0.142" stop-color="#996f63"/><stop offset="0.309" stop-color="#a37a6b"/><stop offset="0.462" stop-color="#a77e6e"/><stop offset="0.583" stop-color="#a57c6c"/><stop offset="0.729" stop-color="#9a6f64"/><stop offset="0.861" stop-color="#895e56"/><stop offset="0.924" stop-color="#704841"/><stop offset="0.99" stop-color="#502927"/><stop offset="1" stop-color="#502927"/></linearGradient>
<linearGradient id="g548" gradientUnits="userSpaceOnUse" x1="660.5" x2="948.5"><stop offset="0" stop-color="#704741"/><stop offset="0.014" stop-color="#724943"/><stop offset="0.09" stop-color="#8b6158"/><stop offset="0.146" stop-color="#996e63"/><stop offset="0.326" stop-color="#a37a6b"/><stop offset="0.472" stop-color="#a67d6d"/><stop offset="0.587" stop-color="#a47b6b"/><stop offset="0.733" stop-color="#996e63"/><stop offset="0.858" stop-color="#895e56"/><stop offset="0.92" stop-color="#714842"/><stop offset="0.986" stop-color="#502927"/><stop offset="1" stop-color="#502926"/></linearGradient>
<linearGradient id="g549" gradientUnits="userSpaceOnUse" x1="661.5" x2="947.5"><stop offset="0" stop-color="#6f4741"/><stop offset="0.014" stop-color="#724943"/><stop offset="0.084" stop-color="#895e56"/><stop offset="0.143" stop-color="#986d62"/><stop offset="0.304" stop-color="#a2786a"/><stop offset="0.479" stop-color="#a57d6d"/><stop offset="0.598" stop-color="#a3796a"/><stop offset="0.731" stop-color="#986e62"/><stop offset="0.843" stop-color="#8b6057"/><stop offset="0.871" stop-color="#845a52"/><stop offset="0.941" stop-color="#673f3a"/><stop offset="0.99" stop-color="#4f2826"/><stop offset="1" stop-color="#4f2826"/></linearGradient>
<linearGradient id="g550" gradientUnits="userSpaceOnUse" x1="661.5" x2="947.5"><stop offset="0" stop-color="#6f4640"/><stop offset="0.014" stop-color="#704841"/><stop offset="0.105" stop-color="#8e635a"/><stop offset="0.147" stop-color="#986d62"/><stop offset="0.322" stop-color="#a2786a"/><stop offset="0.49" stop-color="#a57c6c"/><stop offset="0.626" stop-color="#a07769"/><stop offset="0.759" stop-color="#956a60"/><stop offset="0.857" stop-color="#885d55"/><stop offset="0.916" stop-color="#714842"/><stop offset="0.986" stop-color="#4f2726"/><stop offset="1" stop-color="#4e2725"/></linearGradient>
<linearGradient id="g551" gradientUnits="userSpaceOnUse" x1="662.5" x2="946.5"><stop offset="0" stop-color="#6e453f"/><stop offset="0.014" stop-color="#704741"/><stop offset="0.092" stop-color="#895f56"/><stop offset="0.144" stop-color="#976c61"/><stop offset="0.317" stop-color="#a17769"/><stop offset="0.486" stop-color="#a47b6b"/><stop offset="0.613" stop-color="#a07769"/><stop offset="0.736" stop-color="#976c61"/><stop offset="0.856" stop-color="#885d55"/><stop offset="0.915" stop-color="#714842"/><stop offset="0.989" stop-color="#4e2725"/><stop offset="1" stop-color="#4e2725"/></linearGradient>
<linearGradient id="g552" gradientUnits="userSpaceOnUse" x1="662.5" x2="945.5"><stop offset="0" stop-color="#6d443f"/><stop offset="0.014" stop-color="#6e4640"/><stop offset="0.088" stop-color="#875d54"/><stop offset="0.148" stop-color="#976c61"/><stop offset="0.339" stop-color="#a17769"/><stop offset="0.495" stop-color="#a37a6b"/><stop offset="0.615" stop-color="#a07668"/><stop offset="0.77" stop-color="#93685e"/><stop offset="0.859" stop-color="#865c54"/><stop offset="0.926" stop-color="#6c443e"/><stop offset="0.989" stop-color="#4d2624"/><stop offset="1" stop-color="#4d2624"/></linearGradient>
<linearGradient id="g553" gradientUnits="userSpaceOnUse" x1="663.5" x2="945.5"><stop offset="0" stop-color="#6c433e"/><stop offset="0.014" stop-color="#6e4540"/><stop offset="0.085" stop-color="#865c53"/><stop offset="0.149" stop-color="#966b61"/><stop offset="0.326" stop-color="#a07668"/><stop offset="0.489" stop-color="#a2796a"/><stop offset="0.599" stop-color="#a07668"/><stop offset="0.745" stop-color="#956a5f"/><stop offset="0.851" stop-color="#875d55"/><stop offset="0.918" stop-color="#6e453f"/><stop offset="0.989" stop-color="#4c2524"/><stop offset="1" stop-color="#4c2524"/></linearGradient>
<linearGradient id="g554" gradientUnits="userSpaceOnUse" x1="664.5" x2="944.5"><stop offset="0" stop-color="#6b423d"/><stop offset="0.014" stop-color="#6e453f"/><stop offset="0.093" stop-color="#885d55"/><stop offset="0.15" stop-color="#966b60"/><stop offset="0.346" stop-color="#a07668"/><stop offset="0.518" stop-color="#a27869"/><stop offset="0.643" stop-color="#9d7266"/><stop offset="0.786" stop-color="#90655b"/><stop offset="0.854" stop-color="#865c53"/><stop offset="0.921" stop-color="#6c443e"/><stop offset="0.989" stop-color="#4c2523"/><stop offset="1" stop-color="#4c2523"/></linearGradient>
<linearGradient id="g555" gradientUnits="userSpaceOnUse" x1="664.5" x2="944.5"><stop offset="0" stop-color="#6a423c"/><stop offset="0.014" stop-color="#6c433e"/><stop offset="0.086" stop-color="#845a52"/><stop offset="0.15" stop-color="#956a60"/><stop offset="0.325" stop-color="#9e7467"/><stop offset="0.496" stop-color="#a17869"/><stop offset="0.629" stop-color="#9d7366"/><stop offset="0.786" stop-color="#8f645b"/><stop offset="0.85" stop-color="#865c53"/><stop offset="0.918" stop-color="#6c443e"/><stop offset="0.986" stop-color="#4b2423"/><stop offset="1" stop-color="#4b2422"/></linearGradient>
<linearGradient id="g556" gradientUnits="userSpaceOnUse" x1="665.5" x2="943.5"><stop offset="0" stop-color="#69413c"/><stop offset="0.014" stop-color="#6c433e"/><stop offset="0.094" stop-color="#865c53"/><stop offset="0.155" stop-color="#956a60"/><stop offset="0.342" stop-color="#9e7467"/><stop offset="0.511" stop-color="#a07768"/><stop offset="0.644" stop-color="#9b7165"/><stop offset="0.784" stop-color="#8f645b"/><stop offset="0.849" stop-color="#865c53"/><stop offset="0.921" stop-color="#6b423d"/><stop offset="0.989" stop-color="#4a2322"/><stop offset="1" stop-color="#4a2322"/></linearGradient>
<linearGradient id="g557" gradientUnits="userSpaceOnUse" x1="665.5" x2="942.5"><stop offset="0" stop-color="#68403b"/><stop offset="0.014" stop-color="#6a413c"/><stop offset="0.079" stop-color="#80564e"/><stop offset="0.155" stop-color="#94695f"/><stop offset="0.336" stop-color="#9d7366"/><stop offset="0.502" stop-color="#a07668"/><stop offset="0.635" stop-color="#9b7165"/><stop offset="0.791" stop-color="#8e635a"/><stop offset="0.852" stop-color="#855b52"/><stop offset="0.921" stop-color="#6b423d"/><stop offset="0.989" stop-color="#492321"/><stop offset="1" stop-color="#492321"/></linearGradient>
<linearGradient id="g558" gradientUnits="userSpaceOnUse" x1="666.5" x2="942.5"><stop offset="0" stop-color="#673f3a"/><stop offset="0.014" stop-color="#6a413c"/><stop offset="0.094" stop-color="#845a52"/><stop offset="0.159" stop-color="#94695f"/><stop offset="0.355" stop-color="#9d7366"/><stop offset="0.522" stop-color="#9f7567"/><stop offset="0.667" stop-color="#986e62"/><stop offset="0.801" stop-color="#8c6158"/><stop offset="0.844" stop-color="#865b53"/><stop offset="0.902" stop-color="#714842"/><stop offset="0.982" stop-color="#4b2423"/><stop offset="0.996" stop-color="#492221"/><stop offset="1" stop-color="#492221"/></linearGradient>
<linearGradient id="g559" gradientUnits="userSpaceOnUse" x1="667.5" x2="941.5"><stop offset="0" stop-color="#673e39"/><stop offset="0.015" stop-color="#69413b"/><stop offset="0.088" stop-color="#815850"/><stop offset="0.153" stop-color="#93685e"/><stop offset="0.35" stop-color="#9c7265"/><stop offset="0.529" stop-color="#9e7467"/><stop offset="0.679" stop-color="#976c61"/><stop offset="0.828" stop-color="#885d55"/><stop offset="0.858" stop-color="#81574f"/><stop offset="0.931" stop-color="#643c37"/><stop offset="0.989" stop-color="#482220"/><stop offset="1" stop-color="#482220"/></linearGradient>
<linearGradient id="g560" gradientUnits="userSpaceOnUse" x1="667.5" x2="940.5"><stop offset="0" stop-color="#663d39"/><stop offset="0.015" stop-color="#673f3a"/><stop offset="0.095" stop-color="#825850"/><stop offset="0.161" stop-color="#93685e"/><stop offset="0.374" stop-color="#9c7265"/><stop offset="0.571" stop-color="#9c7265"/><stop offset="0.711" stop-color="#94695f"/><stop offset="0.839" stop-color="#865c53"/><stop offset="0.897" stop-color="#724943"/><stop offset="0.974" stop-color="#4f2826"/><stop offset="0.989" stop-color="#472120"/><stop offset="1" stop-color="#472120"/></linearGradient>
<linearGradient id="g561" gradientUnits="userSpaceOnUse" x1="668.5" x2="940.5"><stop offset="0" stop-color="#653c38"/><stop offset="0.015" stop-color="#673e3a"/><stop offset="0.092" stop-color="#81574f"/><stop offset="0.165" stop-color="#93685e"/><stop offset="0.371" stop-color="#9b7165"/><stop offset="0.518" stop-color="#9c7266"/><stop offset="0.643" stop-color="#986d62"/><stop offset="0.794" stop-color="#8b6057"/><stop offset="0.846" stop-color="#835951"/><stop offset="0.919" stop-color="#673f3a"/><stop offset="0.985" stop-color="#47211f"/><stop offset="1" stop-color="#47201f"/></linearGradient>
<linearGradient id="g562" gradientUnits="userSpaceOnUse" x1="669.5" x2="939.5"><stop offset="0" stop-color="#643b37"/><stop offset="0.015" stop-color="#663e39"/><stop offset="0.089" stop-color="#7f554e"/><stop offset="0.163" stop-color="#92675d"/><stop offset="0.359" stop-color="#9a7064"/><stop offset="0.522" stop-color="#9c7165"/><stop offset="0.652" stop-color="#976c61"/><stop offset="0.807" stop-color="#895e56"/><stop offset="0.841" stop-color="#845a51"/><stop offset="0.915" stop-color="#68403b"/><stop offset="0.981" stop-color="#492321"/><stop offset="0.996" stop-color="#46201e"/><stop offset="1" stop-color="#46201e"/></linearGradient>
<linearGradient id="g563" gradientUnits="userSpaceOnUse" x1="669.5" x2="938.5"><stop offset="0" stop-color="#633b36"/><stop offset="0.015" stop-color="#643c38"/><stop offset="0.097" stop-color="#80564e"/><stop offset="0.171" stop-color="#92675d"/><stop offset="0.387" stop-color="#9a7064"/><stop offset="0.558" stop-color="#9a7064"/><stop offset="0.714" stop-color="#92675d"/><stop offset="0.836" stop-color="#855a52"/><stop offset="0.9" stop-color="#6e4640"/><stop offset="0.959" stop-color="#542d2a"/><stop offset="0.989" stop-color="#451f1e"/><stop offset="1" stop-color="#451f1e"/></linearGradient>
<linearGradient id="g564" gradientUnits="userSpaceOnUse" x1="670.5" x2="938.5"><stop offset="0" stop-color="#623a36"/><stop offset="0.015" stop-color="#643c37"/><stop offset="0.097" stop-color="#7f564e"/><stop offset="0.168" stop-color="#91665c"/><stop offset="0.373" stop-color="#996f63"/><stop offset="0.563" stop-color="#996f63"/><stop offset="0.705" stop-color="#92675d"/><stop offset="0.832" stop-color="#845a52"/><stop offset="0.892" stop-color="#704741"/><stop offset="0.97" stop-color="#4d2624"/><stop offset="0.985" stop-color="#451f1e"/><stop offset="1" stop-color="#451e1d"/></linearGradient>
<linearGradient id="g565" gradientUnits="userSpaceOnUse" x1="671.5" x2="937.5"><stop offset="0" stop-color="#613935"/><stop offset="0.015" stop-color="#633b37"/><stop offset="0.09" stop-color="#7c534b"/><stop offset="0.165" stop-color="#90655b"/><stop offset="0.316" stop-color="#976c61"/><stop offset="0.496" stop-color="#9a6f63"/><stop offset="0.647" stop-color="#956a60"/><stop offset="0.801" stop-color="#885d55"/><stop offset="0.838" stop-color="#825850"/><stop offset="0.906" stop-color="#69413c"/><stop offset="0.977" stop-color="#492221"/><stop offset="0.989" stop-color="#441e1d"/><stop offset="1" stop-color="#441e1d"/></linearGradient>
<linearGradient id="g566" gradientUnits="userSpaceOnUse" x1="672.5" x2="936.5"><stop offset="0" stop-color="#603834"/><stop offset="0.015" stop-color="#633b36"/><stop offset="0.102" stop-color="#7f564e"/><stop offset="0.17" stop-color="#90655b"/><stop offset="0.375" stop-color="#986d62"/><stop offset="0.568" stop-color="#986d62"/><stop offset="0.739" stop-color="#8e635a"/><stop offset="0.83" stop-color="#845a51"/><stop offset="0.913" stop-color="#663e39"/><stop offset="0.989" stop-color="#431d1c"/><stop offset="1" stop-color="#431d1c"/></linearGradient>
<linearGradient id="g567" gradientUnits="userSpaceOnUse" x1="672.5" x2="935.5"><stop offset="0" stop-color="#5f3733"/><stop offset="0.015" stop-color="#613935"/><stop offset="0.099" stop-color="#7c534b"/><stop offset="0.171" stop-color="#8f645a"/><stop offset="0.323" stop-color="#966b60"/><stop offset="0.54" stop-color="#986d62"/><stop offset="0.692" stop-color="#91665c"/><stop offset="0.825" stop-color="#845a52"/><stop offset="0.894" stop-color="#6d453f"/><stop offset="0.966" stop-color="#4e2725"/><stop offset="0.989" stop-color="#431d1c"/><stop offset="1" stop-color="#431d1c"/></linearGradient>
<linearGradient id="g568" gradientUnits="userSpaceOnUse" x1="673.5" x2="935.5"><stop offset="0" stop-color="#5e3632"/><stop offset="0.015" stop-color="#603834"/><stop offset="0.092" stop-color="#7a5049"/><stop offset="0.176" stop-color="#8f645b"/><stop offset="0.374" stop-color="#966c61"/><stop offset="0.557" stop-color="#966c61"/><stop offset="0.695" stop-color="#90655b"/><stop offset="0.824" stop-color="#835951"/><stop offset="0.893" stop-color="#6c433d"/><stop offset="0.954" stop-color="#512a28"/><stop offset="0.985" stop-color="#421c1b"/><stop offset="1" stop-color="#421c1b"/></linearGradient>
<linearGradient id="g569" gradientUnits="userSpaceOnUse" x1="674.5" x2="934.5"><stop offset="0" stop-color="#5d3532"/><stop offset="0.015" stop-color="#603734"/><stop offset="0.1" stop-color="#7b524a"/><stop offset="0.177" stop-color="#8e635a"/><stop offset="0.362" stop-color="#956a60"/><stop offset="0.519" stop-color="#966c61"/><stop offset="0.654" stop-color="#92675d"/><stop offset="0.808" stop-color="#855b52"/><stop offset="0.838" stop-color="#7e544c"/><stop offset="0.908" stop-color="#653d38"/><stop offset="0.988" stop-color="#411b1a"/><stop offset="1" stop-color="#411b1a"/></linearGradient>
<linearGradient id="g570" gradientUnits="userSpaceOnUse" x1="675.5" x2="933.5"><stop offset="0" stop-color="#5c3431"/><stop offset="0.016" stop-color="#5f3733"/><stop offset="0.101" stop-color="#7b514a"/><stop offset="0.182" stop-color="#8e635a"/><stop offset="0.391" stop-color="#956a60"/><stop offset="0.57" stop-color="#956a5f"/><stop offset="0.721" stop-color="#8c6259"/><stop offset="0.818" stop-color="#835951"/><stop offset="0.888" stop-color="#6c443e"/><stop offset="0.957" stop-color="#4f2826"/><stop offset="0.988" stop-color="#401b1a"/><stop offset="1" stop-color="#401b1a"/></linearGradient>
<linearGradient id="g571" gradientUnits="userSpaceOnUse" x1="675.5" x2="932.5"><stop offset="0" stop-color="#5b3330"/><stop offset="0.016" stop-color="#5d3531"/><stop offset="0.097" stop-color="#784f48"/><stop offset="0.183" stop-color="#8d6259"/><stop offset="0.377" stop-color="#94695f"/><stop offset="0.58" stop-color="#94695f"/><stop offset="0.759" stop-color="#895e56"/><stop offset="0.821" stop-color="#81584f"/><stop offset="0.891" stop-color="#6a423d"/><stop offset="0.965" stop-color="#4b2423"/><stop offset="0.988" stop-color="#401a19"/><stop offset="1" stop-color="#401a19"/></linearGradient>
<linearGradient id="g572" gradientUnits="userSpaceOnUse" x1="676.5" x2="932.5"><stop offset="0" stop-color="#5a322f"/><stop offset="0.016" stop-color="#5c3431"/><stop offset="0.098" stop-color="#774e47"/><stop offset="0.188" stop-color="#8d6259"/><stop offset="0.414" stop-color="#94695f"/><stop offset="0.586" stop-color="#93685e"/><stop offset="0.762" stop-color="#885d55"/><stop offset="0.816" stop-color="#81574f"/><stop offset="0.883" stop-color="#6b433d"/><stop offset="0.957" stop-color="#4d2624"/><stop offset="0.984" stop-color="#3f1a19"/><stop offset="1" stop-color="#3f1919"/></linearGradient>
<linearGradient id="g573" gradientUnits="userSpaceOnUse" x1="677.5" x2="931.5"><stop offset="0" stop-color="#59322f"/><stop offset="0.016" stop-color="#5c3430"/><stop offset="0.094" stop-color="#754c45"/><stop offset="0.181" stop-color="#8b6057"/><stop offset="0.283" stop-color="#90655c"/><stop offset="0.5" stop-color="#94695f"/><stop offset="0.657" stop-color="#8f645a"/><stop offset="0.803" stop-color="#835951"/><stop offset="0.866" stop-color="#714842"/><stop offset="0.953" stop-color="#4e2725"/><stop offset="0.984" stop-color="#3f1918"/><stop offset="1" stop-color="#3e1918"/></linearGradient>
<linearGradient id="g574" gradientUnits="userSpaceOnUse" x1="678.5" x2="930.5"><stop offset="0" stop-color="#58312e"/><stop offset="0.016" stop-color="#5b3330"/><stop offset="0.115" stop-color="#7a5149"/><stop offset="0.194" stop-color="#8c6158"/><stop offset="0.397" stop-color="#92675d"/><stop offset="0.571" stop-color="#92675d"/><stop offset="0.746" stop-color="#885d55"/><stop offset="0.81" stop-color="#81574f"/><stop offset="0.881" stop-color="#6a423d"/><stop offset="0.944" stop-color="#512a28"/><stop offset="0.988" stop-color="#3e1817"/><stop offset="1" stop-color="#3e1817"/></linearGradient>
<linearGradient id="g575" gradientUnits="userSpaceOnUse" x1="679.5" x2="929.5"><stop offset="0" stop-color="#57302d"/><stop offset="0.016" stop-color="#5a322f"/><stop offset="0.112" stop-color="#784f48"/><stop offset="0.196" stop-color="#8b6158"/><stop offset="0.388" stop-color="#91665d"/><stop offset="0.58" stop-color="#91665c"/><stop offset="0.74" stop-color="#885d55"/><stop offset="0.804" stop-color="#81574f"/><stop offset="0.876" stop-color="#6b433d"/><stop offset="0.948" stop-color="#4f2826"/><stop offset="0.988" stop-color="#3d1817"/><stop offset="1" stop-color="#3d1817"/></linearGradient>
<linearGradient id="g576" gradientUnits="userSpaceOnUse" x1="680.5" x2="928.5"><stop offset="0" stop-color="#562f2c"/><stop offset="0.016" stop-color="#59312e"/><stop offset="0.101" stop-color="#744b45"/><stop offset="0.185" stop-color="#885e55"/><stop offset="0.21" stop-color="#8b6158"/><stop offset="0.419" stop-color="#91665c"/><stop offset="0.573" stop-color="#90655c"/><stop offset="0.718" stop-color="#895e56"/><stop offset="0.802" stop-color="#81574f"/><stop offset="0.879" stop-color="#69413c"/><stop offset="0.944" stop-color="#502927"/><stop offset="0.988" stop-color="#3c1716"/><stop offset="1" stop-color="#3c1716"/></linearGradient>
<linearGradient id="g577" gradientUnits="userSpaceOnUse" x1="680.5" x2="927.5"><stop offset="0" stop-color="#552e2b"/><stop offset="0.016" stop-color="#572f2d"/><stop offset="0.105" stop-color="#734a44"/><stop offset="0.186" stop-color="#875c54"/><stop offset="0.219" stop-color="#8b6057"/><stop offset="0.429" stop-color="#90655c"/><stop offset="0.595" stop-color="#8f645a"/><stop offset="0.757" stop-color="#855b53"/><stop offset="0.806" stop-color="#7f554d"/><stop offset="0.874" stop-color="#6a423c"/><stop offset="0.947" stop-color="#4e2725"/><stop offset="0.988" stop-color="#3c1616"/><stop offset="1" stop-color="#3c1616"/></linearGradient>
<linearGradient id="g578" gradientUnits="userSpaceOnUse" x1="681.5" x2="926.5"><stop offset="0" stop-color="#542d2a"/><stop offset="0.016" stop-color="#562f2c"/><stop offset="0.098" stop-color="#704741"/><stop offset="0.167" stop-color="#81584f"/><stop offset="0.216" stop-color="#8a5f57"/><stop offset="0.404" stop-color="#8f645b"/><stop offset="0.571" stop-color="#8f645a"/><stop offset="0.731" stop-color="#865c54"/><stop offset="0.796" stop-color="#80574f"/><stop offset="0.873" stop-color="#6a413c"/><stop offset="0.959" stop-color="#482220"/><stop offset="0.988" stop-color="#3b1615"/><stop offset="1" stop-color="#3b1615"/></linearGradient>
<linearGradient id="g579" gradientUnits="userSpaceOnUse" x1="682.5" x2="926.5"><stop offset="0" stop-color="#532c2a"/><stop offset="0.016" stop-color="#552e2b"/><stop offset="0.098" stop-color="#6f4741"/><stop offset="0.189" stop-color="#855b52"/><stop offset="0.221" stop-color="#8a5f56"/><stop offset="0.459" stop-color="#8f645b"/><stop offset="0.631" stop-color="#8c6158"/><stop offset="0.783" stop-color="#81584f"/><stop offset="0.861" stop-color="#6c433e"/><stop offset="0.947" stop-color="#4b2423"/><stop offset="0.984" stop-color="#3a1515"/><stop offset="1" stop-color="#3a1515"/></linearGradient>
<linearGradient id="g580" gradientUnits="userSpaceOnUse" x1="683.5" x2="925.5"><stop offset="0" stop-color="#522b29"/><stop offset="0.017" stop-color="#542d2a"/><stop offset="0.095" stop-color="#6d453f"/><stop offset="0.19" stop-color="#845a51"/><stop offset="0.231" stop-color="#895f56"/><stop offset="0.438" stop-color="#8e635a"/><stop offset="0.612" stop-color="#8c6158"/><stop offset="0.781" stop-color="#81574f"/><stop offset="0.868" stop-color="#68403b"/><stop offset="0.938" stop-color="#4e2725"/><stop offset="0.983" stop-color="#3a1514"/><stop offset="1" stop-color="#3a1414"/></linearGradient>
<linearGradient id="g581" gradientUnits="userSpaceOnUse" x1="684.5" x2="924.5"><stop offset="0" stop-color="#512a28"/><stop offset="0.017" stop-color="#542c2a"/><stop offset="0.121" stop-color="#734a44"/><stop offset="0.208" stop-color="#865c53"/><stop offset="0.258" stop-color="#8a5f56"/><stop offset="0.467" stop-color="#8d6259"/><stop offset="0.617" stop-color="#8b6057"/><stop offset="0.775" stop-color="#81574f"/><stop offset="0.858" stop-color="#6a423c"/><stop offset="0.933" stop-color="#4f2826"/><stop offset="0.983" stop-color="#391414"/><stop offset="1" stop-color="#391413"/></linearGradient>
<linearGradient id="g582" gradientUnits="userSpaceOnUse" x1="685.5" x2="923.5"><stop offset="0" stop-color="#502927"/><stop offset="0.017" stop-color="#532b29"/><stop offset="0.118" stop-color="#714842"/><stop offset="0.21" stop-color="#855b52"/><stop offset="0.244" stop-color="#885e55"/><stop offset="0.437" stop-color="#8c6259"/><stop offset="0.597" stop-color="#8b6057"/><stop offset="0.756" stop-color="#825850"/><stop offset="0.807" stop-color="#784f48"/><stop offset="0.895" stop-color="#5d3531"/><stop offset="0.971" stop-color="#3e1918"/><stop offset="0.987" stop-color="#381313"/><stop offset="1" stop-color="#381313"/></linearGradient>
<linearGradient id="g583" gradientUnits="userSpaceOnUse" x1="686.5" x2="922.5"><stop offset="0" stop-color="#4f2826"/><stop offset="0.017" stop-color="#522a28"/><stop offset="0.119" stop-color="#704741"/><stop offset="0.199" stop-color="#825850"/><stop offset="0.246" stop-color="#885d55"/><stop offset="0.483" stop-color="#8c6158"/><stop offset="0.64" stop-color="#885e55"/><stop offset="0.767" stop-color="#80564e"/><stop offset="0.847" stop-color="#6b433d"/><stop offset="0.924" stop-color="#512a28"/><stop offset="0.983" stop-color="#381313"/><stop offset="1" stop-color="#371312"/></linearGradient>
<linearGradient id="g584" gradientUnits="userSpaceOnUse" x1="687.5" x2="921.5"><stop offset="0" stop-color="#4e2725"/><stop offset="0.017" stop-color="#512927"/><stop offset="0.107" stop-color="#6c433e"/><stop offset="0.201" stop-color="#80574f"/><stop offset="0.244" stop-color="#875c54"/><stop offset="0.449" stop-color="#8b6057"/><stop offset="0.624" stop-color="#885e55"/><stop offset="0.761" stop-color="#80564e"/><stop offset="0.85" stop-color="#69413c"/><stop offset="0.932" stop-color="#4d2624"/><stop offset="0.983" stop-color="#371212"/><stop offset="1" stop-color="#371212"/></linearGradient>
<linearGradient id="g585" gradientUnits="userSpaceOnUse" x1="688.5" x2="920.5"><stop offset="0" stop-color="#4d2625"/><stop offset="0.017" stop-color="#502826"/><stop offset="0.112" stop-color="#6c433e"/><stop offset="0.203" stop-color="#7f564e"/><stop offset="0.246" stop-color="#865c53"/><stop offset="0.474" stop-color="#8a5f57"/><stop offset="0.629" stop-color="#875d54"/><stop offset="0.759" stop-color="#7f554d"/><stop offset="0.849" stop-color="#68403b"/><stop offset="0.94" stop-color="#492221"/><stop offset="0.987" stop-color="#361111"/><stop offset="1" stop-color="#361111"/></linearGradient>
<linearGradient id="g586" gradientUnits="userSpaceOnUse" x1="689.5" x2="919.5"><stop offset="0" stop-color="#4c2524"/><stop offset="0.017" stop-color="#4e2725"/><stop offset="0.1" stop-color="#673f3a"/><stop offset="0.196" stop-color="#7d534c"/><stop offset="0.252" stop-color="#865b53"/><stop offset="0.496" stop-color="#895f56"/><stop offset="0.643" stop-color="#865b53"/><stop offset="0.752" stop-color="#7f554d"/><stop offset="0.848" stop-color="#673f3a"/><stop offset="0.922" stop-color="#4f2826"/><stop offset="0.983" stop-color="#361111"/><stop offset="1" stop-color="#351110"/></linearGradient>
<linearGradient id="g587" gradientUnits="userSpaceOnUse" x1="690.5" x2="918.5"><stop offset="0" stop-color="#4b2523"/><stop offset="0.018" stop-color="#4d2625"/><stop offset="0.105" stop-color="#673f3a"/><stop offset="0.193" stop-color="#7b514a"/><stop offset="0.263" stop-color="#855b53"/><stop offset="0.465" stop-color="#885e55"/><stop offset="0.623" stop-color="#865b53"/><stop offset="0.741" stop-color="#7f564e"/><stop offset="0.842" stop-color="#683f3a"/><stop offset="0.925" stop-color="#4c2524"/><stop offset="0.982" stop-color="#351010"/><stop offset="1" stop-color="#351010"/></linearGradient>
<linearGradient id="g588" gradientUnits="userSpaceOnUse" x1="691.5" x2="917.5"><stop offset="0" stop-color="#4a2422"/><stop offset="0.018" stop-color="#4c2524"/><stop offset="0.111" stop-color="#673f3a"/><stop offset="0.212" stop-color="#7d534c"/><stop offset="0.265" stop-color="#845a52"/><stop offset="0.487" stop-color="#885d55"/><stop offset="0.673" stop-color="#835951"/><stop offset="0.743" stop-color="#7d544c"/><stop offset="0.832" stop-color="#69413b"/><stop offset="0.916" stop-color="#4f2826"/><stop offset="0.982" stop-color="#341010"/><stop offset="1" stop-color="#34100f"/></linearGradient>
<linearGradient id="g589" gradientUnits="userSpaceOnUse" x1="692.5" x2="916.5"><stop offset="0" stop-color="#492321"/><stop offset="0.018" stop-color="#4b2423"/><stop offset="0.116" stop-color="#673f3a"/><stop offset="0.228" stop-color="#7e544c"/><stop offset="0.286" stop-color="#845a52"/><stop offset="0.518" stop-color="#875c54"/><stop offset="0.701" stop-color="#80574f"/><stop offset="0.746" stop-color="#7b524a"/><stop offset="0.839" stop-color="#663d39"/><stop offset="0.942" stop-color="#441e1d"/><stop offset="0.982" stop-color="#330f0f"/><stop offset="1" stop-color="#330f0f"/></linearGradient>
<linearGradient id="g590" gradientUnits="userSpaceOnUse" x1="693.5" x2="914.5"><stop offset="0" stop-color="#482220"/><stop offset="0.018" stop-color="#4a2322"/><stop offset="0.127" stop-color="#683f3b"/><stop offset="0.222" stop-color="#7b524a"/><stop offset="0.285" stop-color="#835951"/><stop offset="0.511" stop-color="#865c53"/><stop offset="0.692" stop-color="#80574f"/><stop offset="0.729" stop-color="#7d544c"/><stop offset="0.814" stop-color="#6c433d"/><stop offset="0.891" stop-color="#562e2c"/><stop offset="0.973" stop-color="#381313"/><stop offset="0.991" stop-color="#330e0e"/><stop offset="1" stop-color="#330e0e"/></linearGradient>
<linearGradient id="g591" gradientUnits="userSpaceOnUse" x1="694.5" x2="913.5"><stop offset="0" stop-color="#47211f"/><stop offset="0.018" stop-color="#492221"/><stop offset="0.132" stop-color="#683f3a"/><stop offset="0.233" stop-color="#7b524a"/><stop offset="0.306" stop-color="#835951"/><stop offset="0.534" stop-color="#855b52"/><stop offset="0.712" stop-color="#7e554d"/><stop offset="0.804" stop-color="#6d443e"/><stop offset="0.89" stop-color="#552d2b"/><stop offset="0.973" stop-color="#371212"/><stop offset="0.991" stop-color="#320e0e"/><stop offset="1" stop-color="#320e0e"/></linearGradient>
<linearGradient id="g592" gradientUnits="userSpaceOnUse" x1="696.5" x2="912.5"><stop offset="0" stop-color="#46201e"/><stop offset="0.019" stop-color="#492221"/><stop offset="0.12" stop-color="#643c37"/><stop offset="0.222" stop-color="#784f48"/><stop offset="0.306" stop-color="#825850"/><stop offset="0.528" stop-color="#845a52"/><stop offset="0.699" stop-color="#7e554d"/><stop offset="0.792" stop-color="#6d453f"/><stop offset="0.875" stop-color="#58302d"/><stop offset="0.958" stop-color="#3c1616"/><stop offset="0.986" stop-color="#310d0d"/><stop offset="1" stop-color="#310d0d"/></linearGradient>
<linearGradient id="g593" gradientUnits="userSpaceOnUse" x1="697.5" x2="911.5"><stop offset="0" stop-color="#451f1e"/><stop offset="0.019" stop-color="#472120"/><stop offset="0.117" stop-color="#623a35"/><stop offset="0.224" stop-color="#774e47"/><stop offset="0.322" stop-color="#825850"/><stop offset="0.598" stop-color="#825850"/><stop offset="0.692" stop-color="#7d544c"/><stop offset="0.78" stop-color="#6e4540"/><stop offset="0.874" stop-color="#572f2c"/><stop offset="0.958" stop-color="#3b1515"/><stop offset="0.986" stop-color="#300c0c"/><stop offset="1" stop-color="#300c0c"/></linearGradient>
<linearGradient id="g594" gradientUnits="userSpaceOnUse" x1="698.5" x2="910.5"><stop offset="0" stop-color="#441e1d"/><stop offset="0.019" stop-color="#46201e"/><stop offset="0.104" stop-color="#5d3532"/><stop offset="0.193" stop-color="#704741"/><stop offset="0.297" stop-color="#7e554d"/><stop offset="0.344" stop-color="#81584f"/><stop offset="0.571" stop-color="#81584f"/><stop offset="0.679" stop-color="#7d544c"/><stop offset="0.783" stop-color="#6c433e"/><stop offset="0.877" stop-color="#542d2a"/><stop offset="0.967" stop-color="#361111"/><stop offset="0.986" stop-color="#300c0c"/><stop offset="1" stop-color="#300c0c"/></linearGradient>
<linearGradient id="g595" gradientUnits="userSpaceOnUse" x1="699.5" x2="909.5"><stop offset="0" stop-color="#431d1c"/><stop offset="0.019" stop-color="#451f1d"/><stop offset="0.114" stop-color="#5e3632"/><stop offset="0.229" stop-color="#744b44"/><stop offset="0.348" stop-color="#81574f"/><stop offset="0.567" stop-color="#81574f"/><stop offset="0.671" stop-color="#7c534b"/><stop offset="0.767" stop-color="#6d453f"/><stop offset="0.862" stop-color="#572f2d"/><stop offset="0.952" stop-color="#3a1514"/><stop offset="0.981" stop-color="#2f0b0b"/><stop offset="1" stop-color="#2f0b0b"/></linearGradient>
<linearGradient id="g596" gradientUnits="userSpaceOnUse" x1="700.5" x2="907.5"><stop offset="0" stop-color="#421c1b"/><stop offset="0.019" stop-color="#431d1c"/><stop offset="0.116" stop-color="#5c3431"/><stop offset="0.222" stop-color="#714842"/><stop offset="0.348" stop-color="#7f564e"/><stop offset="0.512" stop-color="#81574f"/><stop offset="0.657" stop-color="#7c534b"/><stop offset="0.744" stop-color="#704741"/><stop offset="0.831" stop-color="#5e3633"/><stop offset="0.918" stop-color="#46201e"/><stop offset="0.986" stop-color="#2e0b0b"/><stop offset="1" stop-color="#2e0b0b"/></linearGradient>
<linearGradient id="g597" gradientUnits="userSpaceOnUse" x1="702.5" x2="906.5"><stop offset="0" stop-color="#411b1a"/><stop offset="0.02" stop-color="#431d1c"/><stop offset="0.127" stop-color="#5e3632"/><stop offset="0.225" stop-color="#704741"/><stop offset="0.363" stop-color="#7e554d"/><stop offset="0.52" stop-color="#80564e"/><stop offset="0.637" stop-color="#7c534b"/><stop offset="0.74" stop-color="#6f4640"/><stop offset="0.838" stop-color="#5b332f"/><stop offset="0.926" stop-color="#421c1b"/><stop offset="0.985" stop-color="#2e0a0a"/><stop offset="1" stop-color="#2e0a0a"/></linearGradient>
<linearGradient id="g598" gradientUnits="userSpaceOnUse" x1="703.5" x2="905.5"><stop offset="0" stop-color="#401a19"/><stop offset="0.02" stop-color="#421c1b"/><stop offset="0.119" stop-color="#5a322f"/><stop offset="0.223" stop-color="#6d453f"/><stop offset="0.322" stop-color="#795049"/><stop offset="0.426" stop-color="#7f554d"/><stop offset="0.599" stop-color="#7d544c"/><stop offset="0.713" stop-color="#714842"/><stop offset="0.822" stop-color="#5d3531"/><stop offset="0.921" stop-color="#421c1b"/><stop offset="0.985" stop-color="#2d090a"/><stop offset="1" stop-color="#2d090a"/></linearGradient>
<linearGradient id="g599" gradientUnits="userSpaceOnUse" x1="704.5" x2="903.5"><stop offset="0" stop-color="#3f1918"/><stop offset="0.02" stop-color="#401a1a"/><stop offset="0.131" stop-color="#5b3330"/><stop offset="0.256" stop-color="#704741"/><stop offset="0.382" stop-color="#7b524a"/><stop offset="0.492" stop-color="#7e544d"/><stop offset="0.598" stop-color="#7b524a"/><stop offset="0.709" stop-color="#704741"/><stop offset="0.809" stop-color="#5e3633"/><stop offset="0.889" stop-color="#4b2422"/><stop offset="0.975" stop-color="#300c0c"/><stop offset="0.99" stop-color="#2c0909"/><stop offset="1" stop-color="#2c0909"/></linearGradient>
<linearGradient id="g600" gradientUnits="userSpaceOnUse" x1="706.5" x2="902.5"><stop offset="0" stop-color="#3d1817"/><stop offset="0.02" stop-color="#401a19"/><stop offset="0.133" stop-color="#5a322f"/><stop offset="0.245" stop-color="#6d443e"/><stop offset="0.367" stop-color="#784f48"/><stop offset="0.48" stop-color="#7c534b"/><stop offset="0.582" stop-color="#7a5049"/><stop offset="0.684" stop-color="#714842"/><stop offset="0.801" stop-color="#5e3632"/><stop offset="0.903" stop-color="#451f1e"/><stop offset="0.985" stop-color="#2c0808"/><stop offset="1" stop-color="#2c0808"/></linearGradient>
<linearGradient id="g601" gradientUnits="userSpaceOnUse" x1="707.5" x2="901.5"><stop offset="0" stop-color="#3c1716"/><stop offset="0.021" stop-color="#3e1918"/><stop offset="0.113" stop-color="#542d2a"/><stop offset="0.232" stop-color="#69403b"/><stop offset="0.366" stop-color="#764d46"/><stop offset="0.49" stop-color="#7a5149"/><stop offset="0.593" stop-color="#774e47"/><stop offset="0.711" stop-color="#6b423d"/><stop offset="0.804" stop-color="#5b3330"/><stop offset="0.887" stop-color="#482120"/><stop offset="0.979" stop-color="#2b0808"/><stop offset="1" stop-color="#2b0808"/></linearGradient>
<linearGradient id="g602" gradientUnits="userSpaceOnUse" x1="708.5" x2="899.5"><stop offset="0" stop-color="#3b1615"/><stop offset="0.021" stop-color="#3d1717"/><stop offset="0.152" stop-color="#5a322f"/><stop offset="0.277" stop-color="#6c433e"/><stop offset="0.393" stop-color="#754c45"/><stop offset="0.508" stop-color="#784e47"/><stop offset="0.607" stop-color="#744b44"/><stop offset="0.717" stop-color="#69403b"/><stop offset="0.832" stop-color="#542d2a"/><stop offset="0.932" stop-color="#3b1515"/><stop offset="0.984" stop-color="#2a0707"/><stop offset="1" stop-color="#2a0707"/></linearGradient>
<linearGradient id="g603" gradientUnits="userSpaceOnUse" x1="710.5" x2="898.5"><stop offset="0" stop-color="#3a1514"/><stop offset="0.021" stop-color="#3c1716"/><stop offset="0.133" stop-color="#552d2b"/><stop offset="0.261" stop-color="#68403b"/><stop offset="0.378" stop-color="#724943"/><stop offset="0.495" stop-color="#754c45"/><stop offset="0.601" stop-color="#724942"/><stop offset="0.707" stop-color="#673f3a"/><stop offset="0.824" stop-color="#542c2a"/><stop offset="0.92" stop-color="#3c1716"/><stop offset="0.984" stop-color="#2a0607"/><stop offset="1" stop-color="#2a0607"/></linearGradient>
<linearGradient id="g604" gradientUnits="userSpaceOnUse" x1="711.5" x2="896.5"><stop offset="0" stop-color="#391414"/><stop offset="0.022" stop-color="#3a1515"/><stop offset="0.119" stop-color="#502927"/><stop offset="0.243" stop-color="#643b37"/><stop offset="0.378" stop-color="#704741"/><stop offset="0.519" stop-color="#734a43"/><stop offset="0.649" stop-color="#6c433e"/><stop offset="0.768" stop-color="#5d3531"/><stop offset="0.876" stop-color="#47211f"/><stop offset="0.973" stop-color="#2c0909"/><stop offset="0.995" stop-color="#290606"/><stop offset="1" stop-color="#290606"/></linearGradient>
<linearGradient id="g605" gradientUnits="userSpaceOnUse" x1="713.5" x2="895.5"><stop offset="0" stop-color="#381313"/><stop offset="0.027" stop-color="#3b1615"/><stop offset="0.132" stop-color="#512a28"/><stop offset="0.253" stop-color="#633a36"/><stop offset="0.368" stop-color="#6d443e"/><stop offset="0.489" stop-color="#704741"/><stop offset="0.599" stop-color="#6d443f"/><stop offset="0.714" stop-color="#623a36"/><stop offset="0.846" stop-color="#4c2523"/><stop offset="0.956" stop-color="#300c0c"/><stop offset="0.984" stop-color="#280505"/><stop offset="1" stop-color="#280505"/></linearGradient>
<linearGradient id="g606" gradientUnits="userSpaceOnUse" x1="714.5" x2="893.5"><stop offset="0" stop-color="#371212"/><stop offset="0.028" stop-color="#391414"/><stop offset="0.128" stop-color="#4e2725"/><stop offset="0.24" stop-color="#5f3733"/><stop offset="0.369" stop-color="#6a423c"/><stop offset="0.492" stop-color="#6e453f"/><stop offset="0.62" stop-color="#69413c"/><stop offset="0.737" stop-color="#5d3532"/><stop offset="0.86" stop-color="#47211f"/><stop offset="0.961" stop-color="#2e0a0a"/><stop offset="0.989" stop-color="#280505"/><stop offset="1" stop-color="#280505"/></linearGradient>
<linearGradient id="g607" gradientUnits="userSpaceOnUse" x1="716.5" x2="892.5"><stop offset="0" stop-color="#361111"/><stop offset="0.023" stop-color="#371312"/><stop offset="0.125" stop-color="#4c2524"/><stop offset="0.239" stop-color="#5d3531"/><stop offset="0.364" stop-color="#673f3a"/><stop offset="0.483" stop-color="#6b423d"/><stop offset="0.591" stop-color="#68403b"/><stop offset="0.716" stop-color="#5d3532"/><stop offset="0.83" stop-color="#4b2423"/><stop offset="0.92" stop-color="#371212"/><stop offset="0.983" stop-color="#270404"/><stop offset="1" stop-color="#270404"/></linearGradient>
<linearGradient id="g608" gradientUnits="userSpaceOnUse" x1="718.5" x2="890.5"><stop offset="0" stop-color="#341010"/><stop offset="0.023" stop-color="#371212"/><stop offset="0.151" stop-color="#4f2826"/><stop offset="0.291" stop-color="#603734"/><stop offset="0.401" stop-color="#673e39"/><stop offset="0.523" stop-color="#68403b"/><stop offset="0.634" stop-color="#633b36"/><stop offset="0.75" stop-color="#572f2c"/><stop offset="0.866" stop-color="#421c1b"/><stop offset="0.959" stop-color="#2c0809"/><stop offset="0.988" stop-color="#260304"/><stop offset="1" stop-color="#260304"/></linearGradient>
<linearGradient id="g609" gradientUnits="userSpaceOnUse" x1="719.5" x2="888.5"><stop offset="0" stop-color="#330f0f"/><stop offset="0.024" stop-color="#351010"/><stop offset="0.154" stop-color="#4d2624"/><stop offset="0.302" stop-color="#5e3632"/><stop offset="0.444" stop-color="#653d38"/><stop offset="0.556" stop-color="#653c38"/><stop offset="0.675" stop-color="#5d3532"/><stop offset="0.793" stop-color="#4e2725"/><stop offset="0.893" stop-color="#3b1616"/><stop offset="0.982" stop-color="#250303"/><stop offset="1" stop-color="#250303"/></linearGradient>
<linearGradient id="g610" gradientUnits="userSpaceOnUse" x1="721.5" x2="887.5"><stop offset="0" stop-color="#320e0e"/><stop offset="0.024" stop-color="#340f0f"/><stop offset="0.139" stop-color="#492221"/><stop offset="0.271" stop-color="#59312e"/><stop offset="0.404" stop-color="#613935"/><stop offset="0.518" stop-color="#633a36"/><stop offset="0.645" stop-color="#5d3531"/><stop offset="0.759" stop-color="#512927"/><stop offset="0.88" stop-color="#3c1716"/><stop offset="0.976" stop-color="#250303"/><stop offset="1" stop-color="#250303"/></linearGradient>
<linearGradient id="g611" gradientUnits="userSpaceOnUse" x1="723.5" x2="885.5"><stop offset="0" stop-color="#310d0d"/><stop offset="0.025" stop-color="#330f0f"/><stop offset="0.167" stop-color="#4b2422"/><stop offset="0.302" stop-color="#59312e"/><stop offset="0.438" stop-color="#5f3733"/><stop offset="0.556" stop-color="#5f3733"/><stop offset="0.691" stop-color="#562e2c"/><stop offset="0.815" stop-color="#46201f"/><stop offset="0.926" stop-color="#310d0d"/><stop offset="0.975" stop-color="#250303"/><stop offset="1" stop-color="#250303"/></linearGradient>
<linearGradient id="g612" gradientUnits="userSpaceOnUse" x1="725.5" x2="883.5"><stop offset="0" stop-color="#300c0c"/><stop offset="0.038" stop-color="#341010"/><stop offset="0.184" stop-color="#4b2422"/><stop offset="0.329" stop-color="#58302d"/><stop offset="0.456" stop-color="#5d3531"/><stop offset="0.589" stop-color="#5b3330"/><stop offset="0.734" stop-color="#4f2826"/><stop offset="0.854" stop-color="#3e1817"/><stop offset="0.975" stop-color="#250303"/><stop offset="1" stop-color="#250303"/></linearGradient>
<linearGradient id="g613" gradientUnits="userSpaceOnUse" x1="727.5" x2="881.5"><stop offset="0" stop-color="#2f0b0b"/><stop offset="0.045" stop-color="#341010"/><stop offset="0.169" stop-color="#47201f"/><stop offset="0.318" stop-color="#552d2b"/><stop offset="0.474" stop-color="#5a322f"/><stop offset="0.61" stop-color="#572f2c"/><stop offset="0.747" stop-color="#4b2423"/><stop offset="0.864" stop-color="#3a1515"/><stop offset="0.974" stop-color="#250303"/><stop offset="1" stop-color="#250303"/></linearGradient>
<linearGradient id="g614" gradientUnits="userSpaceOnUse" x1="729.5" x2="879.5"><stop offset="0" stop-color="#2d0a0a"/><stop offset="0.027" stop-color="#300c0c"/><stop offset="0.173" stop-color="#451f1e"/><stop offset="0.307" stop-color="#512a28"/><stop offset="0.467" stop-color="#572f2c"/><stop offset="0.6" stop-color="#542d2a"/><stop offset="0.733" stop-color="#4a2322"/><stop offset="0.853" stop-color="#3a1515"/><stop offset="0.967" stop-color="#250303"/><stop offset="1" stop-color="#250303"/></linearGradient>
<linearGradient id="g615" gradientUnits="userSpaceOnUse" x1="731.5" x2="877.5"><stop offset="0" stop-color="#2c0909"/><stop offset="0.027" stop-color="#2e0b0b"/><stop offset="0.164" stop-color="#421c1b"/><stop offset="0.322" stop-color="#4f2826"/><stop offset="0.473" stop-color="#542c2a"/><stop offset="0.61" stop-color="#512a27"/><stop offset="0.74" stop-color="#47201f"/><stop offset="0.877" stop-color="#351010"/><stop offset="0.966" stop-color="#250303"/><stop offset="1" stop-color="#250303"/></linearGradient>
<linearGradient id="g616" gradientUnits="userSpaceOnUse" x1="733.5" x2="875.5"><stop offset="0" stop-color="#2b0808"/><stop offset="0.042" stop-color="#2f0b0b"/><stop offset="0.176" stop-color="#411b1a"/><stop offset="0.338" stop-color="#4d2624"/><stop offset="0.493" stop-color="#512927"/><stop offset="0.634" stop-color="#4c2624"/><stop offset="0.761" stop-color="#421c1b"/><stop offset="0.915" stop-color="#2c0909"/><stop offset="0.958" stop-color="#250303"/><stop offset="1" stop-color="#250303"/></linearGradient>
<linearGradient id="g617" gradientUnits="userSpaceOnUse" x1="735.5" x2="873.5"><stop offset="0" stop-color="#2a0707"/><stop offset="0.043" stop-color="#2e0a0a"/><stop offset="0.188" stop-color="#3f1a19"/><stop offset="0.362" stop-color="#4b2423"/><stop offset="0.551" stop-color="#4d2624"/><stop offset="0.696" stop-color="#451f1e"/><stop offset="0.841" stop-color="#361111"/><stop offset="0.949" stop-color="#250303"/><stop offset="1" stop-color="#250303"/></linearGradient>
<linearGradient id="g618" gradientUnits="userSpaceOnUse" x1="737.5" x2="871.5"><stop offset="0" stop-color="#290506"/><stop offset="0.045" stop-color="#2c0909"/><stop offset="0.179" stop-color="#3c1616"/><stop offset="0.343" stop-color="#47211f"/><stop offset="0.507" stop-color="#4a2322"/><stop offset="0.657" stop-color="#451f1d"/><stop offset="0.813" stop-color="#371212"/><stop offset="0.94" stop-color="#250303"/><stop offset="1" stop-color="#250303"/></linearGradient>
<linearGradient id="g619" gradientUnits="userSpaceOnUse" x1="739.5" x2="868.5"><stop offset="0" stop-color="#270405"/><stop offset="0.031" stop-color="#290506"/><stop offset="0.202" stop-color="#3b1615"/><stop offset="0.38" stop-color="#451f1e"/><stop offset="0.535" stop-color="#46201f"/><stop offset="0.69" stop-color="#401a19"/><stop offset="0.829" stop-color="#330f0f"/><stop offset="0.938" stop-color="#250303"/><stop offset="1" stop-color="#250303"/></linearGradient>
<linearGradient id="g620" gradientUnits="userSpaceOnUse" x1="742.5" x2="866.5"><stop offset="0" stop-color="#260304"/><stop offset="0.048" stop-color="#2a0607"/><stop offset="0.218" stop-color="#3a1514"/><stop offset="0.395" stop-color="#421c1b"/><stop offset="0.589" stop-color="#421c1b"/><stop offset="0.766" stop-color="#371212"/><stop offset="0.935" stop-color="#250303"/><stop offset="1" stop-color="#250303"/></linearGradient>
<linearGradient id="g621" gradientUnits="userSpaceOnUse" x1="745.5" x2="863.5"><stop offset="0" stop-color="#250303"/><stop offset="0.068" stop-color="#2a0707"/><stop offset="0.229" stop-color="#381313"/><stop offset="0.424" stop-color="#3f1a19"/><stop offset="0.568" stop-color="#3f1918"/><stop offset="0.737" stop-color="#371212"/><stop offset="0.924" stop-color="#250303"/><stop offset="1" stop-color="#250303"/></linearGradient>
<linearGradient id="g622" gradientUnits="userSpaceOnUse" x1="747.5" x2="861.5"><stop offset="0" stop-color="#250303"/><stop offset="0.053" stop-color="#270404"/><stop offset="0.246" stop-color="#361111"/><stop offset="0.456" stop-color="#3c1716"/><stop offset="0.614" stop-color="#3a1514"/><stop offset="0.798" stop-color="#2f0b0b"/><stop offset="0.904" stop-color="#250303"/><stop offset="1" stop-color="#250303"/></linearGradient>
<linearGradient id="g623" gradientUnits="userSpaceOnUse" x1="750.5" x2="858.5"><stop offset="0" stop-color="#250303"/><stop offset="0.074" stop-color="#270404"/><stop offset="0.278" stop-color="#34100f"/><stop offset="0.454" stop-color="#381313"/><stop offset="0.63" stop-color="#361111"/><stop offset="0.815" stop-color="#2b0808"/><stop offset="0.889" stop-color="#250303"/><stop offset="1" stop-color="#250303"/></linearGradient>
<linearGradient id="g624" gradientUnits="userSpaceOnUse" x1="753.5" x2="855.5"><stop offset="0" stop-color="#250303"/><stop offset="0.088" stop-color="#260304"/><stop offset="0.284" stop-color="#310d0d"/><stop offset="0.52" stop-color="#351010"/><stop offset="0.716" stop-color="#2f0b0b"/><stop offset="0.882" stop-color="#250303"/><stop offset="1" stop-color="#250303"/></linearGradient>
<linearGradient id="g625" gradientUnits="userSpaceOnUse" x1="757.5" x2="851.5"><stop offset="0" stop-color="#250303"/><stop offset="0.128" stop-color="#270404"/><stop offset="0.33" stop-color="#2f0b0b"/><stop offset="0.532" stop-color="#310d0d"/><stop offset="0.755" stop-color="#2a0607"/><stop offset="0.862" stop-color="#250303"/><stop offset="1" stop-color="#250303"/></linearGradient>
<linearGradient id="g626" gradientUnits="userSpaceOnUse" x1="760.5" x2="848.5"><stop offset="0" stop-color="#250303"/><stop offset="0.17" stop-color="#260304"/><stop offset="0.375" stop-color="#2c0909"/><stop offset="0.602" stop-color="#2c0808"/><stop offset="0.83" stop-color="#250303"/><stop offset="1" stop-color="#250303"/></linearGradient>
<linearGradient id="g627" gradientUnits="userSpaceOnUse" x1="764.5" x2="844.5"><stop offset="0" stop-color="#250303"/><stop offset="0.263" stop-color="#260304"/><stop offset="0.512" stop-color="#290606"/><stop offset="0.825" stop-color="#250303"/><stop offset="1" stop-color="#250303"/></linearGradient>
<linearGradient id="g628" gradientUnits="userSpaceOnUse" x1="769.5" x2="839.5"><stop offset="0" stop-color="#250303"/><stop offset="1" stop-color="#250303"/></linearGradient>
<linearGradient id="g629" gradientUnits="userSpaceOnUse" x1="774.5" x2="834.5"><stop offset="0" stop-color="#250303"/><stop offset="1" stop-color="#250303"/></linearGradient>
<linearGradient id="g630" gradientUnits="userSpaceOnUse" x1="781.5" x2="827.5"><stop offset="0" stop-color="#250303"/><stop offset="1" stop-color="#250303"/></linearGradient>
<linearGradient id="g631" gradientUnits="userSpaceOnUse" x1="792.5" x2="816.5"><stop offset="0" stop-color="#250303"/><stop offset="1" stop-color="#250303"/></linearGradient>
<linearGradient id="g632" gradientUnits="userSpaceOnUse" x1="801.5" x2="806.5"><stop offset="0" stop-color="#250303"/><stop offset="1" stop-color="#250303"/></linearGradient>
</defs>
<path d="M1393.51 570.88L1281.99 1486.77 M1347.83 562.75L1152.93 1412.84 M1303.81 554.90L1037.20 1346.55 M1261.35 547.34L932.83 1286.76 M1220.37 540.04L838.23 1232.57 M1180.79 532.99L752.08 1183.23 M1142.55 526.17L673.31 1138.10 M1105.57 519.59L601.00 1096.68 M1069.80 513.21L534.39 1058.53 M1035.18 507.04L472.83 1023.26 M1001.65 501.07L415.77 990.58 M969.16 495.28L362.74 960.20 M937.67 489.67L313.31 931.89 M907.12 484.23L267.14 905.44 M877.49 478.95L223.91 880.68 M848.72 473.83L183.36 857.44 M820.78 468.85L145.23 835.60 M793.63 464.01L109.32 815.03 M767.25 459.31L75.44 795.63 M741.59 454.74L43.43 777.29 M716.63 450.29L13.13 759.93 M692.35 445.97L-15.59 743.48" stroke="#9a9a9a" stroke-width="1" stroke-dasharray="2 1" fill="none"/>
<path d="M1393.51 570.88L692.35 445.97 M1391.72 585.56L674.54 453.45 M1389.81 601.23L655.87 461.30 M1387.77 618.03L636.28 469.53 M1385.57 636.06L615.69 478.18 M1383.21 655.47L594.03 487.29 M1380.66 676.42L571.21 496.88 M1377.89 699.12L547.14 506.99 M1374.89 723.77L521.71 517.68 M1371.62 750.65L494.80 528.99 M1368.04 780.07L466.27 540.98 M1364.10 812.42L435.99 553.70 M1359.75 848.14L403.78 567.24 M1354.92 887.80L369.44 581.67 M1349.53 932.09L332.77 597.08 M1343.46 981.88L293.52 613.57 M1336.60 1038.23L251.41 631.27 M1328.77 1102.56L206.10 650.31 M1319.74 1176.68L157.22 670.85 M1309.23 1263.01L104.34 693.08 M1296.83 1364.85L46.94 717.20 M1281.99 1486.77L-15.59 743.48" stroke="#a4a4a4" stroke-width="1" stroke-dasharray="3 1.3" fill="none"/>
<g clip-path="url(#sc)">
<rect x="801" y="312" width="6" height="1" fill="url(#g312)"/>
<rect x="786" y="313" width="36" height="1" fill="url(#g313)"/>
<rect x="778" y="314" width="53" height="1" fill="url(#g314)"/>
<rect x="772" y="315" width="65" height="1" fill="url(#g315)"/>
<rect x="767" y="316" width="75" height="1" fill="url(#g316)"/>
<rect x="763" y="317" width="83" height="1" fill="url(#g317)"/>
<rect x="759" y="318" width="91" height="1" fill="url(#g318)"/>
<rect x="755" y="319" width="99" height="1" fill="url(#g319)"/>
<rect x="752" y="320" width="105" height="1" fill="url(#g320)"/>
<rect x="749" y="321" width="111" height="1" fill="url(#g321)"/>
<rect x="746" y="322" width="117" height="1" fill="url(#g322)"/>
<rect x="743" y="323" width="122" height="1" fill="url(#g323)"/>
<rect x="741" y="324" width="127" height="1" fill="url(#g324)"/>
<rect x="738" y="325" width="132" height="1" fill="url(#g325)"/>
<rect x="736" y="326" width="137" height="1" fill="url(#g326)"/>
<rect x="734" y="327" width="141" height="1" fill="url(#g327)"/>
<rect x="732" y="328" width="145" height="1" fill="url(#g328)"/>
<rect x="730" y="329" width="149" height="1" fill="url(#g329)"/>
<rect x="728" y="330" width="153" height="1" fill="url(#g330)"/>
<rect x="726" y="331" width="157" height="1" fill="url(#g331)"/>
<rect x="724" y="332" width="161" height="1" fill="url(#g332)"/>
<rect x="722" y="333" width="165" height="1" fill="url(#g333)"/>
<rect x="720" y="334" width="168" height="1" fill="url(#g334)"/>
<rect x="719" y="335" width="171" height="1" fill="url(#g335)"/>
<rect x="717" y="336" width="175" height="1" fill="url(#g336)"/>
<rect x="715" y="337" width="178" height="1" fill="url(#g337)"/>
<rect x="714" y="338" width="181" height="1" fill="url(#g338)"/>
<rect x="712" y="339" width="185" height="1" fill="url(#g339)"/>
<rect x="711" y="340" width="187" height="1" fill="url(#g340)"/>
<rect x="709" y="341" width="190" height="1" fill="url(#g341)"/>
<rect x="708" y="342" width="193" height="1" fill="url(#g342)"/>
<rect x="706" y="343" width="196" height="1" fill="url(#g343)"/>
<rect x="705" y="344" width="199" height="1" fill="url(#g344)"/>
<rect x="704" y="345" width="201" height="1" fill="url(#g345)"/>
<rect x="702" y="346" width="204" height="1" fill="url(#g346)"/>
<rect x="701" y="347" width="207" height="1" fill="url(#g347)"/>
<rect x="700" y="348" width="209" height="1" fill="url(#g348)"/>
<rect x="699" y="349" width="211" height="1" fill="url(#g349)"/>
<rect x="698" y="350" width="213" height="1" fill="url(#g350)"/>
<rect x="696" y="351" width="216" height="1" fill="url(#g351)"/>
<rect x="695" y="352" width="219" height="1" fill="url(#g352)"/>
<rect x="694" y="353" width="221" height="1" fill="url(#g353)"/>
<rect x="693" y="354" width="223" height="1" fill="url(#g354)"/>
<rect x="692" y="355" width="225" height="1" fill="url(#g355)"/>
<rect x="691" y="356" width="227" height="1" fill="url(#g356)"/>
<rect x="690" y="357" width="229" height="1" fill="url(#g357)"/>
<rect x="689" y="358" width="231" height="1" fill="url(#g358)"/>
<rect x="688" y="359" width="233" height="1" fill="url(#g359)"/>
<rect x="687" y="360" width="235" height="1" fill="url(#g360)"/>
<rect x="686" y="361" width="237" height="1" fill="url(#g361)"/>
<rect x="685" y="362" width="239" height="1" fill="url(#g362)"/>
<rect x="684" y="363" width="241" height="1" fill="url(#g363)"/>
<rect x="683" y="364" width="243" height="1" fill="url(#g364)"/>
<rect x="682" y="365" width="245" height="1" fill="url(#g365)"/>
<rect x="681" y="366" width="247" height="1" fill="url(#g366)"/>
<rect x="680" y="367" width="249" height="1" fill="url(#g367)"/>
<rect x="679" y="368" width="251" height="1" fill="url(#g368)"/>
<rect x="678" y="369" width="252" height="1" fill="url(#g369)"/>
<rect x="678" y="370" width="253" height="1" fill="url(#g370)"/>
<rect x="677" y="371" width="255" height="1" fill="url(#g371)"/>
<rect x="676" y="372" width="257" height="1" fill="url(#g372)"/>
<rect x="675" y="373" width="259" height="1" fill="url(#g373)"/>
<rect x="674" y="374" width="261" height="1" fill="url(#g374)"/>
<rect x="674" y="375" width="261" height="1" fill="url(#g375)"/>
<rect x="673" y="376" width="263" height="1" fill="url(#g376)"/>
<rect x="672" y="377" width="265" height="1" fill="url(#g377)"/>
<rect x="671" y="378" width="267" height="1" fill="url(#g378)"/>
<rect x="671" y="379" width="267" height="1" fill="url(#g379)"/>
<rect x="670" y="380" width="269" height="1" fill="url(#g380)"/>
<rect x="669" y="381" width="271" height="1" fill="url(#g381)"/>
<rect x="668" y="382" width="272" height="1" fill="url(#g382)"/>
<rect x="668" y="383" width="273" height="1" fill="url(#g383)"/>
<rect x="667" y="384" width="275" height="1" fill="url(#g384)"/>
<rect x="666" y="385" width="276" height="1" fill="url(#g385)"/>
<rect x="666" y="386" width="277" height="1" fill="url(#g386)"/>
<rect x="665" y="387" width="279" height="1" fill="url(#g387)"/>
<rect x="664" y="388" width="280" height="1" fill="url(#g388)"/>
<rect x="664" y="389" width="281" height="1" fill="url(#g389)"/>
<rect x="663" y="390" width="283" height="1" fill="url(#g390)"/>
<rect x="663" y="391" width="283" height="1" fill="url(#g391)"/>
<rect x="662" y="392" width="285" height="1" fill="url(#g392)"/>
<rect x="662" y="393" width="285" height="1" fill="url(#g393)"/>
<rect x="661" y="394" width="287" height="1" fill="url(#g394)"/>
<rect x="660" y="395" width="288" height="1" fill="url(#g395)"/>
<rect x="660" y="396" width="289" height="1" fill="url(#g396)"/>
<rect x="659" y="397" width="291" height="1" fill="url(#g397)"/>
<rect x="659" y="398" width="291" height="1" fill="url(#g398)"/>
<rect x="658" y="399" width="293" height="1" fill="url(#g399)"/>
<rect x="658" y="400" width="293" height="1" fill="url(#g400)"/>
<rect x="657" y="401" width="295" height="1" fill="url(#g401)"/>
<rect x="657" y="402" width="295" height="1" fill="url(#g402)"/>
<rect x="656" y="403" width="297" height="1" fill="url(#g403)"/>
<rect x="656" y="404" width="297" height="1" fill="url(#g404)"/>
<rect x="655" y="405" width="299" height="1" fill="url(#g405)"/>
<rect x="655" y="406" width="299" height="1" fill="url(#g406)"/>
<rect x="654" y="407" width="300" height="1" fill="url(#g407)"/>
<rect x="654" y="408" width="301" height="1" fill="url(#g408)"/>
<rect x="653" y="409" width="302" height="1" fill="url(#g409)"/>
<rect x="653" y="410" width="303" height="1" fill="url(#g410)"/>
<rect x="653" y="411" width="303" height="1" fill="url(#g411)"/>
<rect x="652" y="412" width="305" height="1" fill="url(#g412)"/>
<rect x="652" y="413" width="305" height="1" fill="url(#g413)"/>
<rect x="651" y="414" width="306" height="1" fill="url(#g414)"/>
<rect x="651" y="415" width="307" height="1" fill="url(#g415)"/>
<rect x="651" y="416" width="307" height="1" fill="url(#g416)"/>
<rect x="650" y="417" width="309" height="1" fill="url(#g417)"/>
<rect x="650" y="418" width="309" height="1" fill="url(#g418)"/>
<rect x="650" y="419" width="309" height="1" fill="url(#g419)"/>
<rect x="649" y="420" width="311" height="1" fill="url(#g420)"/>
<rect x="649" y="421" width="311" height="1" fill="url(#g421)"/>
<rect x="649" y="422" width="311" height="1" fill="url(#g422)"/>
<rect x="648" y="423" width="313" height="1" fill="url(#g423)"/>
<rect x="648" y="424" width="313" height="1" fill="url(#g424)"/>
<rect x="648" y="425" width="313" height="1" fill="url(#g425)"/>
<rect x="647" y="426" width="315" height="1" fill="url(#g426)"/>
<rect x="647" y="427" width="315" height="1" fill="url(#g427)"/>
<rect x="647" y="428" width="315" height="1" fill="url(#g428)"/>
<rect x="646" y="429" width="316" height="1" fill="url(#g429)"/>
<rect x="646" y="430" width="317" height="1" fill="url(#g430)"/>
<rect x="646" y="431" width="317" height="1" fill="url(#g431)"/>
<rect x="646" y="432" width="317" height="1" fill="url(#g432)"/>
<rect x="645" y="433" width="318" height="1" fill="url(#g433)"/>
<rect x="645" y="434" width="319" height="1" fill="url(#g434)"/>
<rect x="645" y="435" width="319" height="1" fill="url(#g435)"/>
<rect x="645" y="436" width="319" height="1" fill="url(#g436)"/>
<rect x="644" y="437" width="320" height="1" fill="url(#g437)"/>
<rect x="644" y="438" width="321" height="1" fill="url(#g438)"/>
<rect x="644" y="439" width="321" height="1" fill="url(#g439)"/>
<rect x="644" y="440" width="321" height="1" fill="url(#g440)"/>
<rect x="644" y="441" width="321" height="1" fill="url(#g441)"/>
<rect x="643" y="442" width="322" height="1" fill="url(#g442)"/>
<rect x="643" y="443" width="323" height="1" fill="url(#g443)"/>
<rect x="643" y="444" width="323" height="1" fill="url(#g444)"/>
<rect x="643" y="445" width="323" height="1" fill="url(#g445)"/>
<rect x="643" y="446" width="323" height="1" fill="url(#g446)"/>
<rect x="642" y="447" width="324" height="1" fill="url(#g447)"/>
<rect x="642" y="448" width="324" height="1" fill="url(#g448)"/>
<rect x="642" y="449" width="325" height="1" fill="url(#g449)"/>
<rect x="642" y="450" width="325" height="1" fill="url(#g450)"/>
<rect x="642" y="451" width="325" height="1" fill="url(#g451)"/>
<rect x="642" y="452" width="325" height="1" fill="url(#g452)"/>
<rect x="642" y="453" width="325" height="1" fill="url(#g453)"/>
<rect x="642" y="454" width="325" height="1" fill="url(#g454)"/>
<rect x="641" y="455" width="326" height="1" fill="url(#g455)"/>
<rect x="641" y="456" width="327" height="1" fill="url(#g456)"/>
<rect x="641" y="457" width="327" height="1" fill="url(#g457)"/>
<rect x="641" y="458" width="327" height="1" fill="url(#g458)"/>
<rect x="641" y="459" width="327" height="1" fill="url(#g459)"/>
<rect x="641" y="460" width="327" height="1" fill="url(#g460)"/>
<rect x="641" y="461" width="327" height="1" fill="url(#g461)"/>
<rect x="641" y="462" width="327" height="1" fill="url(#g462)"/>
<rect x="641" y="463" width="327" height="1" fill="url(#g463)"/>
<rect x="641" y="464" width="327" height="1" fill="url(#g464)"/>
<rect x="641" y="465" width="327" height="1" fill="url(#g465)"/>
<rect x="641" y="466" width="327" height="1" fill="url(#g466)"/>
<rect x="641" y="467" width="327" height="1" fill="url(#g467)"/>
<rect x="641" y="468" width="327" height="1" fill="url(#g468)"/>
<rect x="641" y="469" width="327" height="1" fill="url(#g469)"/>
<rect x="641" y="470" width="327" height="1" fill="url(#g470)"/>
<rect x="641" y="471" width="327" height="1" fill="url(#g471)"/>
<rect x="641" y="472" width="327" height="1" fill="url(#g472)"/>
<rect x="641" y="473" width="327" height="1" fill="url(#g473)"/>
<rect x="641" y="474" width="327" height="1" fill="url(#g474)"/>
<rect x="641" y="475" width="327" height="1" fill="url(#g475)"/>
<rect x="641" y="476" width="327" height="1" fill="url(#g476)"/>
<rect x="641" y="477" width="327" height="1" fill="url(#g477)"/>
<rect x="641" y="478" width="327" height="1" fill="url(#g478)"/>
<rect x="641" y="479" width="327" height="1" fill="url(#g479)"/>
<rect x="641" y="480" width="327" height="1" fill="url(#g480)"/>
<rect x="641" y="481" width="327" height="1" fill="url(#g481)"/>
<rect x="641" y="482" width="327" height="1" fill="url(#g482)"/>
<rect x="641" y="483" width="327" height="1" fill="url(#g483)"/>
<rect x="641" y="484" width="327" height="1" fill="url(#g484)"/>
<rect x="641" y="485" width="327" height="1" fill="url(#g485)"/>
<rect x="641" y="486" width="327" height="1" fill="url(#g486)"/>
<rect x="641" y="487" width="327" height="1" fill="url(#g487)"/>
<rect x="641" y="488" width="326" height="1" fill="url(#g488)"/>
<rect x="641" y="489" width="326" height="1" fill="url(#g489)"/>
<rect x="642" y="490" width="325" height="1" fill="url(#g490)"/>
<rect x="642" y="491" width="325" height="1" fill="url(#g491)"/>
<rect x="642" y="492" width="325" height="1" fill="url(#g492)"/>
<rect x="642" y="493" width="325" height="1" fill="url(#g493)"/>
<rect x="642" y="494" width="325" height="1" fill="url(#g494)"/>
<rect x="642" y="495" width="325" height="1" fill="url(#g495)"/>
<rect x="642" y="496" width="324" height="1" fill="url(#g496)"/>
<rect x="643" y="497" width="323" height="1" fill="url(#g497)"/>
<rect x="643" y="498" width="323" height="1" fill="url(#g498)"/>
<rect x="643" y="499" width="323" height="1" fill="url(#g499)"/>
<rect x="643" y="500" width="323" height="1" fill="url(#g500)"/>
<rect x="643" y="501" width="323" height="1" fill="url(#g501)"/>
<rect x="643" y="502" width="322" height="1" fill="url(#g502)"/>
<rect x="644" y="503" width="321" height="1" fill="url(#g503)"/>
<rect x="644" y="504" width="321" height="1" fill="url(#g504)"/>
<rect x="644" y="505" width="321" height="1" fill="url(#g505)"/>
<rect x="644" y="506" width="321" height="1" fill="url(#g506)"/>
<rect x="644" y="507" width="320" height="1" fill="url(#g507)"/>
<rect x="645" y="508" width="319" height="1" fill="url(#g508)"/>
<rect x="645" y="509" width="319" height="1" fill="url(#g509)"/>
<rect x="645" y="510" width="319" height="1" fill="url(#g510)"/>
<rect x="645" y="511" width="318" height="1" fill="url(#g511)"/>
<rect x="646" y="512" width="317" height="1" fill="url(#g512)"/>
<rect x="646" y="513" width="317" height="1" fill="url(#g513)"/>
<rect x="646" y="514" width="317" height="1" fill="url(#g514)"/>
<rect x="647" y="515" width="315" height="1" fill="url(#g515)"/>
<rect x="647" y="516" width="315" height="1" fill="url(#g516)"/>
<rect x="647" y="517" width="315" height="1" fill="url(#g517)"/>
<rect x="647" y="518" width="314" height="1" fill="url(#g518)"/>
<rect x="648" y="519" width="313" height="1" fill="url(#g519)"/>
<rect x="648" y="520" width="313" height="1" fill="url(#g520)"/>
<rect x="648" y="521" width="312" height="1" fill="url(#g521)"/>
<rect x="649" y="522" width="311" height="1" fill="url(#g522)"/>
<rect x="649" y="523" width="311" height="1" fill="url(#g523)"/>
<rect x="649" y="524" width="310" height="1" fill="url(#g524)"/>
<rect x="650" y="525" width="309" height="1" fill="url(#g525)"/>
<rect x="650" y="526" width="309" height="1" fill="url(#g526)"/>
<rect x="650" y="527" width="308" height="1" fill="url(#g527)"/>
<rect x="651" y="528" width="307" height="1" fill="url(#g528)"/>
<rect x="651" y="529" width="307" height="1" fill="url(#g529)"/>
<rect x="652" y="530" width="305" height="1" fill="url(#g530)"/>
<rect x="652" y="531" width="305" height="1" fill="url(#g531)"/>
<rect x="652" y="532" width="304" height="1" fill="url(#g532)"/>
<rect x="653" y="533" width="303" height="1" fill="url(#g533)"/>
<rect x="653" y="534" width="303" height="1" fill="url(#g534)"/>
<rect x="654" y="535" width="301" height="1" fill="url(#g535)"/>
<rect x="654" y="536" width="301" height="1" fill="url(#g536)"/>
<rect x="655" y="537" width="299" height="1" fill="url(#g537)"/>
<rect x="655" y="538" width="299" height="1" fill="url(#g538)"/>
<rect x="655" y="539" width="298" height="1" fill="url(#g539)"/>
<rect x="656" y="540" width="297" height="1" fill="url(#g540)"/>
<rect x="656" y="541" width="296" height="1" fill="url(#g541)"/>
<rect x="657" y="542" width="295" height="1" fill="url(#g542)"/>
<rect x="657" y="543" width="294" height="1" fill="url(#g543)"/>
<rect x="658" y="544" width="293" height="1" fill="url(#g544)"/>
<rect x="658" y="545" width="292" height="1" fill="url(#g545)"/>
<rect x="659" y="546" width="291" height="1" fill="url(#g546)"/>
<rect x="660" y="547" width="289" height="1" fill="url(#g547)"/>
<rect x="660" y="548" width="289" height="1" fill="url(#g548)"/>
<rect x="661" y="549" width="287" height="1" fill="url(#g549)"/>
<rect x="661" y="550" width="287" height="1" fill="url(#g550)"/>
<rect x="662" y="551" width="285" height="1" fill="url(#g551)"/>
<rect x="662" y="552" width="284" height="1" fill="url(#g552)"/>
<rect x="663" y="553" width="283" height="1" fill="url(#g553)"/>
<rect x="664" y="554" width="281" height="1" fill="url(#g554)"/>
<rect x="664" y="555" width="281" height="1" fill="url(#g555)"/>
<rect x="665" y="556" width="279" height="1" fill="url(#g556)"/>
<rect x="665" y="557" width="278" height="1" fill="url(#g557)"/>
<rect x="666" y="558" width="277" height="1" fill="url(#g558)"/>
<rect x="667" y="559" width="275" height="1" fill="url(#g559)"/>
<rect x="667" y="560" width="274" height="1" fill="url(#g560)"/>
<rect x="668" y="561" width="273" height="1" fill="url(#g561)"/>
<rect x="669" y="562" width="271" height="1" fill="url(#g562)"/>
<rect x="669" y="563" width="270" height="1" fill="url(#g563)"/>
<rect x="670" y="564" width="269" height="1" fill="url(#g564)"/>
<rect x="671" y="565" width="267" height="1" fill="url(#g565)"/>
<rect x="672" y="566" width="265" height="1" fill="url(#g566)"/>
<rect x="672" y="567" width="264" height="1" fill="url(#g567)"/>
<rect x="673" y="568" width="263" height="1" fill="url(#g568)"/>
<rect x="674" y="569" width="261" height="1" fill="url(#g569)"/>
<rect x="675" y="570" width="259" height="1" fill="url(#g570)"/>
<rect x="675" y="571" width="258" height="1" fill="url(#g571)"/>
<rect x="676" y="572" width="257" height="1" fill="url(#g572)"/>
<rect x="677" y="573" width="255" height="1" fill="url(#g573)"/>
<rect x="678" y="574" width="253" height="1" fill="url(#g574)"/>
<rect x="679" y="575" width="251" height="1" fill="url(#g575)"/>
<rect x="680" y="576" width="249" height="1" fill="url(#g576)"/>
<rect x="680" y="577" width="248" height="1" fill="url(#g577)"/>
<rect x="681" y="578" width="246" height="1" fill="url(#g578)"/>
<rect x="682" y="579" width="245" height="1" fill="url(#g579)"/>
<rect x="683" y="580" width="243" height="1" fill="url(#g580)"/>
<rect x="684" y="581" width="241" height="1" fill="url(#g581)"/>
<rect x="685" y="582" width="239" height="1" fill="url(#g582)"/>
<rect x="686" y="583" width="237" height="1" fill="url(#g583)"/>
<rect x="687" y="584" width="235" height="1" fill="url(#g584)"/>
<rect x="688" y="585" width="233" height="1" fill="url(#g585)"/>
<rect x="689" y="586" width="231" height="1" fill="url(#g586)"/>
<rect x="690" y="587" width="229" height="1" fill="url(#g587)"/>
<rect x="691" y="588" width="227" height="1" fill="url(#g588)"/>
<rect x="692" y="589" width="225" height="1" fill="url(#g589)"/>
<rect x="693" y="590" width="222" height="1" fill="url(#g590)"/>
<rect x="694" y="591" width="220" height="1" fill="url(#g591)"/>
<rect x="696" y="592" width="217" height="1" fill="url(#g592)"/>
<rect x="697" y="593" width="215" height="1" fill="url(#g593)"/>
<rect x="698" y="594" width="213" height="1" fill="url(#g594)"/>
<rect x="699" y="595" width="211" height="1" fill="url(#g595)"/>
<rect x="700" y="596" width="208" height="1" fill="url(#g596)"/>
<rect x="702" y="597" width="205" height="1" fill="url(#g597)"/>
<rect x="703" y="598" width="203" height="1" fill="url(#g598)"/>
<rect x="704" y="599" width="200" height="1" fill="url(#g599)"/>
<rect x="706" y="600" width="197" height="1" fill="url(#g600)"/>
<rect x="707" y="601" width="195" height="1" fill="url(#g601)"/>
<rect x="708" y="602" width="192" height="1" fill="url(#g602)"/>
<rect x="710" y="603" width="189" height="1" fill="url(#g603)"/>
<rect x="711" y="604" width="186" height="1" fill="url(#g604)"/>
<rect x="713" y="605" width="183" height="1" fill="url(#g605)"/>
<rect x="714" y="606" width="180" height="1" fill="url(#g606)"/>
<rect x="716" y="607" width="177" height="1" fill="url(#g607)"/>
<rect x="718" y="608" width="173" height="1" fill="url(#g608)"/>
<rect x="719" y="609" width="170" height="1" fill="url(#g609)"/>
<rect x="721" y="610" width="167" height="1" fill="url(#g610)"/>
<rect x="723" y="611" width="163" height="1" fill="url(#g611)"/>
<rect x="725" y="612" width="159" height="1" fill="url(#g612)"/>
<rect x="727" y="613" width="155" height="1" fill="url(#g613)"/>
<rect x="729" y="614" width="151" height="1" fill="url(#g614)"/>
<rect x="731" y="615" width="147" height="1" fill="url(#g615)"/>
<rect x="733" y="616" width="143" height="1" fill="url(#g616)"/>
<rect x="735" y="617" width="139" height="1" fill="url(#g617)"/>
<rect x="737" y="618" width="135" height="1" fill="url(#g618)"/>
<rect x="739" y="619" width="130" height="1" fill="url(#g619)"/>
<rect x="742" y="620" width="125" height="1" fill="url(#g620)"/>
<rect x="745" y="621" width="119" height="1" fill="url(#g621)"/>
<rect x="747" y="622" width="115" height="1" fill="url(#g622)"/>
<rect x="750" y="623" width="109" height="1" fill="url(#g623)"/>
<rect x="753" y="624" width="103" height="1" fill="url(#g624)"/>
<rect x="757" y="625" width="95" height="1" fill="url(#g625)"/>
<rect x="760" y="626" width="89" height="1" fill="url(#g626)"/>
<rect x="764" y="627" width="81" height="1" fill="url(#g627)"/>
<rect x="769" y="628" width="71" height="1" fill="url(#g628)"/>
<rect x="774" y="629" width="61" height="1" fill="url(#g629)"/>
<rect x="781" y="630" width="47" height="1" fill="url(#g630)"/>
<rect x="792" y="631" width="25" height="1" fill="url(#g631)"/>
<rect x="801" y="632" width="6" height="1" fill="url(#g632)"/>
</g>
<circle cx="1213" cy="233" r="49.5" stroke="#c08038" stroke-width="1" fill="none" shape-rendering="crispEdges"/>
<rect x="1211" y="231" width="4" height="4" fill="#c87a28"/>
</svg>
<div id="topbar">
<span style="left:25px;font-size:14px">Files (import/export)</span>
<span style="left:179px;font-size:14px">Print it!</span>
<span style="left:252px;font-size:13.2px">Scene</span>
<span style="left:318px;font-size:14px">History</span>
<span style="left:392px;font-size:14px">Background</span>
<span style="left:495px;font-size:13.3px">Camera</span>
<span style="left:572px;font-size:14px">Tablet pressure</span>
<span style="left:696px;font-size:13.4px">Language</span>
<span style="left:785px;font-size:13.4px">Extra UI</span>
<span style="left:863px;font-size:14px">About &amp; Help</span>
<div id="stats"><div style="letter-spacing:0.85px">Vertex : 98306</div><div style="letter-spacing:0.54px">Faces : 98304</div></div>
</div>
<div class="vl" style="left:1610px;background:#6a6c72"></div>
<div class="vl" style="left:1611px;background:#283032"></div>
<div class="vl" style="left:1612px;background:#5e6670"></div>
<div id="panel">
<div class="hdr" style="top:5px"><svg class="arr" width="14" height="14" viewBox="0 0 14 14" style="left:16px;top:10px"><path d="M0.8 0.6 L11.8 6 L0.8 11.4 Z" fill="#dfe3e8"/></svg></div>
<div class="tx" style="left:-1613.0px;top:13.0px;font-size:14.5px;color:#e4e4e4;font-weight:bold;left:30px;width:277px;text-align:center;">RENDERING</div>
<div class="hdr" style="top:40px"><svg class="arr" width="14" height="14" viewBox="0 0 14 14" style="left:16px;top:10px"><path d="M0.8 0.6 L11.8 6 L0.8 11.4 Z" fill="#dfe3e8"/></svg></div>
<div class="tx" style="left:-1613.0px;top:48.0px;font-size:14.5px;color:#e4e4e4;font-weight:bold;left:30px;width:277px;text-align:center;">TOPOLOGY</div>
<div class="hdr" style="top:75px"><svg class="arr" width="14" height="14" viewBox="0 0 14 14" style="left:16px;top:10px"><path d="M0.8 0.8 L12 0.8 L6.4 11.8 Z" fill="#dfe3e8"/></svg></div>
<div class="tx" style="left:-1613.0px;top:83.0px;font-size:14.5px;color:#e4e4e4;font-weight:bold;left:30px;width:277px;text-align:center;">SCULPTING &amp; PAINTING</div>
<div class="tc" style="top:117.5px;font-size:14px;color:#a3a7ad">Tool</div>
<div class="ln" style="top:139px"></div>
<div class="tx" style="left:5.0px;top:152.0px;font-size:13.7px;">Tool</div>
<div class="sel" style="left:112.0px;top:150.1px;width:189.3px;height:21.5px;"><div class="v">Masking (-Ctrl)</div><div class="ar"><svg width="16" height="20"><path d="M4.2 7.9H11.2L7.7 11.9Z" fill="#000"/></svg></div></div>
<div class="tx" style="left:5.0px;top:178.0px;font-size:13.7px;">Radius (-X)</div>
<div class="sl" style="left:112.0px;top:176.0px;width:154.0px;height:21.6px;"><div class="f" style="width:14.0px"></div></div><div class="num" style="left:272.0px;top:176.0px;width:29.5px;height:21.6px;">50</div>
<div class="tx" style="left:5.0px;top:204.0px;font-size:13.7px;">Intensity (-C)</div>
<div class="sl" style="left:112.0px;top:202.0px;width:154.0px;height:21.6px;"><div class="f" style="width:154.0px"></div></div><div class="num" style="left:272.0px;top:202.0px;width:29.5px;height:21.6px;">100</div>
<div class="tx" style="left:5.0px;top:230.0px;font-size:13.7px;">Hardness</div>
<div class="sl" style="left:112.0px;top:228.2px;width:154.0px;height:21.6px;"><div class="f" style="width:39.0px"></div></div><div class="num" style="left:272.0px;top:228.2px;width:29.5px;height:21.6px;">25</div>
<div class="tx" style="left:5.0px;top:255.5px;font-size:13.7px;">Negative (N or -Alt)</div>
<div class="cb" style="left:284.0px;top:255.8px;width:18.2px;height:18.2px;"><svg width="22" height="22" viewBox="0 0 22 22" style="position:absolute;left:-1.5px;top:-1.5px;overflow:visible"><path d="M3.9 7.7 L7.5 13.4 L16.7 -0.1" stroke="#cdd1d8" stroke-width="1.75" fill="none" stroke-linejoin="miter"/></svg></div>
<div class="tx" style="left:5.0px;top:281.5px;font-size:13.7px;">Thin surface (front vertex only)</div>
<div class="cb" style="left:284.0px;top:281.8px;width:18.2px;height:18.2px;"></div>
<div class="btn" style="left:5.2px;top:306.0px;width:145.6px;height:21.6px;">Clear (-Ctrl + Drag)</div>
<div class="btn" style="left:156.0px;top:306.0px;width:145.8px;height:21.6px;">Invert (-Ctrl + Click)</div>
<div class="btn" style="left:5.2px;top:332.1px;width:145.6px;height:21.6px;">Blur</div>
<div class="btn" style="left:156.0px;top:332.1px;width:145.8px;height:21.6px;">Sharpen</div>
<div class="tc" style="top:366.0px;font-size:14px;color:#a3a7ad">Extract</div>
<div class="ln" style="top:388px"></div>
<div class="tx" style="left:5.0px;top:401.0px;font-size:13.7px;">Thickness</div>
<div class="sl" style="left:112.0px;top:399.2px;width:154.0px;height:21.6px;"><div class="f" style="width:93.0px"></div></div><div class="num" style="left:272.0px;top:399.2px;width:29.5px;height:21.6px;">1</div>
<div class="btn" style="left:5.2px;top:425.1px;width:296.6px;height:21.6px;">Extract !</div>
<div class="tc" style="top:459.3px;font-size:14px;color:#a3a7ad">Alpha</div>
<div class="ln" style="top:481px"></div>
<div class="tx" style="left:5.0px;top:493.5px;font-size:13.7px;">Lock position</div>
<div class="cb" style="left:284.0px;top:494.0px;width:18.2px;height:18.2px;"></div>
<div class="tx" style="left:5.0px;top:520.0px;font-size:13.7px;">Texture</div>
<div class="sel" style="left:112.0px;top:518.2px;width:189.3px;height:21.5px;"><div class="v">None</div><div class="ar"><svg width="16" height="20"><path d="M4.2 7.9H11.2L7.7 11.9Z" fill="#000"/></svg></div></div>
<div class="btn" style="left:5.2px;top:544.2px;width:296.6px;height:21.6px;">Import alpha tex (jpg, png...)</div>
<div class="tc" style="top:578.4px;font-size:14px;color:#a3a7ad">Common</div>
<div class="ln" style="top:600px"></div>
<div class="tx" style="left:5.0px;top:612.5px;font-size:13.7px;">Symmetry</div>
<div class="cb" style="left:284.0px;top:612.8px;width:18.2px;height:18.2px;"><svg width="22" height="22" viewBox="0 0 22 22" style="position:absolute;left:-1.5px;top:-1.5px;overflow:visible"><path d="M3.9 7.7 L7.5 13.4 L16.7 -0.1" stroke="#cdd1d8" stroke-width="1.75" fill="none" stroke-linejoin="miter"/></svg></div>
<div class="tx" style="left:5.0px;top:638.5px;font-size:13.7px;">Continuous</div>
<div class="cb" style="left:284.0px;top:639.0px;width:18.2px;height:18.2px;"></div>
</div>
</body></html>
